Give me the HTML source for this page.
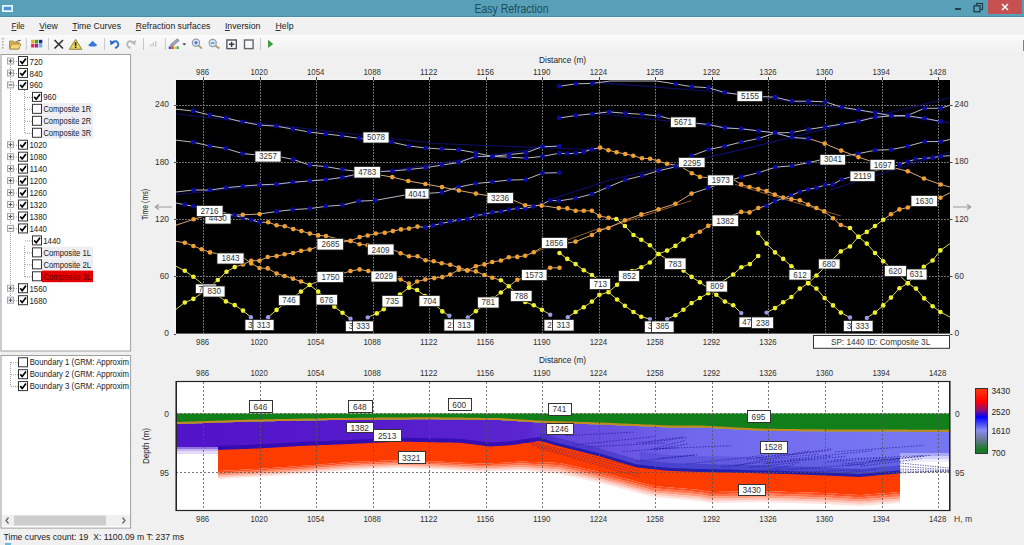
<!DOCTYPE html>
<html><head><meta charset="utf-8"><style>
html,body{margin:0;padding:0;width:1024px;height:545px;overflow:hidden;background:#f0f0f0}
svg{display:block;font-family:"Liberation Sans", sans-serif}
</style></head><body>
<svg width="1024" height="545" viewBox="0 0 1024 545">
<rect x="0" y="0" width="1024" height="545" fill="#f0f0f0" />
<rect x="0" y="0" width="1024" height="17" fill="#58a0b8" />
<line x1="0" y1="16.5" x2="1024" y2="16.5" stroke="#4a8ca2" stroke-width="1" />
<rect x="2.5" y="5.5" width="10" height="6" fill="#bfe3f5" stroke="#e8f6ff" stroke-width="1" />
<rect x="4" y="7" width="7" height="3" fill="#4a8fd8" />
<text x="511.5" y="13.0" font-size="12" fill="#1d4c5c" text-anchor="middle" textLength="74" lengthAdjust="spacingAndGlyphs" >Easy Refraction</text>
<rect x="955" y="8" width="6" height="2" fill="#1f3f4c" />
<rect x="976.5" y="3.5" width="6" height="6" fill="none" stroke="#1f3f4c" stroke-width="1.2" />
<rect x="974" y="5.8" width="6" height="6" fill="#58a0b8" stroke="#1f3f4c" stroke-width="1.3" />
<rect x="988" y="0" width="34" height="14" fill="#c75050" />
<line x1="1002" y1="4" x2="1008" y2="10" stroke="#fff" stroke-width="1.4" />
<line x1="1008" y1="4" x2="1002" y2="10" stroke="#fff" stroke-width="1.4" />
<rect x="0" y="17" width="1024" height="18" fill="#f1f1f1" />
<line x1="0" y1="17.5" x2="1024" y2="17.5" stroke="#eaf6fa" stroke-width="1" />
<text x="11.4" y="29.2" font-size="9.6" fill="#1a1a1a" text-anchor="start" textLength="13.2" lengthAdjust="spacingAndGlyphs" >File</text>
<line x1="11.4" y1="30.5" x2="16.4" y2="30.5" stroke="#1a1a1a" stroke-width="0.9" />
<text x="39.2" y="29.2" font-size="9.6" fill="#1a1a1a" text-anchor="start" textLength="18.6" lengthAdjust="spacingAndGlyphs" >View</text>
<line x1="39.2" y1="30.5" x2="44.2" y2="30.5" stroke="#1a1a1a" stroke-width="0.9" />
<text x="72.2" y="29.2" font-size="9.6" fill="#1a1a1a" text-anchor="start" textLength="48.8" lengthAdjust="spacingAndGlyphs" >Time Curves</text>
<line x1="72.2" y1="30.5" x2="77.2" y2="30.5" stroke="#1a1a1a" stroke-width="0.9" />
<text x="135.8" y="29.2" font-size="9.6" fill="#1a1a1a" text-anchor="start" textLength="74.5" lengthAdjust="spacingAndGlyphs" >Refraction surfaces</text>
<line x1="135.8" y1="30.5" x2="140.8" y2="30.5" stroke="#1a1a1a" stroke-width="0.9" />
<text x="224.9" y="29.2" font-size="9.6" fill="#1a1a1a" text-anchor="start" textLength="35.5" lengthAdjust="spacingAndGlyphs" >Inversion</text>
<line x1="224.9" y1="30.5" x2="229.9" y2="30.5" stroke="#1a1a1a" stroke-width="0.9" />
<text x="275.5" y="29.2" font-size="9.6" fill="#1a1a1a" text-anchor="start" textLength="18" lengthAdjust="spacingAndGlyphs" >Help</text>
<line x1="275.5" y1="30.5" x2="280.5" y2="30.5" stroke="#1a1a1a" stroke-width="0.9" />
<defs><linearGradient id="tbg" x1="0" y1="0" x2="0" y2="1"><stop offset="0" stop-color="#fbfbfb"/><stop offset="1" stop-color="#efefef"/></linearGradient></defs>
<rect x="0" y="35" width="1024" height="19" fill="url(#tbg)" />
<rect x="2" y="38" width="1.5" height="1.5" fill="#a0a0a0" />
<rect x="2" y="41" width="1.5" height="1.5" fill="#a0a0a0" />
<rect x="2" y="44" width="1.5" height="1.5" fill="#a0a0a0" />
<rect x="2" y="47" width="1.5" height="1.5" fill="#a0a0a0" />
<line x1="26.4" y1="38" x2="26.4" y2="50" stroke="#c8c8c8" stroke-width="1" />
<line x1="48.5" y1="38" x2="48.5" y2="50" stroke="#c8c8c8" stroke-width="1" />
<line x1="104.6" y1="38" x2="104.6" y2="50" stroke="#c8c8c8" stroke-width="1" />
<line x1="143.5" y1="38" x2="143.5" y2="50" stroke="#c8c8c8" stroke-width="1" />
<line x1="165.4" y1="38" x2="165.4" y2="50" stroke="#c8c8c8" stroke-width="1" />
<line x1="260.5" y1="38" x2="260.5" y2="50" stroke="#c8c8c8" stroke-width="1" />
<line x1="1023.5" y1="40" x2="1023.5" y2="51" stroke="#808080" stroke-width="1" />
<rect x="0" y="528" width="1024" height="17" fill="#f0f0f0" />
<text x="3.5" y="540.2" font-size="9.6" fill="#1a1a1a" text-anchor="start" textLength="180.5" lengthAdjust="spacingAndGlyphs" >Time curves count: 19  X: 1100.09 m T: 237 ms</text>
<rect x="1" y="54.5" width="129.6" height="296.5" fill="#ffffff" stroke="#a0a0a0" stroke-width="1" />
<rect x="1" y="355.5" width="129.6" height="172.6" fill="#ffffff" stroke="#a0a0a0" stroke-width="1" />
<rect x="5" y="543" width="6" height="2" fill="#6ab8e0" />
<path d="M9.5,41 h4 l1,1 h4.5 v7 h-9.5 z" fill="#d8b450" stroke="#9a7d3a" stroke-width="0.8"/>
<path d="M9.5,49 l2.2,-5 h9.3 l-2.2,5 z" fill="#f2d678" stroke="#a08440" stroke-width="0.8"/>
<path d="M16,41.5 q2,-2 4,-1.5 l-0.5,-0.8 l1.5,1.4 l-1.8,0.6 l0.4,-0.5 q-1.8,-0.2 -3.2,1.2 z" fill="#404850"/>
<rect x="31.1" y="39.8" width="3.3" height="3.6" fill="#e8b020" />
<rect x="34.9" y="39.8" width="3.3" height="3.6" fill="#40a030" />
<rect x="39.0" y="39.8" width="3.3" height="3.6" fill="#1a2a9a" />
<rect x="31.1" y="43.9" width="3.3" height="3.6" fill="#e03050" />
<rect x="34.9" y="43.9" width="3.3" height="3.6" fill="#9a20a0" />
<rect x="39.0" y="43.9" width="3.3" height="3.6" fill="#60c0e0" />
<path d="M54.5,40 L63,48.5 M63,40 L54.5,48.5" stroke="#303030" stroke-width="1.6" fill="none"/>
<path d="M75.6,39.3 L81.8,49.3 L69.4,49.3 Z" fill="#ead660" stroke="#8a7a30" stroke-width="0.9" stroke-linejoin="round"/>
<path d="M75.6,42.2 v3.6" stroke="#202020" stroke-width="1.6"/><rect x="74.8" y="46.6" width="1.6" height="1.5" fill="#202020"/>
<path d="M92.6,40.8 L97.2,45.2 L95.2,46.6 L90,46.6 L88.1,45.2 Z" fill="#3a78d8"/>
<path d="M112,42.5 q5,-3 6.2,1 q0.8,3 -3.2,4.6" stroke="#2f6fc8" stroke-width="1.9" fill="none"/>
<path d="M109.7,40 L110.5,45.3 L115,42.8 Z" fill="#2f6fc8"/>
<path d="M133.5,42.5 q-5,-3 -6.2,1 q-0.8,3 3.2,4.6" stroke="#b8b8b8" stroke-width="1.9" fill="none"/>
<path d="M136,40 L135.2,45.3 L130.7,42.8 Z" fill="#b8b8b8"/>
<rect x="150" y="44.2" width="1.4" height="2.4" fill="#c8c8c8" />
<rect x="152.6" y="42.5" width="1.4" height="4.1" fill="#c8c8c8" />
<rect x="155" y="41.1" width="1.4" height="5.5" fill="#c8c8c8" />
<path d="M170,45 L177.2,38.8 L179.2,40.6 L172,46.8 Z" fill="#98a4b8" stroke="#6a7688" stroke-width="0.6"/>
<path d="M170,45 L172,46.8 L169.5,47.2 Z" fill="#d8d0a0"/>
<rect x="168.8" y="46.4" width="2.1" height="2.6" fill="#3050a0" />
<rect x="171.4" y="46.4" width="2.1" height="2.6" fill="#d03040" />
<rect x="174.0" y="46.4" width="2.1" height="2.6" fill="#e0d040" />
<rect x="176.60000000000002" y="46.4" width="2.1" height="2.6" fill="#30a040" />
<path d="M182.4,43.4 h3.8 l-1.9,1.9 z" fill="#101010"/>
<path d="M198.6,45.4 L201.9,48.6" stroke="#b09a58" stroke-width="1.8"/>
<circle cx="196" cy="42.8" r="3.6" fill="#dfe8f6" stroke="#8e9cb4" stroke-width="1.2"/>
<path d="M194.2,42.8 h3.6 M196,41.0 v3.6" stroke="#3a5cb0" stroke-width="1.1"/>
<path d="M215.29999999999998,45.6 L219.3,48.5" stroke="#b09a58" stroke-width="1.8"/>
<circle cx="212.7" cy="43" r="3.6" fill="#dfe8f6" stroke="#8e9cb4" stroke-width="1.2"/>
<path d="M210.89999999999998,43 h3.6" stroke="#3a5cb0" stroke-width="1.1"/>
<rect x="226.9" y="40" width="9.4" height="8.6" fill="#fff" stroke="#4e5660" stroke-width="1.4"/>
<path d="M228.9,44.3 h5.4 M231.6,41.7 v5.2" stroke="#303840" stroke-width="1.5"/>
<rect x="244.5" y="40" width="8.6" height="8.6" fill="#f8f8f8" stroke="#5e6670" stroke-width="1.4"/>
<path d="M268,39.7 L273.2,43.9 L268,48.1 Z" fill="#3d9a3d"/>
<line x1="10.5" y1="65" x2="10.5" y2="296" stroke="#a0a0a0" stroke-width="1" stroke-dasharray="1,1"/>
<line x1="24.5" y1="90" x2="24.5" y2="133" stroke="#a0a0a0" stroke-width="1" stroke-dasharray="1,1"/>
<line x1="24.5" y1="246" x2="24.5" y2="277" stroke="#a0a0a0" stroke-width="1" stroke-dasharray="1,1"/>
<rect x="7.5" y="58.0" width="6" height="6" fill="#f4f4f4" stroke="#a8a8a8" stroke-width="1"/>
<path d="M8.6,61.0 h3.8" stroke="#4a5262" stroke-width="1"/>
<path d="M10.5,59.1 v3.8" stroke="#4a5262" stroke-width="1"/>
<line x1="14" y1="61.5" x2="18" y2="61.5" stroke="#a0a0a0" stroke-width="1" stroke-dasharray="1,1"/>
<rect x="18.5" y="56.5" width="9" height="9" fill="#fff" stroke="#333" stroke-width="1"/>
<path d="M20.2,61.0 L22.2,63.3 L26,58.4" stroke="#000" stroke-width="1.7" fill="none"/>
<text x="29.5" y="64.5" font-size="9.6" fill="#1a1a1a" text-anchor="start" textLength="13.25" lengthAdjust="spacingAndGlyphs" >720</text>
<rect x="7.5" y="70.0" width="6" height="6" fill="#f4f4f4" stroke="#a8a8a8" stroke-width="1"/>
<path d="M8.6,73.0 h3.8" stroke="#4a5262" stroke-width="1"/>
<path d="M10.5,71.1 v3.8" stroke="#4a5262" stroke-width="1"/>
<line x1="14" y1="73.5" x2="18" y2="73.5" stroke="#a0a0a0" stroke-width="1" stroke-dasharray="1,1"/>
<rect x="18.5" y="68.46000000000001" width="9" height="9" fill="#fff" stroke="#333" stroke-width="1"/>
<path d="M20.2,72.96000000000001 L22.2,75.26 L26,70.36000000000001" stroke="#000" stroke-width="1.7" fill="none"/>
<text x="29.5" y="76.5" font-size="9.6" fill="#1a1a1a" text-anchor="start" textLength="13.25" lengthAdjust="spacingAndGlyphs" >840</text>
<rect x="7.5" y="81.9" width="6" height="6" fill="#f4f4f4" stroke="#a8a8a8" stroke-width="1"/>
<path d="M8.6,84.9 h3.8" stroke="#4a5262" stroke-width="1"/>
<line x1="14" y1="85.4" x2="18" y2="85.4" stroke="#a0a0a0" stroke-width="1" stroke-dasharray="1,1"/>
<rect x="18.5" y="80.42" width="9" height="9" fill="#fff" stroke="#333" stroke-width="1"/>
<path d="M20.2,84.92 L22.2,87.22 L26,82.32000000000001" stroke="#000" stroke-width="1.7" fill="none"/>
<text x="29.5" y="88.4" font-size="9.6" fill="#1a1a1a" text-anchor="start" textLength="13.25" lengthAdjust="spacingAndGlyphs" >960</text>
<line x1="25" y1="97.4" x2="32" y2="97.4" stroke="#a0a0a0" stroke-width="1" stroke-dasharray="1,1"/>
<text x="43.2" y="100.4" font-size="9.6" fill="#1a1a1a" text-anchor="start" textLength="13.25" lengthAdjust="spacingAndGlyphs" >960</text>
<rect x="32.5" y="92.38" width="9" height="9" fill="#fff" stroke="#333" stroke-width="1"/>
<path d="M34.2,96.88 L36.2,99.17999999999999 L40,94.28" stroke="#000" stroke-width="1.7" fill="none"/>
<line x1="25" y1="109.3" x2="32" y2="109.3" stroke="#a0a0a0" stroke-width="1" stroke-dasharray="1,1"/>
<rect x="42" y="103.14" width="51" height="11.6" fill="#eeeef2" />
<text x="43.4" y="112.3" font-size="9.6" fill="#1a1a1a" text-anchor="start" textLength="47.7" lengthAdjust="spacingAndGlyphs" >Composite 1R</text>
<rect x="32.5" y="104.34" width="9" height="9" fill="#fff" stroke="#333" stroke-width="1"/>
<line x1="25" y1="121.3" x2="32" y2="121.3" stroke="#a0a0a0" stroke-width="1" stroke-dasharray="1,1"/>
<rect x="42" y="115.10000000000001" width="51" height="11.6" fill="#eeeef2" />
<text x="43.4" y="124.3" font-size="9.6" fill="#1a1a1a" text-anchor="start" textLength="47.7" lengthAdjust="spacingAndGlyphs" >Composite 2R</text>
<rect x="32.5" y="116.30000000000001" width="9" height="9" fill="#fff" stroke="#333" stroke-width="1"/>
<line x1="25" y1="133.3" x2="32" y2="133.3" stroke="#a0a0a0" stroke-width="1" stroke-dasharray="1,1"/>
<rect x="42" y="127.05999999999999" width="51" height="11.6" fill="#eeeef2" />
<text x="43.4" y="136.3" font-size="9.6" fill="#1a1a1a" text-anchor="start" textLength="47.7" lengthAdjust="spacingAndGlyphs" >Composite 3R</text>
<rect x="32.5" y="128.26" width="9" height="9" fill="#fff" stroke="#333" stroke-width="1"/>
<rect x="7.5" y="141.7" width="6" height="6" fill="#f4f4f4" stroke="#a8a8a8" stroke-width="1"/>
<path d="M8.6,144.7 h3.8" stroke="#4a5262" stroke-width="1"/>
<path d="M10.5,142.8 v3.8" stroke="#4a5262" stroke-width="1"/>
<line x1="14" y1="145.2" x2="18" y2="145.2" stroke="#a0a0a0" stroke-width="1" stroke-dasharray="1,1"/>
<rect x="18.5" y="140.22" width="9" height="9" fill="#fff" stroke="#333" stroke-width="1"/>
<path d="M20.2,144.72 L22.2,147.02 L26,142.12" stroke="#000" stroke-width="1.7" fill="none"/>
<text x="29.5" y="148.2" font-size="9.6" fill="#1a1a1a" text-anchor="start" textLength="17.5" lengthAdjust="spacingAndGlyphs" >1020</text>
<rect x="7.5" y="153.7" width="6" height="6" fill="#f4f4f4" stroke="#a8a8a8" stroke-width="1"/>
<path d="M8.6,156.7 h3.8" stroke="#4a5262" stroke-width="1"/>
<path d="M10.5,154.8 v3.8" stroke="#4a5262" stroke-width="1"/>
<line x1="14" y1="157.2" x2="18" y2="157.2" stroke="#a0a0a0" stroke-width="1" stroke-dasharray="1,1"/>
<rect x="18.5" y="152.18" width="9" height="9" fill="#fff" stroke="#333" stroke-width="1"/>
<path d="M20.2,156.68 L22.2,158.98000000000002 L26,154.08" stroke="#000" stroke-width="1.7" fill="none"/>
<text x="29.5" y="160.2" font-size="9.6" fill="#1a1a1a" text-anchor="start" textLength="17.5" lengthAdjust="spacingAndGlyphs" >1080</text>
<rect x="7.5" y="165.6" width="6" height="6" fill="#f4f4f4" stroke="#a8a8a8" stroke-width="1"/>
<path d="M8.6,168.6 h3.8" stroke="#4a5262" stroke-width="1"/>
<path d="M10.5,166.7 v3.8" stroke="#4a5262" stroke-width="1"/>
<line x1="14" y1="169.1" x2="18" y2="169.1" stroke="#a0a0a0" stroke-width="1" stroke-dasharray="1,1"/>
<rect x="18.5" y="164.14000000000001" width="9" height="9" fill="#fff" stroke="#333" stroke-width="1"/>
<path d="M20.2,168.64000000000001 L22.2,170.94000000000003 L26,166.04000000000002" stroke="#000" stroke-width="1.7" fill="none"/>
<text x="29.5" y="172.1" font-size="9.6" fill="#1a1a1a" text-anchor="start" textLength="17.5" lengthAdjust="spacingAndGlyphs" >1140</text>
<rect x="7.5" y="177.6" width="6" height="6" fill="#f4f4f4" stroke="#a8a8a8" stroke-width="1"/>
<path d="M8.6,180.6 h3.8" stroke="#4a5262" stroke-width="1"/>
<path d="M10.5,178.7 v3.8" stroke="#4a5262" stroke-width="1"/>
<line x1="14" y1="181.1" x2="18" y2="181.1" stroke="#a0a0a0" stroke-width="1" stroke-dasharray="1,1"/>
<rect x="18.5" y="176.10000000000002" width="9" height="9" fill="#fff" stroke="#333" stroke-width="1"/>
<path d="M20.2,180.60000000000002 L22.2,182.90000000000003 L26,178.00000000000003" stroke="#000" stroke-width="1.7" fill="none"/>
<text x="29.5" y="184.1" font-size="9.6" fill="#1a1a1a" text-anchor="start" textLength="17.5" lengthAdjust="spacingAndGlyphs" >1200</text>
<rect x="7.5" y="189.6" width="6" height="6" fill="#f4f4f4" stroke="#a8a8a8" stroke-width="1"/>
<path d="M8.6,192.6 h3.8" stroke="#4a5262" stroke-width="1"/>
<path d="M10.5,190.7 v3.8" stroke="#4a5262" stroke-width="1"/>
<line x1="14" y1="193.1" x2="18" y2="193.1" stroke="#a0a0a0" stroke-width="1" stroke-dasharray="1,1"/>
<rect x="18.5" y="188.06" width="9" height="9" fill="#fff" stroke="#333" stroke-width="1"/>
<path d="M20.2,192.56 L22.2,194.86 L26,189.96" stroke="#000" stroke-width="1.7" fill="none"/>
<text x="29.5" y="196.1" font-size="9.6" fill="#1a1a1a" text-anchor="start" textLength="17.5" lengthAdjust="spacingAndGlyphs" >1260</text>
<rect x="7.5" y="201.5" width="6" height="6" fill="#f4f4f4" stroke="#a8a8a8" stroke-width="1"/>
<path d="M8.6,204.5 h3.8" stroke="#4a5262" stroke-width="1"/>
<path d="M10.5,202.6 v3.8" stroke="#4a5262" stroke-width="1"/>
<line x1="14" y1="205.0" x2="18" y2="205.0" stroke="#a0a0a0" stroke-width="1" stroke-dasharray="1,1"/>
<rect x="18.5" y="200.02" width="9" height="9" fill="#fff" stroke="#333" stroke-width="1"/>
<path d="M20.2,204.52 L22.2,206.82000000000002 L26,201.92000000000002" stroke="#000" stroke-width="1.7" fill="none"/>
<text x="29.5" y="208.0" font-size="9.6" fill="#1a1a1a" text-anchor="start" textLength="17.5" lengthAdjust="spacingAndGlyphs" >1320</text>
<rect x="7.5" y="213.5" width="6" height="6" fill="#f4f4f4" stroke="#a8a8a8" stroke-width="1"/>
<path d="M8.6,216.5 h3.8" stroke="#4a5262" stroke-width="1"/>
<path d="M10.5,214.6 v3.8" stroke="#4a5262" stroke-width="1"/>
<line x1="14" y1="217.0" x2="18" y2="217.0" stroke="#a0a0a0" stroke-width="1" stroke-dasharray="1,1"/>
<rect x="18.5" y="211.98000000000002" width="9" height="9" fill="#fff" stroke="#333" stroke-width="1"/>
<path d="M20.2,216.48000000000002 L22.2,218.78000000000003 L26,213.88000000000002" stroke="#000" stroke-width="1.7" fill="none"/>
<text x="29.5" y="220.0" font-size="9.6" fill="#1a1a1a" text-anchor="start" textLength="17.5" lengthAdjust="spacingAndGlyphs" >1380</text>
<rect x="7.5" y="225.4" width="6" height="6" fill="#f4f4f4" stroke="#a8a8a8" stroke-width="1"/>
<path d="M8.6,228.4 h3.8" stroke="#4a5262" stroke-width="1"/>
<line x1="14" y1="228.9" x2="18" y2="228.9" stroke="#a0a0a0" stroke-width="1" stroke-dasharray="1,1"/>
<rect x="18.5" y="223.94" width="9" height="9" fill="#fff" stroke="#333" stroke-width="1"/>
<path d="M20.2,228.44 L22.2,230.74 L26,225.84" stroke="#000" stroke-width="1.7" fill="none"/>
<text x="29.5" y="231.9" font-size="9.6" fill="#1a1a1a" text-anchor="start" textLength="17.5" lengthAdjust="spacingAndGlyphs" >1440</text>
<line x1="25" y1="240.9" x2="32" y2="240.9" stroke="#a0a0a0" stroke-width="1" stroke-dasharray="1,1"/>
<text x="43.2" y="243.9" font-size="9.6" fill="#1a1a1a" text-anchor="start" textLength="17.5" lengthAdjust="spacingAndGlyphs" >1440</text>
<rect x="32.5" y="235.9" width="9" height="9" fill="#fff" stroke="#333" stroke-width="1"/>
<path d="M34.2,240.4 L36.2,242.70000000000002 L40,237.8" stroke="#000" stroke-width="1.7" fill="none"/>
<line x1="25" y1="252.9" x2="32" y2="252.9" stroke="#a0a0a0" stroke-width="1" stroke-dasharray="1,1"/>
<rect x="42" y="246.66000000000003" width="51" height="11.6" fill="#eeeef2" />
<text x="43.4" y="255.9" font-size="9.6" fill="#1a1a1a" text-anchor="start" textLength="47.7" lengthAdjust="spacingAndGlyphs" >Composite 1L</text>
<rect x="32.5" y="247.86" width="9" height="9" fill="#fff" stroke="#333" stroke-width="1"/>
<line x1="25" y1="264.8" x2="32" y2="264.8" stroke="#a0a0a0" stroke-width="1" stroke-dasharray="1,1"/>
<rect x="42" y="258.62000000000006" width="51" height="11.6" fill="#eeeef2" />
<text x="43.4" y="267.8" font-size="9.6" fill="#1a1a1a" text-anchor="start" textLength="47.7" lengthAdjust="spacingAndGlyphs" >Composite 2L</text>
<rect x="32.5" y="259.82000000000005" width="9" height="9" fill="#fff" stroke="#333" stroke-width="1"/>
<line x1="25" y1="276.8" x2="32" y2="276.8" stroke="#a0a0a0" stroke-width="1" stroke-dasharray="1,1"/>
<rect x="42" y="270.58000000000004" width="51" height="11.6" fill="#e60000" />
<text x="43.4" y="279.8" font-size="9.6" fill="#600000" text-anchor="start" textLength="47.7" lengthAdjust="spacingAndGlyphs" >Composite 3L</text>
<rect x="32.5" y="271.78000000000003" width="9" height="9" fill="#fff" stroke="#333" stroke-width="1"/>
<rect x="7.5" y="285.2" width="6" height="6" fill="#f4f4f4" stroke="#a8a8a8" stroke-width="1"/>
<path d="M8.6,288.2 h3.8" stroke="#4a5262" stroke-width="1"/>
<path d="M10.5,286.3 v3.8" stroke="#4a5262" stroke-width="1"/>
<line x1="14" y1="288.7" x2="18" y2="288.7" stroke="#a0a0a0" stroke-width="1" stroke-dasharray="1,1"/>
<rect x="18.5" y="283.74" width="9" height="9" fill="#fff" stroke="#333" stroke-width="1"/>
<path d="M20.2,288.24 L22.2,290.54 L26,285.64" stroke="#000" stroke-width="1.7" fill="none"/>
<text x="29.5" y="291.7" font-size="9.6" fill="#1a1a1a" text-anchor="start" textLength="17.5" lengthAdjust="spacingAndGlyphs" >1560</text>
<rect x="7.5" y="297.2" width="6" height="6" fill="#f4f4f4" stroke="#a8a8a8" stroke-width="1"/>
<path d="M8.6,300.2 h3.8" stroke="#4a5262" stroke-width="1"/>
<path d="M10.5,298.3 v3.8" stroke="#4a5262" stroke-width="1"/>
<line x1="14" y1="300.7" x2="18" y2="300.7" stroke="#a0a0a0" stroke-width="1" stroke-dasharray="1,1"/>
<rect x="18.5" y="295.70000000000005" width="9" height="9" fill="#fff" stroke="#333" stroke-width="1"/>
<path d="M20.2,300.20000000000005 L22.2,302.50000000000006 L26,297.6" stroke="#000" stroke-width="1.7" fill="none"/>
<text x="29.5" y="303.7" font-size="9.6" fill="#1a1a1a" text-anchor="start" textLength="17.5" lengthAdjust="spacingAndGlyphs" >1680</text>
<line x1="10.5" y1="362" x2="10.5" y2="386.5" stroke="#a0a0a0" stroke-width="1" stroke-dasharray="1,1"/>
<line x1="11" y1="362.8" x2="18" y2="362.8" stroke="#a0a0a0" stroke-width="1" stroke-dasharray="1,1"/>
<rect x="18.5" y="357.8" width="9" height="9" fill="#fff" stroke="#333" stroke-width="1"/>
<text x="29.7" y="365.0" font-size="9.8" fill="#1a1a1a" text-anchor="start" textLength="99.3" lengthAdjust="spacingAndGlyphs" >Boundary 1 (GRM: Approxim</text>
<line x1="11" y1="374.7" x2="18" y2="374.7" stroke="#a0a0a0" stroke-width="1" stroke-dasharray="1,1"/>
<rect x="18.5" y="369.7" width="9" height="9" fill="#fff" stroke="#333" stroke-width="1"/>
<path d="M20.2,374.2 L22.2,376.5 L26,371.59999999999997" stroke="#000" stroke-width="1.7" fill="none"/>
<text x="29.7" y="376.9" font-size="9.8" fill="#1a1a1a" text-anchor="start" textLength="99.3" lengthAdjust="spacingAndGlyphs" >Boundary 2 (GRM: Approxim</text>
<line x1="11" y1="386.6" x2="18" y2="386.6" stroke="#a0a0a0" stroke-width="1" stroke-dasharray="1,1"/>
<rect x="18.5" y="381.6" width="9" height="9" fill="#fff" stroke="#333" stroke-width="1"/>
<path d="M20.2,386.1 L22.2,388.40000000000003 L26,383.5" stroke="#000" stroke-width="1.7" fill="none"/>
<text x="29.7" y="388.8" font-size="9.8" fill="#1a1a1a" text-anchor="start" textLength="99.3" lengthAdjust="spacingAndGlyphs" >Boundary 3 (GRM: Approxim</text>
<rect x="2" y="515" width="128" height="11" fill="#f0f0f0" />
<rect x="14" y="515.5" width="92" height="10" fill="#cdcdcd" />
<path d="M8.5,517.5 L6,520.5 L8.5,523.5" stroke="#606060" stroke-width="1.2" fill="none"/>
<path d="M122.5,517.5 L125,520.5 L122.5,523.5" stroke="#606060" stroke-width="1.2" fill="none"/>
<rect x="175" y="79" width="776" height="255.6" fill="#f4f4f4" />
<rect x="176" y="80" width="774" height="253.6" fill="#000" />
<line x1="203.5" y1="80" x2="203.5" y2="333.6" stroke="#707070" stroke-width="1" stroke-dasharray="2,1"/>
<line x1="203.5" y1="77" x2="203.5" y2="80" stroke="#444" stroke-width="1" />
<line x1="260.5" y1="80" x2="260.5" y2="333.6" stroke="#707070" stroke-width="1" stroke-dasharray="2,1"/>
<line x1="260.5" y1="77" x2="260.5" y2="80" stroke="#444" stroke-width="1" />
<line x1="316.5" y1="80" x2="316.5" y2="333.6" stroke="#707070" stroke-width="1" stroke-dasharray="2,1"/>
<line x1="316.5" y1="77" x2="316.5" y2="80" stroke="#444" stroke-width="1" />
<line x1="373.5" y1="80" x2="373.5" y2="333.6" stroke="#707070" stroke-width="1" stroke-dasharray="2,1"/>
<line x1="373.5" y1="77" x2="373.5" y2="80" stroke="#444" stroke-width="1" />
<line x1="429.5" y1="80" x2="429.5" y2="333.6" stroke="#707070" stroke-width="1" stroke-dasharray="2,1"/>
<line x1="429.5" y1="77" x2="429.5" y2="80" stroke="#444" stroke-width="1" />
<line x1="486.5" y1="80" x2="486.5" y2="333.6" stroke="#707070" stroke-width="1" stroke-dasharray="2,1"/>
<line x1="486.5" y1="77" x2="486.5" y2="80" stroke="#444" stroke-width="1" />
<line x1="542.5" y1="80" x2="542.5" y2="333.6" stroke="#707070" stroke-width="1" stroke-dasharray="2,1"/>
<line x1="542.5" y1="77" x2="542.5" y2="80" stroke="#444" stroke-width="1" />
<line x1="599.5" y1="80" x2="599.5" y2="333.6" stroke="#707070" stroke-width="1" stroke-dasharray="2,1"/>
<line x1="599.5" y1="77" x2="599.5" y2="80" stroke="#444" stroke-width="1" />
<line x1="655.5" y1="80" x2="655.5" y2="333.6" stroke="#707070" stroke-width="1" stroke-dasharray="2,1"/>
<line x1="655.5" y1="77" x2="655.5" y2="80" stroke="#444" stroke-width="1" />
<line x1="712.5" y1="80" x2="712.5" y2="333.6" stroke="#707070" stroke-width="1" stroke-dasharray="2,1"/>
<line x1="712.5" y1="77" x2="712.5" y2="80" stroke="#444" stroke-width="1" />
<line x1="768.5" y1="80" x2="768.5" y2="333.6" stroke="#707070" stroke-width="1" stroke-dasharray="2,1"/>
<line x1="768.5" y1="77" x2="768.5" y2="80" stroke="#444" stroke-width="1" />
<line x1="825.5" y1="80" x2="825.5" y2="333.6" stroke="#707070" stroke-width="1" stroke-dasharray="2,1"/>
<line x1="825.5" y1="77" x2="825.5" y2="80" stroke="#444" stroke-width="1" />
<line x1="882.5" y1="80" x2="882.5" y2="333.6" stroke="#707070" stroke-width="1" stroke-dasharray="2,1"/>
<line x1="882.5" y1="77" x2="882.5" y2="80" stroke="#444" stroke-width="1" />
<line x1="938.5" y1="80" x2="938.5" y2="333.6" stroke="#707070" stroke-width="1" stroke-dasharray="2,1"/>
<line x1="938.5" y1="77" x2="938.5" y2="80" stroke="#444" stroke-width="1" />
<line x1="176" y1="276.5" x2="950" y2="276.5" stroke="#707070" stroke-width="1" stroke-dasharray="2,1"/>
<line x1="176" y1="219.5" x2="950" y2="219.5" stroke="#707070" stroke-width="1" stroke-dasharray="2,1"/>
<line x1="176" y1="162.5" x2="950" y2="162.5" stroke="#707070" stroke-width="1" stroke-dasharray="2,1"/>
<line x1="176" y1="105.5" x2="950" y2="105.5" stroke="#707070" stroke-width="1" stroke-dasharray="2,1"/>
<line x1="174" y1="334.5" x2="176" y2="334.5" stroke="#444" stroke-width="1" />
<line x1="950" y1="334.5" x2="952.5" y2="334.5" stroke="#444" stroke-width="1" />
<text x="169.0" y="336.4" font-size="9.6" fill="#333" text-anchor="end" textLength="4.67" lengthAdjust="spacingAndGlyphs" >0</text>
<text x="954.5" y="336.0" font-size="9.6" fill="#333" text-anchor="start" textLength="4.67" lengthAdjust="spacingAndGlyphs" >0</text>
<line x1="174" y1="276.5" x2="176" y2="276.5" stroke="#444" stroke-width="1" />
<line x1="950" y1="276.5" x2="952.5" y2="276.5" stroke="#444" stroke-width="1" />
<text x="169.0" y="279.2" font-size="9.6" fill="#333" text-anchor="end" textLength="9.34" lengthAdjust="spacingAndGlyphs" >60</text>
<text x="954.5" y="278.8" font-size="9.6" fill="#333" text-anchor="start" textLength="9.34" lengthAdjust="spacingAndGlyphs" >60</text>
<line x1="174" y1="219.5" x2="176" y2="219.5" stroke="#444" stroke-width="1" />
<line x1="950" y1="219.5" x2="952.5" y2="219.5" stroke="#444" stroke-width="1" />
<text x="169.0" y="221.9" font-size="9.6" fill="#333" text-anchor="end" textLength="14.01" lengthAdjust="spacingAndGlyphs" >120</text>
<text x="954.5" y="221.5" font-size="9.6" fill="#333" text-anchor="start" textLength="14.01" lengthAdjust="spacingAndGlyphs" >120</text>
<line x1="174" y1="162.5" x2="176" y2="162.5" stroke="#444" stroke-width="1" />
<line x1="950" y1="162.5" x2="952.5" y2="162.5" stroke="#444" stroke-width="1" />
<text x="169.0" y="164.7" font-size="9.6" fill="#333" text-anchor="end" textLength="14.01" lengthAdjust="spacingAndGlyphs" >180</text>
<text x="954.5" y="164.3" font-size="9.6" fill="#333" text-anchor="start" textLength="14.01" lengthAdjust="spacingAndGlyphs" >180</text>
<line x1="174" y1="105.5" x2="176" y2="105.5" stroke="#444" stroke-width="1" />
<line x1="950" y1="105.5" x2="952.5" y2="105.5" stroke="#444" stroke-width="1" />
<text x="169.0" y="107.4" font-size="9.6" fill="#333" text-anchor="end" textLength="14.01" lengthAdjust="spacingAndGlyphs" >240</text>
<text x="954.5" y="107.0" font-size="9.6" fill="#333" text-anchor="start" textLength="14.01" lengthAdjust="spacingAndGlyphs" >240</text>
<text x="562.6" y="63.0" font-size="9.6" fill="#222" text-anchor="middle" textLength="47" lengthAdjust="spacingAndGlyphs" >Distance (m)</text>
<text x="202.6" y="74.6" font-size="9.6" fill="#333" text-anchor="middle" textLength="13.15" lengthAdjust="spacingAndGlyphs" >986</text>
<text x="202.6" y="345.4" font-size="9.6" fill="#333" text-anchor="middle" textLength="13.15" lengthAdjust="spacingAndGlyphs" >986</text>
<text x="259.1" y="74.6" font-size="9.6" fill="#333" text-anchor="middle" textLength="17.4" lengthAdjust="spacingAndGlyphs" >1020</text>
<text x="259.1" y="345.4" font-size="9.6" fill="#333" text-anchor="middle" textLength="17.4" lengthAdjust="spacingAndGlyphs" >1020</text>
<text x="315.7" y="74.6" font-size="9.6" fill="#333" text-anchor="middle" textLength="17.4" lengthAdjust="spacingAndGlyphs" >1054</text>
<text x="315.7" y="345.4" font-size="9.6" fill="#333" text-anchor="middle" textLength="17.4" lengthAdjust="spacingAndGlyphs" >1054</text>
<text x="372.2" y="74.6" font-size="9.6" fill="#333" text-anchor="middle" textLength="17.4" lengthAdjust="spacingAndGlyphs" >1088</text>
<text x="372.2" y="345.4" font-size="9.6" fill="#333" text-anchor="middle" textLength="17.4" lengthAdjust="spacingAndGlyphs" >1088</text>
<text x="428.8" y="74.6" font-size="9.6" fill="#333" text-anchor="middle" textLength="17.4" lengthAdjust="spacingAndGlyphs" >1122</text>
<text x="428.8" y="345.4" font-size="9.6" fill="#333" text-anchor="middle" textLength="17.4" lengthAdjust="spacingAndGlyphs" >1122</text>
<text x="485.3" y="74.6" font-size="9.6" fill="#333" text-anchor="middle" textLength="17.4" lengthAdjust="spacingAndGlyphs" >1156</text>
<text x="485.3" y="345.4" font-size="9.6" fill="#333" text-anchor="middle" textLength="17.4" lengthAdjust="spacingAndGlyphs" >1156</text>
<text x="541.8" y="74.6" font-size="9.6" fill="#333" text-anchor="middle" textLength="17.4" lengthAdjust="spacingAndGlyphs" >1190</text>
<text x="541.8" y="345.4" font-size="9.6" fill="#333" text-anchor="middle" textLength="17.4" lengthAdjust="spacingAndGlyphs" >1190</text>
<text x="598.4" y="74.6" font-size="9.6" fill="#333" text-anchor="middle" textLength="17.4" lengthAdjust="spacingAndGlyphs" >1224</text>
<text x="598.4" y="345.4" font-size="9.6" fill="#333" text-anchor="middle" textLength="17.4" lengthAdjust="spacingAndGlyphs" >1224</text>
<text x="654.9" y="74.6" font-size="9.6" fill="#333" text-anchor="middle" textLength="17.4" lengthAdjust="spacingAndGlyphs" >1258</text>
<text x="654.9" y="345.4" font-size="9.6" fill="#333" text-anchor="middle" textLength="17.4" lengthAdjust="spacingAndGlyphs" >1258</text>
<text x="711.5" y="74.6" font-size="9.6" fill="#333" text-anchor="middle" textLength="17.4" lengthAdjust="spacingAndGlyphs" >1292</text>
<text x="711.5" y="345.4" font-size="9.6" fill="#333" text-anchor="middle" textLength="17.4" lengthAdjust="spacingAndGlyphs" >1292</text>
<text x="768.0" y="74.6" font-size="9.6" fill="#333" text-anchor="middle" textLength="17.4" lengthAdjust="spacingAndGlyphs" >1326</text>
<text x="768.0" y="345.4" font-size="9.6" fill="#333" text-anchor="middle" textLength="17.4" lengthAdjust="spacingAndGlyphs" >1326</text>
<text x="824.5" y="74.6" font-size="9.6" fill="#333" text-anchor="middle" textLength="17.4" lengthAdjust="spacingAndGlyphs" >1360</text>
<text x="824.5" y="345.4" font-size="9.6" fill="#333" text-anchor="middle" textLength="17.4" lengthAdjust="spacingAndGlyphs" >1360</text>
<text x="881.1" y="74.6" font-size="9.6" fill="#333" text-anchor="middle" textLength="17.4" lengthAdjust="spacingAndGlyphs" >1394</text>
<text x="881.1" y="345.4" font-size="9.6" fill="#333" text-anchor="middle" textLength="17.4" lengthAdjust="spacingAndGlyphs" >1394</text>
<text x="937.6" y="74.6" font-size="9.6" fill="#333" text-anchor="middle" textLength="17.4" lengthAdjust="spacingAndGlyphs" >1428</text>
<text x="937.6" y="345.4" font-size="9.6" fill="#333" text-anchor="middle" textLength="17.4" lengthAdjust="spacingAndGlyphs" >1428</text>
<text transform="translate(148.4,204.5) rotate(-90)" font-size="9.6" fill="#222" text-anchor="middle" textLength="31" lengthAdjust="spacingAndGlyphs">Time (ms)</text>
<path d="M155,207 h17 M155,207 l4,-2.5 M155,207 l4,2.5" stroke="#9a9a9a" stroke-width="1.1" fill="none"/>
<path d="M953,207 h18 M971,207 l-4,-2.5 M971,207 l-4,2.5" stroke="#9a9a9a" stroke-width="1.1" fill="none"/>
<clipPath id="topclip"><rect x="176" y="80" width="774" height="253.6"/></clipPath>
<g clip-path="url(#topclip)">
<polyline points="176,113.8 436,143.5 600,150" fill="none" stroke="#12127a" stroke-width="1.1" opacity="0.85"/>
<polyline points="176,194.5 342,178 560,145" fill="none" stroke="#12127a" stroke-width="1.1" opacity="0.85"/>
<polyline points="596,82.4 724,92.5 950,122.6" fill="none" stroke="#12127a" stroke-width="1.1" opacity="0.85"/>
<polyline points="596,113.3 756,130.4 808,140" fill="none" stroke="#12127a" stroke-width="1.1" opacity="0.85"/>
<polyline points="750,147.6 950,97.8" fill="none" stroke="#12127a" stroke-width="1.1" opacity="0.85"/>
<polyline points="549,200 610,180 750,147.6" fill="none" stroke="#12127a" stroke-width="1.1" opacity="0.85"/>
<polyline points="830,190 950,152" fill="none" stroke="#12127a" stroke-width="1.1" opacity="0.85"/>
<polyline points="596,231 691.3,200.6" fill="none" stroke="#a06030" stroke-width="1" opacity="0.9"/>
<polyline points="735,184.4 790,200.9 840.8,215.9" fill="none" stroke="#a06030" stroke-width="1" opacity="0.9"/>
<polyline points="530,254 600,228" fill="none" stroke="#a06030" stroke-width="1" opacity="0.9"/>
<polyline points="176,309.3 184.8,302.5 193.4,298.9 205,291 217.8,280 226.5,271.7 234.7,267.1" fill="none" stroke="#d8d850" stroke-width="1"/>
<polyline points="234.7,267.1 243,264.4 251.2,260.7 259.5,260.7 267.7,257 276.6,256.1 284.6,254.3 293,253 301.1,250.8 309.6,249.6 317,247 350.5,240.7 359.6,237.1 367.7,235.5 375.8,233.5 384.8,232.7 392.9,231.1 401,229.4 409,228.6 417.5,226.6" fill="none" stroke="#d8a878" stroke-width="1"/>
<polyline points="417.5,226.6 425.4,227.4 433,225.5 441,223.5 450.2,221.7 458.8,220.2 467.3,219 475.9,215.5 484.5,214.4 492.3,212.3 500.9,211.6 508.8,209.7 517.3,208.4 525.2,208.4 533.5,206.5 541.6,204.6 550.2,200.3 558.8,200.9 575.6,198.3 591.9,194.1 608.1,187 625.3,179.9 642,175.8 658.5,170.8 675.7,166.8 691.8,155.7 708.4,149.6 724.7,146.2 741.3,142.1 758.5,138.5 775.2,132.9 792,132.5 808.5,129.4 825.1,126.8 841.8,124 858.4,121.4 875.1,117.3 891.3,115.9 907.8,115.3 924.6,108.3 940.7,108.3 950,105.2" fill="none" stroke="#b8b8c0" stroke-width="1"/>
<polyline points="176,266.2 184.8,270.8 193.4,276.8 210,290 225.9,301.4 234.7,305.1 243,310.6 250.9,317.2" fill="none" stroke="#d8d850" stroke-width="1"/>
<polyline points="268.1,317.2 276.6,309.9 284,304 292.5,298 301,291.6 309.6,284.9" fill="none" stroke="#d8d850" stroke-width="1"/>
<polyline points="309.6,284.9 316.2,282.1 350.5,271 359.6,269.4 368.3,271 400.6,279.5 409,283.5" fill="none" stroke="#d8a878" stroke-width="1"/>
<polyline points="409,283.5 409,287.5" fill="none" stroke="#d8d850" stroke-width="1"/>
<polyline points="176,241.4 184.8,242.7 193.4,246 201.7,249.3 210,252.4 244,258 251.2,263.4 259.5,268 267.7,268.4 276.6,273.5 284.6,276 293,278.7 301,281.5" fill="none" stroke="#d8a878" stroke-width="1"/>
<polyline points="301,281.5 309.6,284.9 318.2,291.6 326,299 334.4,306.7 342.5,312.8 350.5,318.8" fill="none" stroke="#d8d850" stroke-width="1"/>
<polyline points="367.7,317.4 376.8,313.4 383.8,309.3 392,302 400,294.6 409,287.5" fill="none" stroke="#d8d850" stroke-width="1"/>
<polyline points="409,287.5 417.1,281.5 425.2,279.5 434.3,278.1 442.3,277.1 450.2,274.5 458.8,269.8 467.3,270.6 475.9,266.3 484.5,264.4 492.3,262 500.9,260.5 508.8,257.2 517.3,256.9 525.2,255.8 533.8,252.2 541,248 575.6,241.6 591.9,235 599.4,230.3 608.5,228 624.9,220.2 641.3,214.4 658.5,209.2 675.4,203.8 691.6,193.6" fill="none" stroke="#d8a878" stroke-width="1"/>
<polyline points="691.6,193.6 708.2,188.1 724.7,182 741.3,176.9 758.5,172.8 775.2,167.2 792,165.8 808.5,162.7 820,160 858.4,153.7 875.1,150.2 891.3,149.6 907.8,146.2 924.6,141.6 940.7,141.6 950,139.5" fill="none" stroke="#b8b8c0" stroke-width="1"/>
<polyline points="409,287.5 417.1,290 425,296 433.5,303 442.3,311.4 449.4,315.8" fill="none" stroke="#d8d850" stroke-width="1"/>
<polyline points="467.8,317.5 475.9,311.3 484,305 492.5,298.5 500.9,292.5 508.8,286.3" fill="none" stroke="#d8d850" stroke-width="1"/>
<polyline points="508.8,286.3 517.3,279.7 534,275 550.2,267.8 559.5,267.8" fill="none" stroke="#d8a878" stroke-width="1"/>
<polyline points="550.2,314.7 541.9,309.7 533.8,305.3 525.2,301.9 517,294 508.8,286.3 500.9,280.3" fill="none" stroke="#d8d850" stroke-width="1"/>
<polyline points="500.9,280.3 492.3,277.7 484.5,275 475.9,271.4 467.3,270.3 458.8,267.5 450.2,264.7 441.7,263.3 433.7,261.3 425.6,260.3 417.5,256.3 409,256.3 400.6,253.2 394,250 367.7,245.2 359.6,244.2 350.5,241.1 343,240 326,236 318.2,235.4 309.8,233.6 301.4,231 293.2,229.1 284.8,226.2 276.6,225.2 268.2,222.3" fill="none" stroke="#d8a878" stroke-width="1"/>
<polyline points="268.2,222.3 259.6,222.3 251.2,219.9 242.9,217.6 234.6,215.4 222,212 193.2,206.3 184.8,204.7 176,203" fill="none" stroke="#b8b8c0" stroke-width="1"/>
<polyline points="176,225.2 193.6,219.3 205,216 242.8,214.8 259.6,214" fill="none" stroke="#d8a878" stroke-width="1"/>
<polyline points="259.6,214 276.6,211.5 292.8,209.6 309.8,208.6 326,206.3 342.4,205.1 358.6,201.2 375.2,200.4 405,195 425.5,193.5 442,192.4 458.5,187.1 475.7,183.6 492.4,181.8 509.1,180.1 525.8,179.6 542.5,173.1 559.2,172.7" fill="none" stroke="#b8b8c0" stroke-width="1"/>
<polyline points="176,192 193.6,190 210.2,190 226.4,187.7 242.8,186.1 259.6,184.8 276.6,184.2 292.8,182.2 309.8,180.9 326,179.7 342.4,177.3 367,172 392.5,171 409,169.5 426,167.6 442,165.1 458.5,162.5 475.7,156.4 492.4,156.4 509.1,154.6 525.8,152.8 542.5,146.7 559.2,146.2" fill="none" stroke="#b8b8c0" stroke-width="1"/>
<polyline points="567.8,317.2 575.6,312 583.8,307.3 591.9,301.6 599.4,294.8 608.5,292.2 617.1,284.7 624,277 632,271 641.3,267.2 649.9,262.5 658.5,254 667.1,250.6 675.4,245.9 683.5,239.4" fill="none" stroke="#d8d850" stroke-width="1"/>
<polyline points="683.5,239.4 691.6,235.8 699.9,231.7 708.2,225.9 720,220 741.2,211.9 749.5,212.4 758.3,208" fill="none" stroke="#d8a878" stroke-width="1"/>
<polyline points="758.3,208 766.5,205.8 774.8,201.2 783,198.5 791,195.5 799.8,191.8 808.2,189.3 816.4,187.9 825.1,185 832.7,184.5 841.8,179.3 862,174 899.3,164.8 907.8,161.7 915.5,159.1 924.6,158.3 932.6,157.7 940.7,156.3 950,155.7" fill="none" stroke="#b8b8c0" stroke-width="1"/>
<polyline points="559.5,253 567.3,258.9 575.6,264.1 583.8,270.3 591.9,275 600,281 608.5,292.2 617.1,299.5 624.9,305.8 633.5,312 641.3,316.7 649.9,319.1" fill="none" stroke="#d8d850" stroke-width="1"/>
<polyline points="741.3,313.1 733.2,305.3 724.9,301.6 716.3,294.8 708,288 699.9,282.3 691.6,276.9 683.5,270.6 675,264 658.5,254 649.9,245.2 641.3,239.7 633.5,235 624.9,226 616.3,219" fill="none" stroke="#d8d850" stroke-width="1"/>
<polyline points="616.3,219 608.5,217.8 599.4,216 591.9,210.8 583.8,210.8 575.6,210.8 567.3,208.4 558.8,208.1 541.6,205.6 525.2,205.3 513,200 475.9,193.6 458.8,190.5 442,187.1 425.4,184 408.3,181 392.3,177.1 380,175" fill="none" stroke="#d8a878" stroke-width="1"/>
<polyline points="380,175 354,171 342.4,169.5 326,166.6 309.8,165.2 293.2,159.4 281,157 242.5,153.6 226,148.5 209.8,146 193.3,142.2 176,140.2" fill="none" stroke="#b8b8c0" stroke-width="1"/>
<polyline points="667.1,319.1 675.4,315.2 683.5,309.7 691.6,303.1 699.9,298 708.2,293.3 720,283 733.2,274.5 741.3,267.2 749.9,264.1 758.2,256" fill="none" stroke="#d8d850" stroke-width="1"/>
<polyline points="850,317.5 840.8,312.6 833,305.4 824.6,298 816.4,288.6 808.2,283.3 800,273 791.4,266.3 783.2,258.9 775,252.4 766.6,243.6 758.2,232.9" fill="none" stroke="#d8d850" stroke-width="1"/>
<polyline points="766.6,312.6 775,308.1 783.2,302.3 791.4,297 799.8,288.6 808.2,283.3 816.4,275.5 828,264 840.8,251.4 850,246.5 858.4,236.8 866.8,231.9 875,226 883.2,219.8" fill="none" stroke="#d8d850" stroke-width="1"/>
<polyline points="883.2,219.8 891,214.3 899.4,209.4 907.8,207.5 920,201 940.4,197.7 950,192.8" fill="none" stroke="#d8a878" stroke-width="1"/>
<polyline points="950,317.1 940.4,312 932.6,306.2 924.2,298.4 916,288.6 907.8,283.3 895,271 883.2,261.2 875,253 866.8,243.6 858.4,236.8 850,228" fill="none" stroke="#d8d850" stroke-width="1"/>
<polyline points="850,228 840.8,225 833,218.2 824.2,211.4 816.4,208 808.2,204.5 799.8,200.2 791.4,199.1 783.1,197.6 774.8,194.6 766.5,191 758.3,189 749.5,187 741.2,184.4 734,180 699.9,176.9 691.8,173.2 680,166 667,163.7 658.5,161.1 650.1,158.7 642,158.3 633.3,155.7 625.3,154 616.6,152.2 608.5,150.2 600.1,147.6" fill="none" stroke="#d8a878" stroke-width="1"/>
<polyline points="600.1,147.6 591.7,149.3 583.8,152 575.9,153.2 567.1,153.7 559.2,153.2 542.5,156.4 525.8,158.1 509.1,157.2 492.4,156.4 475.7,152.8 458.5,149.7 442,149 426,148 409,146 392,142.2 389,141 359,138.4 342,135.8 326,134 309,132 292.8,129 276.3,126.2 259.2,125 242.5,121.9 226.3,118 209.8,115 193.3,111 176,109.2" fill="none" stroke="#b8b8c0" stroke-width="1"/>
<polyline points="866.8,317.9 875,312.6 883.2,305.4 891,297.6 899.4,288.2 907.8,283.3 916,275 923.8,266.7 932.6,260.5 940.4,250.4 950,243.6" fill="none" stroke="#d8d850" stroke-width="1"/>
<polyline points="559.2,86.3 576,83.8 592.5,83.4 610,81 656.5,81 675.7,84 691.8,86.7 708.4,87.7 724.7,92.5 750,96 775.2,97.2 792,101.2 808.5,101.2 825.1,101.8 841.8,107.2 858.4,109.9 875.1,112.7 891.3,115.9 907.8,115.9 924.6,118.3 940.7,121.4" fill="none" stroke="#b8b8c0" stroke-width="1"/>
<polyline points="559.2,118 576,115.5 592.5,113.8 609.1,111.9 625.3,113.3 642,114.3 658.5,115.9 683,122 708.4,124.4 724.7,128 741.3,128.8 758.5,130.9 775.2,132.9 792,137.5 808.5,138.5" fill="none" stroke="#b8b8c0" stroke-width="1"/>
<polyline points="808.5,138.5 824.7,143.6 841.2,150.6 858.4,157.1 882,165 907.8,171.2 924,178.5 940.7,184.5 950,187" fill="none" stroke="#d8a878" stroke-width="1"/>
<circle cx="184.8" cy="302.5" r="2.3" fill="#f0f030"/>
<circle cx="193.4" cy="298.9" r="2.3" fill="#f0f030"/>
<circle cx="217.8" cy="280" r="2.3" fill="#f0f030"/>
<circle cx="226.5" cy="271.7" r="2.3" fill="#f0f030"/>
<circle cx="234.7" cy="267.1" r="2.3" fill="#f0f030"/>
<circle cx="243" cy="264.4" r="2.3" fill="#f0a030"/>
<circle cx="251.2" cy="260.7" r="2.3" fill="#f0a030"/>
<circle cx="259.5" cy="260.7" r="2.3" fill="#f0a030"/>
<circle cx="267.7" cy="257" r="2.3" fill="#f0a030"/>
<circle cx="276.6" cy="256.1" r="2.3" fill="#f0a030"/>
<circle cx="284.6" cy="254.3" r="2.3" fill="#f0a030"/>
<circle cx="293" cy="253" r="2.3" fill="#f0a030"/>
<circle cx="301.1" cy="250.8" r="2.3" fill="#f0a030"/>
<circle cx="309.6" cy="249.6" r="2.3" fill="#f0a030"/>
<circle cx="350.5" cy="240.7" r="2.3" fill="#f0a030"/>
<circle cx="359.6" cy="237.1" r="2.3" fill="#f0a030"/>
<circle cx="367.7" cy="235.5" r="2.3" fill="#f0a030"/>
<circle cx="375.8" cy="233.5" r="2.3" fill="#f0a030"/>
<circle cx="384.8" cy="232.7" r="2.3" fill="#f0a030"/>
<circle cx="392.9" cy="231.1" r="2.3" fill="#f0a030"/>
<circle cx="401" cy="229.4" r="2.3" fill="#f0a030"/>
<circle cx="409" cy="228.6" r="2.3" fill="#f0a030"/>
<circle cx="417.5" cy="226.6" r="2.3" fill="#f0a030"/>
<circle cx="425.4" cy="227.4" r="2.4" fill="#0a0aa0"/>
<circle cx="433" cy="225.5" r="2.4" fill="#0a0aa0"/>
<circle cx="441" cy="223.5" r="2.4" fill="#0a0aa0"/>
<circle cx="450.2" cy="221.7" r="2.4" fill="#0a0aa0"/>
<circle cx="458.8" cy="220.2" r="2.4" fill="#0a0aa0"/>
<circle cx="467.3" cy="219" r="2.4" fill="#0a0aa0"/>
<circle cx="475.9" cy="215.5" r="2.4" fill="#0a0aa0"/>
<circle cx="484.5" cy="214.4" r="2.4" fill="#0a0aa0"/>
<circle cx="492.3" cy="212.3" r="2.4" fill="#0a0aa0"/>
<circle cx="500.9" cy="211.6" r="2.4" fill="#0a0aa0"/>
<circle cx="508.8" cy="209.7" r="2.4" fill="#0a0aa0"/>
<circle cx="517.3" cy="208.4" r="2.4" fill="#0a0aa0"/>
<circle cx="525.2" cy="208.4" r="2.4" fill="#0a0aa0"/>
<circle cx="533.5" cy="206.5" r="2.4" fill="#0a0aa0"/>
<circle cx="541.6" cy="204.6" r="2.4" fill="#0a0aa0"/>
<circle cx="550.2" cy="200.3" r="2.4" fill="#0a0aa0"/>
<circle cx="558.8" cy="200.9" r="2.4" fill="#0a0aa0"/>
<circle cx="575.6" cy="198.3" r="2.4" fill="#0a0aa0"/>
<circle cx="591.9" cy="194.1" r="2.4" fill="#0a0aa0"/>
<circle cx="608.1" cy="187" r="2.4" fill="#0a0aa0"/>
<circle cx="625.3" cy="179.9" r="2.4" fill="#0a0aa0"/>
<circle cx="642" cy="175.8" r="2.4" fill="#0a0aa0"/>
<circle cx="658.5" cy="170.8" r="2.4" fill="#0a0aa0"/>
<circle cx="675.7" cy="166.8" r="2.4" fill="#0a0aa0"/>
<circle cx="691.8" cy="155.7" r="2.4" fill="#0a0aa0"/>
<circle cx="708.4" cy="149.6" r="2.4" fill="#0a0aa0"/>
<circle cx="724.7" cy="146.2" r="2.4" fill="#0a0aa0"/>
<circle cx="741.3" cy="142.1" r="2.4" fill="#0a0aa0"/>
<circle cx="758.5" cy="138.5" r="2.4" fill="#0a0aa0"/>
<circle cx="775.2" cy="132.9" r="2.4" fill="#0a0aa0"/>
<circle cx="792" cy="132.5" r="2.4" fill="#0a0aa0"/>
<circle cx="808.5" cy="129.4" r="2.4" fill="#0a0aa0"/>
<circle cx="825.1" cy="126.8" r="2.4" fill="#0a0aa0"/>
<circle cx="841.8" cy="124" r="2.4" fill="#0a0aa0"/>
<circle cx="858.4" cy="121.4" r="2.4" fill="#0a0aa0"/>
<circle cx="875.1" cy="117.3" r="2.4" fill="#0a0aa0"/>
<circle cx="891.3" cy="115.9" r="2.4" fill="#0a0aa0"/>
<circle cx="907.8" cy="115.3" r="2.4" fill="#0a0aa0"/>
<circle cx="924.6" cy="108.3" r="2.4" fill="#0a0aa0"/>
<circle cx="940.7" cy="108.3" r="2.4" fill="#0a0aa0"/>
<circle cx="184.8" cy="270.8" r="2.3" fill="#f0f030"/>
<circle cx="193.4" cy="276.8" r="2.3" fill="#f0f030"/>
<circle cx="225.9" cy="301.4" r="2.3" fill="#f0f030"/>
<circle cx="234.7" cy="305.1" r="2.3" fill="#f0f030"/>
<circle cx="243" cy="310.6" r="2.3" fill="#f0f030"/>
<circle cx="276.6" cy="309.9" r="2.3" fill="#f0f030"/>
<circle cx="284" cy="304" r="2.3" fill="#f0f030"/>
<circle cx="292.5" cy="298" r="2.3" fill="#f0f030"/>
<circle cx="301" cy="291.6" r="2.3" fill="#f0f030"/>
<circle cx="309.6" cy="284.9" r="2.3" fill="#f0f030"/>
<circle cx="350.5" cy="271" r="2.3" fill="#f0a030"/>
<circle cx="359.6" cy="269.4" r="2.3" fill="#f0a030"/>
<circle cx="368.3" cy="271" r="2.3" fill="#f0a030"/>
<circle cx="400.6" cy="279.5" r="2.3" fill="#f0a030"/>
<circle cx="409" cy="283.5" r="2.3" fill="#f0a030"/>
<circle cx="409" cy="287.5" r="2.3" fill="#f0f030"/>
<circle cx="184.8" cy="242.7" r="2.3" fill="#f0a030"/>
<circle cx="193.4" cy="246" r="2.3" fill="#f0a030"/>
<circle cx="201.7" cy="249.3" r="2.3" fill="#f0a030"/>
<circle cx="210" cy="252.4" r="2.3" fill="#f0a030"/>
<circle cx="251.2" cy="263.4" r="2.3" fill="#f0a030"/>
<circle cx="259.5" cy="268" r="2.3" fill="#f0a030"/>
<circle cx="267.7" cy="268.4" r="2.3" fill="#f0a030"/>
<circle cx="276.6" cy="273.5" r="2.3" fill="#f0a030"/>
<circle cx="284.6" cy="276" r="2.3" fill="#f0a030"/>
<circle cx="293" cy="278.7" r="2.3" fill="#f0a030"/>
<circle cx="301" cy="281.5" r="2.3" fill="#f0a030"/>
<circle cx="318.2" cy="291.6" r="2.3" fill="#f0f030"/>
<circle cx="326" cy="299" r="2.3" fill="#f0f030"/>
<circle cx="334.4" cy="306.7" r="2.3" fill="#f0f030"/>
<circle cx="342.5" cy="312.8" r="2.3" fill="#f0f030"/>
<circle cx="376.8" cy="313.4" r="2.3" fill="#f0f030"/>
<circle cx="383.8" cy="309.3" r="2.3" fill="#f0f030"/>
<circle cx="392" cy="302" r="2.3" fill="#f0f030"/>
<circle cx="400" cy="294.6" r="2.3" fill="#f0f030"/>
<circle cx="409" cy="287.5" r="2.3" fill="#f0f030"/>
<circle cx="417.1" cy="281.5" r="2.3" fill="#f0a030"/>
<circle cx="425.2" cy="279.5" r="2.3" fill="#f0a030"/>
<circle cx="434.3" cy="278.1" r="2.3" fill="#f0a030"/>
<circle cx="442.3" cy="277.1" r="2.3" fill="#f0a030"/>
<circle cx="450.2" cy="274.5" r="2.3" fill="#f0a030"/>
<circle cx="458.8" cy="269.8" r="2.3" fill="#f0a030"/>
<circle cx="467.3" cy="270.6" r="2.3" fill="#f0a030"/>
<circle cx="475.9" cy="266.3" r="2.3" fill="#f0a030"/>
<circle cx="484.5" cy="264.4" r="2.3" fill="#f0a030"/>
<circle cx="492.3" cy="262" r="2.3" fill="#f0a030"/>
<circle cx="500.9" cy="260.5" r="2.3" fill="#f0a030"/>
<circle cx="508.8" cy="257.2" r="2.3" fill="#f0a030"/>
<circle cx="517.3" cy="256.9" r="2.3" fill="#f0a030"/>
<circle cx="525.2" cy="255.8" r="2.3" fill="#f0a030"/>
<circle cx="533.8" cy="252.2" r="2.3" fill="#f0a030"/>
<circle cx="575.6" cy="241.6" r="2.3" fill="#f0a030"/>
<circle cx="591.9" cy="235" r="2.3" fill="#f0a030"/>
<circle cx="599.4" cy="230.3" r="2.3" fill="#f0a030"/>
<circle cx="608.5" cy="228" r="2.3" fill="#f0a030"/>
<circle cx="624.9" cy="220.2" r="2.3" fill="#f0a030"/>
<circle cx="641.3" cy="214.4" r="2.3" fill="#f0a030"/>
<circle cx="658.5" cy="209.2" r="2.3" fill="#f0a030"/>
<circle cx="675.4" cy="203.8" r="2.3" fill="#f0a030"/>
<circle cx="691.6" cy="193.6" r="2.3" fill="#f0a030"/>
<circle cx="708.2" cy="188.1" r="2.4" fill="#0a0aa0"/>
<circle cx="724.7" cy="182" r="2.4" fill="#0a0aa0"/>
<circle cx="741.3" cy="176.9" r="2.4" fill="#0a0aa0"/>
<circle cx="758.5" cy="172.8" r="2.4" fill="#0a0aa0"/>
<circle cx="775.2" cy="167.2" r="2.4" fill="#0a0aa0"/>
<circle cx="792" cy="165.8" r="2.4" fill="#0a0aa0"/>
<circle cx="808.5" cy="162.7" r="2.4" fill="#0a0aa0"/>
<circle cx="858.4" cy="153.7" r="2.4" fill="#0a0aa0"/>
<circle cx="875.1" cy="150.2" r="2.4" fill="#0a0aa0"/>
<circle cx="891.3" cy="149.6" r="2.4" fill="#0a0aa0"/>
<circle cx="907.8" cy="146.2" r="2.4" fill="#0a0aa0"/>
<circle cx="924.6" cy="141.6" r="2.4" fill="#0a0aa0"/>
<circle cx="940.7" cy="141.6" r="2.4" fill="#0a0aa0"/>
<circle cx="417.1" cy="290" r="2.3" fill="#f0f030"/>
<circle cx="425" cy="296" r="2.3" fill="#f0f030"/>
<circle cx="433.5" cy="303" r="2.3" fill="#f0f030"/>
<circle cx="442.3" cy="311.4" r="2.3" fill="#f0f030"/>
<circle cx="475.9" cy="311.3" r="2.3" fill="#f0f030"/>
<circle cx="484" cy="305" r="2.3" fill="#f0f030"/>
<circle cx="492.5" cy="298.5" r="2.3" fill="#f0f030"/>
<circle cx="500.9" cy="292.5" r="2.3" fill="#f0f030"/>
<circle cx="508.8" cy="286.3" r="2.3" fill="#f0f030"/>
<circle cx="517.3" cy="279.7" r="2.3" fill="#f0a030"/>
<circle cx="550.2" cy="267.8" r="2.3" fill="#f0a030"/>
<circle cx="559.5" cy="267.8" r="2.3" fill="#f0a030"/>
<circle cx="541.9" cy="309.7" r="2.3" fill="#f0f030"/>
<circle cx="533.8" cy="305.3" r="2.3" fill="#f0f030"/>
<circle cx="525.2" cy="301.9" r="2.3" fill="#f0f030"/>
<circle cx="517" cy="294" r="2.3" fill="#f0f030"/>
<circle cx="500.9" cy="280.3" r="2.3" fill="#f0f030"/>
<circle cx="492.3" cy="277.7" r="2.3" fill="#f0a030"/>
<circle cx="484.5" cy="275" r="2.3" fill="#f0a030"/>
<circle cx="475.9" cy="271.4" r="2.3" fill="#f0a030"/>
<circle cx="467.3" cy="270.3" r="2.3" fill="#f0a030"/>
<circle cx="458.8" cy="267.5" r="2.3" fill="#f0a030"/>
<circle cx="450.2" cy="264.7" r="2.3" fill="#f0a030"/>
<circle cx="441.7" cy="263.3" r="2.3" fill="#f0a030"/>
<circle cx="433.7" cy="261.3" r="2.3" fill="#f0a030"/>
<circle cx="425.6" cy="260.3" r="2.3" fill="#f0a030"/>
<circle cx="417.5" cy="256.3" r="2.3" fill="#f0a030"/>
<circle cx="409" cy="256.3" r="2.3" fill="#f0a030"/>
<circle cx="400.6" cy="253.2" r="2.3" fill="#f0a030"/>
<circle cx="367.7" cy="245.2" r="2.3" fill="#f0a030"/>
<circle cx="359.6" cy="244.2" r="2.3" fill="#f0a030"/>
<circle cx="350.5" cy="241.1" r="2.3" fill="#f0a030"/>
<circle cx="326" cy="236" r="2.3" fill="#f0a030"/>
<circle cx="318.2" cy="235.4" r="2.3" fill="#f0a030"/>
<circle cx="309.8" cy="233.6" r="2.3" fill="#f0a030"/>
<circle cx="301.4" cy="231" r="2.3" fill="#f0a030"/>
<circle cx="293.2" cy="229.1" r="2.3" fill="#f0a030"/>
<circle cx="284.8" cy="226.2" r="2.3" fill="#f0a030"/>
<circle cx="276.6" cy="225.2" r="2.3" fill="#f0a030"/>
<circle cx="268.2" cy="222.3" r="2.3" fill="#f0a030"/>
<circle cx="259.6" cy="222.3" r="2.4" fill="#0a0aa0"/>
<circle cx="251.2" cy="219.9" r="2.4" fill="#0a0aa0"/>
<circle cx="242.9" cy="217.6" r="2.4" fill="#0a0aa0"/>
<circle cx="234.6" cy="215.4" r="2.4" fill="#0a0aa0"/>
<circle cx="193.2" cy="206.3" r="2.4" fill="#0a0aa0"/>
<circle cx="184.8" cy="204.7" r="2.4" fill="#0a0aa0"/>
<circle cx="193.6" cy="219.3" r="2.3" fill="#f0a030"/>
<circle cx="242.8" cy="214.8" r="2.3" fill="#f0a030"/>
<circle cx="259.6" cy="214" r="2.3" fill="#f0a030"/>
<circle cx="276.6" cy="211.5" r="2.4" fill="#0a0aa0"/>
<circle cx="292.8" cy="209.6" r="2.4" fill="#0a0aa0"/>
<circle cx="309.8" cy="208.6" r="2.4" fill="#0a0aa0"/>
<circle cx="326" cy="206.3" r="2.4" fill="#0a0aa0"/>
<circle cx="342.4" cy="205.1" r="2.4" fill="#0a0aa0"/>
<circle cx="358.6" cy="201.2" r="2.4" fill="#0a0aa0"/>
<circle cx="375.2" cy="200.4" r="2.4" fill="#0a0aa0"/>
<circle cx="425.5" cy="193.5" r="2.4" fill="#0a0aa0"/>
<circle cx="442" cy="192.4" r="2.4" fill="#0a0aa0"/>
<circle cx="458.5" cy="187.1" r="2.4" fill="#0a0aa0"/>
<circle cx="475.7" cy="183.6" r="2.4" fill="#0a0aa0"/>
<circle cx="492.4" cy="181.8" r="2.4" fill="#0a0aa0"/>
<circle cx="509.1" cy="180.1" r="2.4" fill="#0a0aa0"/>
<circle cx="525.8" cy="179.6" r="2.4" fill="#0a0aa0"/>
<circle cx="542.5" cy="173.1" r="2.4" fill="#0a0aa0"/>
<circle cx="559.2" cy="172.7" r="2.4" fill="#0a0aa0"/>
<circle cx="193.6" cy="190" r="2.4" fill="#0a0aa0"/>
<circle cx="210.2" cy="190" r="2.4" fill="#0a0aa0"/>
<circle cx="226.4" cy="187.7" r="2.4" fill="#0a0aa0"/>
<circle cx="242.8" cy="186.1" r="2.4" fill="#0a0aa0"/>
<circle cx="259.6" cy="184.8" r="2.4" fill="#0a0aa0"/>
<circle cx="276.6" cy="184.2" r="2.4" fill="#0a0aa0"/>
<circle cx="292.8" cy="182.2" r="2.4" fill="#0a0aa0"/>
<circle cx="309.8" cy="180.9" r="2.4" fill="#0a0aa0"/>
<circle cx="326" cy="179.7" r="2.4" fill="#0a0aa0"/>
<circle cx="342.4" cy="177.3" r="2.4" fill="#0a0aa0"/>
<circle cx="392.5" cy="171" r="2.4" fill="#0a0aa0"/>
<circle cx="409" cy="169.5" r="2.4" fill="#0a0aa0"/>
<circle cx="426" cy="167.6" r="2.4" fill="#0a0aa0"/>
<circle cx="442" cy="165.1" r="2.4" fill="#0a0aa0"/>
<circle cx="458.5" cy="162.5" r="2.4" fill="#0a0aa0"/>
<circle cx="475.7" cy="156.4" r="2.4" fill="#0a0aa0"/>
<circle cx="492.4" cy="156.4" r="2.4" fill="#0a0aa0"/>
<circle cx="509.1" cy="154.6" r="2.4" fill="#0a0aa0"/>
<circle cx="525.8" cy="152.8" r="2.4" fill="#0a0aa0"/>
<circle cx="542.5" cy="146.7" r="2.4" fill="#0a0aa0"/>
<circle cx="559.2" cy="146.2" r="2.4" fill="#0a0aa0"/>
<circle cx="575.6" cy="312" r="2.3" fill="#f0f030"/>
<circle cx="583.8" cy="307.3" r="2.3" fill="#f0f030"/>
<circle cx="591.9" cy="301.6" r="2.3" fill="#f0f030"/>
<circle cx="599.4" cy="294.8" r="2.3" fill="#f0f030"/>
<circle cx="608.5" cy="292.2" r="2.3" fill="#f0f030"/>
<circle cx="617.1" cy="284.7" r="2.3" fill="#f0f030"/>
<circle cx="624" cy="277" r="2.3" fill="#f0f030"/>
<circle cx="632" cy="271" r="2.3" fill="#f0f030"/>
<circle cx="641.3" cy="267.2" r="2.3" fill="#f0f030"/>
<circle cx="649.9" cy="262.5" r="2.3" fill="#f0f030"/>
<circle cx="658.5" cy="254" r="2.3" fill="#f0f030"/>
<circle cx="667.1" cy="250.6" r="2.3" fill="#f0f030"/>
<circle cx="675.4" cy="245.9" r="2.3" fill="#f0f030"/>
<circle cx="683.5" cy="239.4" r="2.3" fill="#f0f030"/>
<circle cx="691.6" cy="235.8" r="2.3" fill="#f0a030"/>
<circle cx="699.9" cy="231.7" r="2.3" fill="#f0a030"/>
<circle cx="708.2" cy="225.9" r="2.3" fill="#f0a030"/>
<circle cx="741.2" cy="211.9" r="2.3" fill="#f0a030"/>
<circle cx="749.5" cy="212.4" r="2.3" fill="#f0a030"/>
<circle cx="758.3" cy="208" r="2.3" fill="#f0a030"/>
<circle cx="766.5" cy="205.8" r="2.4" fill="#0a0aa0"/>
<circle cx="774.8" cy="201.2" r="2.4" fill="#0a0aa0"/>
<circle cx="783" cy="198.5" r="2.4" fill="#0a0aa0"/>
<circle cx="791" cy="195.5" r="2.4" fill="#0a0aa0"/>
<circle cx="799.8" cy="191.8" r="2.4" fill="#0a0aa0"/>
<circle cx="808.2" cy="189.3" r="2.4" fill="#0a0aa0"/>
<circle cx="816.4" cy="187.9" r="2.4" fill="#0a0aa0"/>
<circle cx="825.1" cy="185" r="2.4" fill="#0a0aa0"/>
<circle cx="832.7" cy="184.5" r="2.4" fill="#0a0aa0"/>
<circle cx="841.8" cy="179.3" r="2.4" fill="#0a0aa0"/>
<circle cx="899.3" cy="164.8" r="2.4" fill="#0a0aa0"/>
<circle cx="907.8" cy="161.7" r="2.4" fill="#0a0aa0"/>
<circle cx="915.5" cy="159.1" r="2.4" fill="#0a0aa0"/>
<circle cx="924.6" cy="158.3" r="2.4" fill="#0a0aa0"/>
<circle cx="932.6" cy="157.7" r="2.4" fill="#0a0aa0"/>
<circle cx="940.7" cy="156.3" r="2.4" fill="#0a0aa0"/>
<circle cx="559.5" cy="253" r="2.3" fill="#f0f030"/>
<circle cx="567.3" cy="258.9" r="2.3" fill="#f0f030"/>
<circle cx="575.6" cy="264.1" r="2.3" fill="#f0f030"/>
<circle cx="583.8" cy="270.3" r="2.3" fill="#f0f030"/>
<circle cx="591.9" cy="275" r="2.3" fill="#f0f030"/>
<circle cx="617.1" cy="299.5" r="2.3" fill="#f0f030"/>
<circle cx="624.9" cy="305.8" r="2.3" fill="#f0f030"/>
<circle cx="633.5" cy="312" r="2.3" fill="#f0f030"/>
<circle cx="641.3" cy="316.7" r="2.3" fill="#f0f030"/>
<circle cx="733.2" cy="305.3" r="2.3" fill="#f0f030"/>
<circle cx="724.9" cy="301.6" r="2.3" fill="#f0f030"/>
<circle cx="716.3" cy="294.8" r="2.3" fill="#f0f030"/>
<circle cx="699.9" cy="282.3" r="2.3" fill="#f0f030"/>
<circle cx="691.6" cy="276.9" r="2.3" fill="#f0f030"/>
<circle cx="683.5" cy="270.6" r="2.3" fill="#f0f030"/>
<circle cx="658.5" cy="254" r="2.3" fill="#f0f030"/>
<circle cx="649.9" cy="245.2" r="2.3" fill="#f0f030"/>
<circle cx="641.3" cy="239.7" r="2.3" fill="#f0f030"/>
<circle cx="633.5" cy="235" r="2.3" fill="#f0f030"/>
<circle cx="624.9" cy="226" r="2.3" fill="#f0f030"/>
<circle cx="616.3" cy="219" r="2.3" fill="#f0f030"/>
<circle cx="608.5" cy="217.8" r="2.3" fill="#f0a030"/>
<circle cx="599.4" cy="216" r="2.3" fill="#f0a030"/>
<circle cx="591.9" cy="210.8" r="2.3" fill="#f0a030"/>
<circle cx="583.8" cy="210.8" r="2.3" fill="#f0a030"/>
<circle cx="575.6" cy="210.8" r="2.3" fill="#f0a030"/>
<circle cx="567.3" cy="208.4" r="2.3" fill="#f0a030"/>
<circle cx="558.8" cy="208.1" r="2.3" fill="#f0a030"/>
<circle cx="541.6" cy="205.6" r="2.3" fill="#f0a030"/>
<circle cx="525.2" cy="205.3" r="2.3" fill="#f0a030"/>
<circle cx="475.9" cy="193.6" r="2.3" fill="#f0a030"/>
<circle cx="458.8" cy="190.5" r="2.3" fill="#f0a030"/>
<circle cx="442" cy="187.1" r="2.3" fill="#f0a030"/>
<circle cx="425.4" cy="184" r="2.3" fill="#f0a030"/>
<circle cx="408.3" cy="181" r="2.3" fill="#f0a030"/>
<circle cx="392.3" cy="177.1" r="2.3" fill="#f0a030"/>
<circle cx="342.4" cy="169.5" r="2.4" fill="#0a0aa0"/>
<circle cx="326" cy="166.6" r="2.4" fill="#0a0aa0"/>
<circle cx="309.8" cy="165.2" r="2.4" fill="#0a0aa0"/>
<circle cx="293.2" cy="159.4" r="2.4" fill="#0a0aa0"/>
<circle cx="242.5" cy="153.6" r="2.4" fill="#0a0aa0"/>
<circle cx="226" cy="148.5" r="2.4" fill="#0a0aa0"/>
<circle cx="209.8" cy="146" r="2.4" fill="#0a0aa0"/>
<circle cx="193.3" cy="142.2" r="2.4" fill="#0a0aa0"/>
<circle cx="675.4" cy="315.2" r="2.3" fill="#f0f030"/>
<circle cx="683.5" cy="309.7" r="2.3" fill="#f0f030"/>
<circle cx="691.6" cy="303.1" r="2.3" fill="#f0f030"/>
<circle cx="699.9" cy="298" r="2.3" fill="#f0f030"/>
<circle cx="708.2" cy="293.3" r="2.3" fill="#f0f030"/>
<circle cx="733.2" cy="274.5" r="2.3" fill="#f0f030"/>
<circle cx="741.3" cy="267.2" r="2.3" fill="#f0f030"/>
<circle cx="749.9" cy="264.1" r="2.3" fill="#f0f030"/>
<circle cx="758.2" cy="256" r="2.3" fill="#f0f030"/>
<circle cx="840.8" cy="312.6" r="2.3" fill="#f0f030"/>
<circle cx="833" cy="305.4" r="2.3" fill="#f0f030"/>
<circle cx="824.6" cy="298" r="2.3" fill="#f0f030"/>
<circle cx="816.4" cy="288.6" r="2.3" fill="#f0f030"/>
<circle cx="808.2" cy="283.3" r="2.3" fill="#f0f030"/>
<circle cx="791.4" cy="266.3" r="2.3" fill="#f0f030"/>
<circle cx="783.2" cy="258.9" r="2.3" fill="#f0f030"/>
<circle cx="775" cy="252.4" r="2.3" fill="#f0f030"/>
<circle cx="766.6" cy="243.6" r="2.3" fill="#f0f030"/>
<circle cx="758.2" cy="232.9" r="2.3" fill="#f0f030"/>
<circle cx="775" cy="308.1" r="2.3" fill="#f0f030"/>
<circle cx="783.2" cy="302.3" r="2.3" fill="#f0f030"/>
<circle cx="791.4" cy="297" r="2.3" fill="#f0f030"/>
<circle cx="799.8" cy="288.6" r="2.3" fill="#f0f030"/>
<circle cx="808.2" cy="283.3" r="2.3" fill="#f0f030"/>
<circle cx="816.4" cy="275.5" r="2.3" fill="#f0f030"/>
<circle cx="840.8" cy="251.4" r="2.3" fill="#f0f030"/>
<circle cx="850" cy="246.5" r="2.3" fill="#f0f030"/>
<circle cx="858.4" cy="236.8" r="2.3" fill="#f0f030"/>
<circle cx="866.8" cy="231.9" r="2.3" fill="#f0f030"/>
<circle cx="875" cy="226" r="2.3" fill="#f0f030"/>
<circle cx="883.2" cy="219.8" r="2.3" fill="#f0f030"/>
<circle cx="891" cy="214.3" r="2.3" fill="#f0a030"/>
<circle cx="899.4" cy="209.4" r="2.3" fill="#f0a030"/>
<circle cx="907.8" cy="207.5" r="2.3" fill="#f0a030"/>
<circle cx="940.4" cy="197.7" r="2.3" fill="#f0a030"/>
<circle cx="940.4" cy="312" r="2.3" fill="#f0f030"/>
<circle cx="932.6" cy="306.2" r="2.3" fill="#f0f030"/>
<circle cx="924.2" cy="298.4" r="2.3" fill="#f0f030"/>
<circle cx="916" cy="288.6" r="2.3" fill="#f0f030"/>
<circle cx="907.8" cy="283.3" r="2.3" fill="#f0f030"/>
<circle cx="883.2" cy="261.2" r="2.3" fill="#f0f030"/>
<circle cx="875" cy="253" r="2.3" fill="#f0f030"/>
<circle cx="866.8" cy="243.6" r="2.3" fill="#f0f030"/>
<circle cx="858.4" cy="236.8" r="2.3" fill="#f0f030"/>
<circle cx="850" cy="228" r="2.3" fill="#f0f030"/>
<circle cx="840.8" cy="225" r="2.3" fill="#f0a030"/>
<circle cx="833" cy="218.2" r="2.3" fill="#f0a030"/>
<circle cx="824.2" cy="211.4" r="2.3" fill="#f0a030"/>
<circle cx="816.4" cy="208" r="2.3" fill="#f0a030"/>
<circle cx="808.2" cy="204.5" r="2.3" fill="#f0a030"/>
<circle cx="799.8" cy="200.2" r="2.3" fill="#f0a030"/>
<circle cx="791.4" cy="199.1" r="2.3" fill="#f0a030"/>
<circle cx="783.1" cy="197.6" r="2.3" fill="#f0a030"/>
<circle cx="774.8" cy="194.6" r="2.3" fill="#f0a030"/>
<circle cx="766.5" cy="191" r="2.3" fill="#f0a030"/>
<circle cx="758.3" cy="189" r="2.3" fill="#f0a030"/>
<circle cx="749.5" cy="187" r="2.3" fill="#f0a030"/>
<circle cx="741.2" cy="184.4" r="2.3" fill="#f0a030"/>
<circle cx="699.9" cy="176.9" r="2.3" fill="#f0a030"/>
<circle cx="691.8" cy="173.2" r="2.3" fill="#f0a030"/>
<circle cx="667" cy="163.7" r="2.3" fill="#f0a030"/>
<circle cx="658.5" cy="161.1" r="2.3" fill="#f0a030"/>
<circle cx="650.1" cy="158.7" r="2.3" fill="#f0a030"/>
<circle cx="642" cy="158.3" r="2.3" fill="#f0a030"/>
<circle cx="633.3" cy="155.7" r="2.3" fill="#f0a030"/>
<circle cx="625.3" cy="154" r="2.3" fill="#f0a030"/>
<circle cx="616.6" cy="152.2" r="2.3" fill="#f0a030"/>
<circle cx="608.5" cy="150.2" r="2.3" fill="#f0a030"/>
<circle cx="600.1" cy="147.6" r="2.3" fill="#f0a030"/>
<circle cx="591.7" cy="149.3" r="2.4" fill="#0a0aa0"/>
<circle cx="583.8" cy="152" r="2.4" fill="#0a0aa0"/>
<circle cx="575.9" cy="153.2" r="2.4" fill="#0a0aa0"/>
<circle cx="567.1" cy="153.7" r="2.4" fill="#0a0aa0"/>
<circle cx="559.2" cy="153.2" r="2.4" fill="#0a0aa0"/>
<circle cx="542.5" cy="156.4" r="2.4" fill="#0a0aa0"/>
<circle cx="525.8" cy="158.1" r="2.4" fill="#0a0aa0"/>
<circle cx="509.1" cy="157.2" r="2.4" fill="#0a0aa0"/>
<circle cx="492.4" cy="156.4" r="2.4" fill="#0a0aa0"/>
<circle cx="475.7" cy="152.8" r="2.4" fill="#0a0aa0"/>
<circle cx="458.5" cy="149.7" r="2.4" fill="#0a0aa0"/>
<circle cx="442" cy="149" r="2.4" fill="#0a0aa0"/>
<circle cx="426" cy="148" r="2.4" fill="#0a0aa0"/>
<circle cx="409" cy="146" r="2.4" fill="#0a0aa0"/>
<circle cx="392" cy="142.2" r="2.4" fill="#0a0aa0"/>
<circle cx="359" cy="138.4" r="2.4" fill="#0a0aa0"/>
<circle cx="342" cy="135.8" r="2.4" fill="#0a0aa0"/>
<circle cx="326" cy="134" r="2.4" fill="#0a0aa0"/>
<circle cx="309" cy="132" r="2.4" fill="#0a0aa0"/>
<circle cx="292.8" cy="129" r="2.4" fill="#0a0aa0"/>
<circle cx="276.3" cy="126.2" r="2.4" fill="#0a0aa0"/>
<circle cx="259.2" cy="125" r="2.4" fill="#0a0aa0"/>
<circle cx="242.5" cy="121.9" r="2.4" fill="#0a0aa0"/>
<circle cx="226.3" cy="118" r="2.4" fill="#0a0aa0"/>
<circle cx="209.8" cy="115" r="2.4" fill="#0a0aa0"/>
<circle cx="193.3" cy="111" r="2.4" fill="#0a0aa0"/>
<circle cx="875" cy="312.6" r="2.3" fill="#f0f030"/>
<circle cx="883.2" cy="305.4" r="2.3" fill="#f0f030"/>
<circle cx="891" cy="297.6" r="2.3" fill="#f0f030"/>
<circle cx="899.4" cy="288.2" r="2.3" fill="#f0f030"/>
<circle cx="907.8" cy="283.3" r="2.3" fill="#f0f030"/>
<circle cx="923.8" cy="266.7" r="2.3" fill="#f0f030"/>
<circle cx="932.6" cy="260.5" r="2.3" fill="#f0f030"/>
<circle cx="940.4" cy="250.4" r="2.3" fill="#f0f030"/>
<circle cx="559.2" cy="86.3" r="2.4" fill="#0a0aa0"/>
<circle cx="576" cy="83.8" r="2.4" fill="#0a0aa0"/>
<circle cx="592.5" cy="83.4" r="2.4" fill="#0a0aa0"/>
<circle cx="675.7" cy="84" r="2.4" fill="#0a0aa0"/>
<circle cx="691.8" cy="86.7" r="2.4" fill="#0a0aa0"/>
<circle cx="708.4" cy="87.7" r="2.4" fill="#0a0aa0"/>
<circle cx="724.7" cy="92.5" r="2.4" fill="#0a0aa0"/>
<circle cx="775.2" cy="97.2" r="2.4" fill="#0a0aa0"/>
<circle cx="792" cy="101.2" r="2.4" fill="#0a0aa0"/>
<circle cx="808.5" cy="101.2" r="2.4" fill="#0a0aa0"/>
<circle cx="825.1" cy="101.8" r="2.4" fill="#0a0aa0"/>
<circle cx="841.8" cy="107.2" r="2.4" fill="#0a0aa0"/>
<circle cx="858.4" cy="109.9" r="2.4" fill="#0a0aa0"/>
<circle cx="875.1" cy="112.7" r="2.4" fill="#0a0aa0"/>
<circle cx="891.3" cy="115.9" r="2.4" fill="#0a0aa0"/>
<circle cx="907.8" cy="115.9" r="2.4" fill="#0a0aa0"/>
<circle cx="924.6" cy="118.3" r="2.4" fill="#0a0aa0"/>
<circle cx="940.7" cy="121.4" r="2.4" fill="#0a0aa0"/>
<circle cx="559.2" cy="118" r="2.4" fill="#0a0aa0"/>
<circle cx="576" cy="115.5" r="2.4" fill="#0a0aa0"/>
<circle cx="592.5" cy="113.8" r="2.4" fill="#0a0aa0"/>
<circle cx="609.1" cy="111.9" r="2.4" fill="#0a0aa0"/>
<circle cx="625.3" cy="113.3" r="2.4" fill="#0a0aa0"/>
<circle cx="642" cy="114.3" r="2.4" fill="#0a0aa0"/>
<circle cx="658.5" cy="115.9" r="2.4" fill="#0a0aa0"/>
<circle cx="708.4" cy="124.4" r="2.4" fill="#0a0aa0"/>
<circle cx="724.7" cy="128" r="2.4" fill="#0a0aa0"/>
<circle cx="741.3" cy="128.8" r="2.4" fill="#0a0aa0"/>
<circle cx="758.5" cy="130.9" r="2.4" fill="#0a0aa0"/>
<circle cx="775.2" cy="132.9" r="2.4" fill="#0a0aa0"/>
<circle cx="792" cy="137.5" r="2.4" fill="#0a0aa0"/>
<circle cx="808.5" cy="138.5" r="2.4" fill="#0a0aa0"/>
<circle cx="824.7" cy="143.6" r="2.3" fill="#f0a030"/>
<circle cx="841.2" cy="150.6" r="2.3" fill="#f0a030"/>
<circle cx="858.4" cy="157.1" r="2.3" fill="#f0a030"/>
<circle cx="907.8" cy="171.2" r="2.3" fill="#f0a030"/>
<circle cx="924" cy="178.5" r="2.3" fill="#f0a030"/>
<circle cx="940.7" cy="184.5" r="2.3" fill="#f0a030"/>
<circle cx="250.9" cy="317.2" r="2.2" fill="#9a9ae8"/>
<circle cx="268.1" cy="317.2" r="2.2" fill="#9a9ae8"/>
<circle cx="350.5" cy="318.8" r="2.2" fill="#9a9ae8"/>
<circle cx="367.7" cy="317.4" r="2.2" fill="#9a9ae8"/>
<circle cx="449.4" cy="315.8" r="2.2" fill="#9a9ae8"/>
<circle cx="467.8" cy="317.5" r="2.2" fill="#9a9ae8"/>
<circle cx="550.2" cy="314.7" r="2.2" fill="#9a9ae8"/>
<circle cx="567.8" cy="317.2" r="2.2" fill="#9a9ae8"/>
<circle cx="649.9" cy="319.1" r="2.2" fill="#9a9ae8"/>
<circle cx="667.1" cy="319.1" r="2.2" fill="#9a9ae8"/>
<circle cx="741.3" cy="313.1" r="2.2" fill="#9a9ae8"/>
<circle cx="766.6" cy="312.6" r="2.2" fill="#9a9ae8"/>
<circle cx="850" cy="317.5" r="2.2" fill="#9a9ae8"/>
<circle cx="866.8" cy="317.9" r="2.2" fill="#9a9ae8"/>
</g>
<rect x="363.0" y="132.0" width="26.0" height="11.0" fill="#fff" stroke="#202020" stroke-width="0.8" />
<text x="376.0" y="140.1" font-size="9.6" fill="#333" text-anchor="middle" textLength="18.0" lengthAdjust="spacingAndGlyphs" >5078</text>
<rect x="255.0" y="151.0" width="26.0" height="11.0" fill="#fff" stroke="#202020" stroke-width="0.8" />
<text x="268.0" y="159.4" font-size="9.6" fill="#333" text-anchor="middle" textLength="18.0" lengthAdjust="spacingAndGlyphs" >3257</text>
<rect x="354.0" y="166.5" width="26.5" height="11.5" fill="#fff" stroke="#202020" stroke-width="0.8" />
<text x="367.3" y="175.1" font-size="9.6" fill="#333" text-anchor="middle" textLength="18.0" lengthAdjust="spacingAndGlyphs" >4783</text>
<rect x="405.0" y="188.5" width="24.0" height="10.5" fill="#fff" stroke="#202020" stroke-width="0.8" />
<text x="417.2" y="196.7" font-size="9.6" fill="#333" text-anchor="middle" textLength="18.0" lengthAdjust="spacingAndGlyphs" >4041</text>
<rect x="487.0" y="192.5" width="26.5" height="11.0" fill="#fff" stroke="#202020" stroke-width="0.8" />
<text x="500.1" y="200.8" font-size="9.6" fill="#333" text-anchor="middle" textLength="18.0" lengthAdjust="spacingAndGlyphs" >3236</text>
<rect x="737.0" y="91.0" width="25.5" height="10.5" fill="#fff" stroke="#202020" stroke-width="0.8" />
<text x="749.9" y="99.1" font-size="9.6" fill="#333" text-anchor="middle" textLength="18.0" lengthAdjust="spacingAndGlyphs" >5155</text>
<rect x="670.5" y="117.0" width="25.5" height="10.5" fill="#fff" stroke="#202020" stroke-width="0.8" />
<text x="683.1" y="125.0" font-size="9.6" fill="#333" text-anchor="middle" textLength="18.0" lengthAdjust="spacingAndGlyphs" >5671</text>
<rect x="678.5" y="157.5" width="26.5" height="10.0" fill="#fff" stroke="#202020" stroke-width="0.8" />
<text x="691.9" y="165.6" font-size="9.6" fill="#333" text-anchor="middle" textLength="18.0" lengthAdjust="spacingAndGlyphs" >2295</text>
<rect x="707.5" y="175.0" width="26.0" height="10.5" fill="#fff" stroke="#202020" stroke-width="0.8" />
<text x="720.7" y="183.3" font-size="9.6" fill="#333" text-anchor="middle" textLength="18.0" lengthAdjust="spacingAndGlyphs" >1973</text>
<rect x="820.0" y="154.5" width="25.5" height="10.5" fill="#fff" stroke="#202020" stroke-width="0.8" />
<text x="833.0" y="162.4" font-size="9.6" fill="#333" text-anchor="middle" textLength="18.0" lengthAdjust="spacingAndGlyphs" >3041</text>
<rect x="870.0" y="159.5" width="25.0" height="10.5" fill="#fff" stroke="#202020" stroke-width="0.8" />
<text x="882.7" y="167.9" font-size="9.6" fill="#333" text-anchor="middle" textLength="18.0" lengthAdjust="spacingAndGlyphs" >1697</text>
<rect x="850.0" y="171.0" width="25.0" height="10.5" fill="#fff" stroke="#202020" stroke-width="0.8" />
<text x="862.5" y="178.9" font-size="9.6" fill="#333" text-anchor="middle" textLength="18.0" lengthAdjust="spacingAndGlyphs" >2119</text>
<rect x="911.0" y="195.5" width="26.5" height="11.0" fill="#fff" stroke="#202020" stroke-width="0.8" />
<text x="924.3" y="204.1" font-size="9.6" fill="#333" text-anchor="middle" textLength="18.0" lengthAdjust="spacingAndGlyphs" >1630</text>
<rect x="712.0" y="215.0" width="26.5" height="11.5" fill="#fff" stroke="#202020" stroke-width="0.8" />
<text x="725.2" y="223.7" font-size="9.6" fill="#333" text-anchor="middle" textLength="18.0" lengthAdjust="spacingAndGlyphs" >1382</text>
<rect x="205.0" y="213.5" width="26.0" height="10.5" fill="#fff" stroke="#202020" stroke-width="0.8" />
<text x="217.8" y="221.2" font-size="9.6" fill="#333" text-anchor="middle" textLength="18.0" lengthAdjust="spacingAndGlyphs" >4430</text>
<rect x="196.5" y="205.5" width="26.5" height="11.0" fill="#fff" stroke="#202020" stroke-width="0.8" />
<text x="209.5" y="213.6" font-size="9.6" fill="#333" text-anchor="middle" textLength="18.0" lengthAdjust="spacingAndGlyphs" >2716</text>
<rect x="317.0" y="238.5" width="26.5" height="11.5" fill="#fff" stroke="#202020" stroke-width="0.8" />
<text x="330.4" y="247.2" font-size="9.6" fill="#333" text-anchor="middle" textLength="18.0" lengthAdjust="spacingAndGlyphs" >2685</text>
<rect x="367.5" y="244.0" width="26.5" height="11.0" fill="#fff" stroke="#202020" stroke-width="0.8" />
<text x="380.6" y="252.6" font-size="9.6" fill="#333" text-anchor="middle" textLength="18.0" lengthAdjust="spacingAndGlyphs" >2409</text>
<rect x="217.0" y="253.0" width="27.0" height="11.0" fill="#fff" stroke="#202020" stroke-width="0.8" />
<text x="230.4" y="261.3" font-size="9.6" fill="#333" text-anchor="middle" textLength="18.0" lengthAdjust="spacingAndGlyphs" >1843</text>
<rect x="541.5" y="237.5" width="26.0" height="11.0" fill="#fff" stroke="#202020" stroke-width="0.8" />
<text x="554.3" y="245.6" font-size="9.6" fill="#333" text-anchor="middle" textLength="18.0" lengthAdjust="spacingAndGlyphs" >1856</text>
<rect x="317.0" y="271.5" width="26.5" height="11.0" fill="#fff" stroke="#202020" stroke-width="0.8" />
<text x="330.4" y="279.8" font-size="9.6" fill="#333" text-anchor="middle" textLength="18.0" lengthAdjust="spacingAndGlyphs" >1750</text>
<rect x="371.0" y="271.0" width="26.0" height="11.0" fill="#fff" stroke="#202020" stroke-width="0.8" />
<text x="384.1" y="279.4" font-size="9.6" fill="#333" text-anchor="middle" textLength="18.0" lengthAdjust="spacingAndGlyphs" >2029</text>
<rect x="521.5" y="269.5" width="25.5" height="11.0" fill="#fff" stroke="#202020" stroke-width="0.8" />
<text x="534.1" y="277.8" font-size="9.6" fill="#333" text-anchor="middle" textLength="18.0" lengthAdjust="spacingAndGlyphs" >1573</text>
<rect x="195.5" y="284.0" width="21.0" height="9.5" fill="#fff" stroke="#202020" stroke-width="0.8" />
<text x="198.6" y="291.8" font-size="9.6" fill="#333" text-anchor="start" textLength="13.5" lengthAdjust="spacingAndGlyphs" >789</text>
<rect x="203.0" y="286.0" width="22.0" height="11.0" fill="#fff" stroke="#202020" stroke-width="0.8" />
<text x="214.2" y="294.3" font-size="9.6" fill="#333" text-anchor="middle" textLength="13.5" lengthAdjust="spacingAndGlyphs" >830</text>
<rect x="278.5" y="295.0" width="21.5" height="10.5" fill="#fff" stroke="#202020" stroke-width="0.8" />
<text x="289.1" y="303.2" font-size="9.6" fill="#333" text-anchor="middle" textLength="13.5" lengthAdjust="spacingAndGlyphs" >746</text>
<rect x="316.0" y="294.5" width="21.5" height="10.5" fill="#fff" stroke="#202020" stroke-width="0.8" />
<text x="326.6" y="302.8" font-size="9.6" fill="#333" text-anchor="middle" textLength="13.5" lengthAdjust="spacingAndGlyphs" >676</text>
<rect x="382.0" y="295.5" width="21.0" height="11.5" fill="#fff" stroke="#202020" stroke-width="0.8" />
<text x="392.2" y="304.3" font-size="9.6" fill="#333" text-anchor="middle" textLength="13.5" lengthAdjust="spacingAndGlyphs" >735</text>
<rect x="419.0" y="295.5" width="21.0" height="11.0" fill="#fff" stroke="#202020" stroke-width="0.8" />
<text x="429.7" y="303.9" font-size="9.6" fill="#333" text-anchor="middle" textLength="13.5" lengthAdjust="spacingAndGlyphs" >704</text>
<rect x="477.5" y="297.0" width="21.5" height="11.0" fill="#fff" stroke="#202020" stroke-width="0.8" />
<text x="488.3" y="305.4" font-size="9.6" fill="#333" text-anchor="middle" textLength="13.5" lengthAdjust="spacingAndGlyphs" >781</text>
<rect x="510.5" y="290.5" width="21.5" height="11.0" fill="#fff" stroke="#202020" stroke-width="0.8" />
<text x="521.2" y="298.9" font-size="9.6" fill="#333" text-anchor="middle" textLength="13.5" lengthAdjust="spacingAndGlyphs" >788</text>
<rect x="589.5" y="278.5" width="21.0" height="11.0" fill="#fff" stroke="#202020" stroke-width="0.8" />
<text x="600.2" y="286.7" font-size="9.6" fill="#333" text-anchor="middle" textLength="13.5" lengthAdjust="spacingAndGlyphs" >713</text>
<rect x="618.5" y="270.5" width="21.0" height="11.0" fill="#fff" stroke="#202020" stroke-width="0.8" />
<text x="629.2" y="278.6" font-size="9.6" fill="#333" text-anchor="middle" textLength="13.5" lengthAdjust="spacingAndGlyphs" >852</text>
<rect x="664.5" y="258.0" width="21.5" height="11.5" fill="#fff" stroke="#202020" stroke-width="0.8" />
<text x="675.1" y="266.6" font-size="9.6" fill="#333" text-anchor="middle" textLength="13.5" lengthAdjust="spacingAndGlyphs" >783</text>
<rect x="706.0" y="281.0" width="21.5" height="11.0" fill="#fff" stroke="#202020" stroke-width="0.8" />
<text x="717.0" y="289.1" font-size="9.6" fill="#333" text-anchor="middle" textLength="13.5" lengthAdjust="spacingAndGlyphs" >809</text>
<rect x="789.0" y="269.5" width="22.0" height="10.5" fill="#fff" stroke="#202020" stroke-width="0.8" />
<text x="800.0" y="277.6" font-size="9.6" fill="#333" text-anchor="middle" textLength="13.5" lengthAdjust="spacingAndGlyphs" >612</text>
<rect x="818.5" y="259.0" width="21.5" height="10.0" fill="#fff" stroke="#202020" stroke-width="0.8" />
<text x="829.1" y="266.8" font-size="9.6" fill="#333" text-anchor="middle" textLength="13.5" lengthAdjust="spacingAndGlyphs" >680</text>
<rect x="884.5" y="265.5" width="22.0" height="11.0" fill="#fff" stroke="#202020" stroke-width="0.8" />
<text x="895.3" y="274.1" font-size="9.6" fill="#333" text-anchor="middle" textLength="13.5" lengthAdjust="spacingAndGlyphs" >620</text>
<rect x="906.5" y="269.0" width="20.5" height="11.0" fill="#fff" stroke="#202020" stroke-width="0.8" />
<text x="916.5" y="277.4" font-size="9.6" fill="#333" text-anchor="middle" textLength="13.5" lengthAdjust="spacingAndGlyphs" >631</text>
<rect x="245.0" y="319.5" width="8.0" height="11.0" fill="#fff" stroke="#202020" stroke-width="0.8" />
<text x="248.1" y="327.7" font-size="9.6" fill="#333" text-anchor="start" textLength="13.5" lengthAdjust="spacingAndGlyphs" >313</text>
<rect x="253.0" y="319.5" width="21.0" height="11.0" fill="#fff" stroke="#202020" stroke-width="0.8" />
<text x="263.6" y="327.7" font-size="9.6" fill="#333" text-anchor="middle" textLength="13.5" lengthAdjust="spacingAndGlyphs" >313</text>
<rect x="345.5" y="321.0" width="7.0" height="10.5" fill="#fff" stroke="#202020" stroke-width="0.8" />
<text x="348.8" y="328.9" font-size="9.6" fill="#333" text-anchor="start" textLength="13.5" lengthAdjust="spacingAndGlyphs" >313</text>
<rect x="352.5" y="321.0" width="21.0" height="10.5" fill="#fff" stroke="#202020" stroke-width="0.8" />
<text x="363.1" y="328.9" font-size="9.6" fill="#333" text-anchor="middle" textLength="13.5" lengthAdjust="spacingAndGlyphs" >333</text>
<rect x="444.0" y="319.0" width="9.5" height="12.0" fill="#fff" stroke="#202020" stroke-width="0.8" />
<text x="447.2" y="327.7" font-size="9.6" fill="#333" text-anchor="start" textLength="13.5" lengthAdjust="spacingAndGlyphs" >213</text>
<rect x="453.5" y="319.0" width="21.0" height="12.0" fill="#fff" stroke="#202020" stroke-width="0.8" />
<text x="463.9" y="327.7" font-size="9.6" fill="#333" text-anchor="middle" textLength="13.5" lengthAdjust="spacingAndGlyphs" >313</text>
<rect x="544.0" y="319.5" width="8.5" height="11.5" fill="#fff" stroke="#202020" stroke-width="0.8" />
<text x="547.2" y="327.9" font-size="9.6" fill="#333" text-anchor="start" textLength="13.5" lengthAdjust="spacingAndGlyphs" >213</text>
<rect x="552.5" y="319.5" width="21.5" height="11.5" fill="#fff" stroke="#202020" stroke-width="0.8" />
<text x="563.2" y="327.9" font-size="9.6" fill="#333" text-anchor="middle" textLength="13.5" lengthAdjust="spacingAndGlyphs" >313</text>
<rect x="644.5" y="321.0" width="7.0" height="11.5" fill="#fff" stroke="#202020" stroke-width="0.8" />
<text x="647.7" y="329.4" font-size="9.6" fill="#333" text-anchor="start" textLength="13.5" lengthAdjust="spacingAndGlyphs" >313</text>
<rect x="651.5" y="321.0" width="22.5" height="11.5" fill="#fff" stroke="#202020" stroke-width="0.8" />
<text x="662.6" y="329.4" font-size="9.6" fill="#333" text-anchor="middle" textLength="13.5" lengthAdjust="spacingAndGlyphs" >385</text>
<rect x="739.0" y="317.0" width="12.5" height="10.5" fill="#fff" stroke="#202020" stroke-width="0.8" />
<text x="742.3" y="325.2" font-size="9.6" fill="#333" text-anchor="start" textLength="13.5" lengthAdjust="spacingAndGlyphs" >478</text>
<rect x="751.5" y="317.0" width="22.0" height="11.5" fill="#fff" stroke="#202020" stroke-width="0.8" />
<text x="762.7" y="325.8" font-size="9.6" fill="#333" text-anchor="middle" textLength="13.5" lengthAdjust="spacingAndGlyphs" >238</text>
<rect x="843.5" y="320.5" width="8.0" height="11.0" fill="#fff" stroke="#202020" stroke-width="0.8" />
<text x="846.7" y="328.8" font-size="9.6" fill="#333" text-anchor="start" textLength="13.5" lengthAdjust="spacingAndGlyphs" >313</text>
<rect x="851.5" y="320.5" width="21.5" height="11.0" fill="#fff" stroke="#202020" stroke-width="0.8" />
<text x="862.3" y="328.8" font-size="9.6" fill="#333" text-anchor="middle" textLength="13.5" lengthAdjust="spacingAndGlyphs" >333</text>
<rect x="813.5" y="335.5" width="136" height="12.8" fill="#fff" stroke="#333" stroke-width="1" />
<text x="880.6" y="345.0" font-size="9.6" fill="#333" text-anchor="middle" textLength="99.3" lengthAdjust="spacingAndGlyphs" >SP: 1440 ID: Composite 3L</text>
<rect x="176" y="381.5" width="774" height="129" fill="#fff" stroke="#333" stroke-width="1.2" />
<text x="562.6" y="363.4" font-size="9.6" fill="#222" text-anchor="middle" textLength="47" lengthAdjust="spacingAndGlyphs" >Distance (m)</text>
<text x="202.6" y="375.7" font-size="9.6" fill="#333" text-anchor="middle" textLength="13.15" lengthAdjust="spacingAndGlyphs" >986</text>
<text x="202.6" y="522.3" font-size="9.6" fill="#333" text-anchor="middle" textLength="13.15" lengthAdjust="spacingAndGlyphs" >986</text>
<text x="259.1" y="375.7" font-size="9.6" fill="#333" text-anchor="middle" textLength="17.4" lengthAdjust="spacingAndGlyphs" >1020</text>
<text x="259.1" y="522.3" font-size="9.6" fill="#333" text-anchor="middle" textLength="17.4" lengthAdjust="spacingAndGlyphs" >1020</text>
<text x="315.7" y="375.7" font-size="9.6" fill="#333" text-anchor="middle" textLength="17.4" lengthAdjust="spacingAndGlyphs" >1054</text>
<text x="315.7" y="522.3" font-size="9.6" fill="#333" text-anchor="middle" textLength="17.4" lengthAdjust="spacingAndGlyphs" >1054</text>
<text x="372.2" y="375.7" font-size="9.6" fill="#333" text-anchor="middle" textLength="17.4" lengthAdjust="spacingAndGlyphs" >1088</text>
<text x="372.2" y="522.3" font-size="9.6" fill="#333" text-anchor="middle" textLength="17.4" lengthAdjust="spacingAndGlyphs" >1088</text>
<text x="428.8" y="375.7" font-size="9.6" fill="#333" text-anchor="middle" textLength="17.4" lengthAdjust="spacingAndGlyphs" >1122</text>
<text x="428.8" y="522.3" font-size="9.6" fill="#333" text-anchor="middle" textLength="17.4" lengthAdjust="spacingAndGlyphs" >1122</text>
<text x="485.3" y="375.7" font-size="9.6" fill="#333" text-anchor="middle" textLength="17.4" lengthAdjust="spacingAndGlyphs" >1156</text>
<text x="485.3" y="522.3" font-size="9.6" fill="#333" text-anchor="middle" textLength="17.4" lengthAdjust="spacingAndGlyphs" >1156</text>
<text x="541.8" y="375.7" font-size="9.6" fill="#333" text-anchor="middle" textLength="17.4" lengthAdjust="spacingAndGlyphs" >1190</text>
<text x="541.8" y="522.3" font-size="9.6" fill="#333" text-anchor="middle" textLength="17.4" lengthAdjust="spacingAndGlyphs" >1190</text>
<text x="598.4" y="375.7" font-size="9.6" fill="#333" text-anchor="middle" textLength="17.4" lengthAdjust="spacingAndGlyphs" >1224</text>
<text x="598.4" y="522.3" font-size="9.6" fill="#333" text-anchor="middle" textLength="17.4" lengthAdjust="spacingAndGlyphs" >1224</text>
<text x="654.9" y="375.7" font-size="9.6" fill="#333" text-anchor="middle" textLength="17.4" lengthAdjust="spacingAndGlyphs" >1258</text>
<text x="654.9" y="522.3" font-size="9.6" fill="#333" text-anchor="middle" textLength="17.4" lengthAdjust="spacingAndGlyphs" >1258</text>
<text x="711.5" y="375.7" font-size="9.6" fill="#333" text-anchor="middle" textLength="17.4" lengthAdjust="spacingAndGlyphs" >1292</text>
<text x="711.5" y="522.3" font-size="9.6" fill="#333" text-anchor="middle" textLength="17.4" lengthAdjust="spacingAndGlyphs" >1292</text>
<text x="768.0" y="375.7" font-size="9.6" fill="#333" text-anchor="middle" textLength="17.4" lengthAdjust="spacingAndGlyphs" >1326</text>
<text x="768.0" y="522.3" font-size="9.6" fill="#333" text-anchor="middle" textLength="17.4" lengthAdjust="spacingAndGlyphs" >1326</text>
<text x="824.5" y="375.7" font-size="9.6" fill="#333" text-anchor="middle" textLength="17.4" lengthAdjust="spacingAndGlyphs" >1360</text>
<text x="824.5" y="522.3" font-size="9.6" fill="#333" text-anchor="middle" textLength="17.4" lengthAdjust="spacingAndGlyphs" >1360</text>
<text x="881.1" y="375.7" font-size="9.6" fill="#333" text-anchor="middle" textLength="17.4" lengthAdjust="spacingAndGlyphs" >1394</text>
<text x="881.1" y="522.3" font-size="9.6" fill="#333" text-anchor="middle" textLength="17.4" lengthAdjust="spacingAndGlyphs" >1394</text>
<text x="937.6" y="375.7" font-size="9.6" fill="#333" text-anchor="middle" textLength="17.4" lengthAdjust="spacingAndGlyphs" >1428</text>
<text x="937.6" y="522.3" font-size="9.6" fill="#333" text-anchor="middle" textLength="17.4" lengthAdjust="spacingAndGlyphs" >1428</text>
<text x="954.0" y="522.3" font-size="9.6" fill="#333" text-anchor="start" textLength="18" lengthAdjust="spacingAndGlyphs" >H, m</text>
<text x="169.0" y="416.8" font-size="9.6" fill="#333" text-anchor="end" textLength="4.67" lengthAdjust="spacingAndGlyphs" >0</text>
<text x="955.0" y="416.8" font-size="9.6" fill="#333" text-anchor="start" textLength="4.67" lengthAdjust="spacingAndGlyphs" >0</text>
<text x="169.0" y="475.9" font-size="9.6" fill="#333" text-anchor="end" textLength="9.34" lengthAdjust="spacingAndGlyphs" >95</text>
<text x="955.0" y="475.9" font-size="9.6" fill="#333" text-anchor="start" textLength="9.34" lengthAdjust="spacingAndGlyphs" >95</text>
<text transform="translate(148.5,446) rotate(-90)" font-size="9.6" fill="#222" text-anchor="middle" textLength="36" lengthAdjust="spacingAndGlyphs">Depth (m)</text>
<clipPath id="lowclip"><rect x="176.6" y="382" width="772.8" height="128"/></clipPath>
<g clip-path="url(#lowclip)">
<path d="M176.0,424.0 L178.0,423.9 L180.0,423.9 L182.0,423.8 L184.0,423.7 L186.0,423.7 L188.0,423.6 L190.0,423.5 L192.0,423.5 L194.0,423.4 L196.0,423.4 L198.0,423.3 L200.0,423.2 L202.0,423.2 L204.0,423.1 L206.0,423.0 L208.0,423.0 L210.0,422.9 L212.0,422.8 L214.0,422.8 L216.0,422.7 L218.0,422.6 L218.5,422.6 L218.5,447.0 L218.0,447.0 L216.0,447.0 L214.0,447.0 L212.0,447.0 L210.0,447.0 L208.0,447.0 L206.0,447.0 L204.0,447.0 L202.0,447.0 L200.0,447.0 L198.0,447.0 L196.0,447.0 L194.0,447.0 L192.0,447.0 L190.0,447.0 L188.0,447.0 L186.0,447.0 L184.0,447.0 L182.0,447.0 L180.0,447.0 L178.0,447.0 L176.0,447.0 Z" fill="#5214c8" />
<path d="M176.0,447.0 L178.0,447.0 L180.0,447.0 L182.0,447.0 L184.0,447.0 L186.0,447.0 L188.0,447.0 L190.0,447.0 L192.0,447.0 L194.0,447.0 L196.0,447.0 L198.0,447.0 L200.0,447.0 L202.0,447.0 L204.0,447.0 L206.0,447.0 L208.0,447.0 L210.0,447.0 L212.0,447.0 L214.0,447.0 L216.0,447.0 L218.0,447.0 L218.5,447.0 L218.5,449.0 L218.0,449.0 L216.0,449.0 L214.0,449.0 L212.0,449.0 L210.0,449.0 L208.0,449.0 L206.0,449.0 L204.0,449.0 L202.0,449.0 L200.0,449.0 L198.0,449.0 L196.0,449.0 L194.0,449.0 L192.0,449.0 L190.0,449.0 L188.0,449.0 L186.0,449.0 L184.0,449.0 L182.0,449.0 L180.0,449.0 L178.0,449.0 L176.0,449.0 Z" fill="#7a50d8" opacity="0.8"/>
<path d="M176.0,449.0 L178.0,449.0 L180.0,449.0 L182.0,449.0 L184.0,449.0 L186.0,449.0 L188.0,449.0 L190.0,449.0 L192.0,449.0 L194.0,449.0 L196.0,449.0 L198.0,449.0 L200.0,449.0 L202.0,449.0 L204.0,449.0 L206.0,449.0 L208.0,449.0 L210.0,449.0 L212.0,449.0 L214.0,449.0 L216.0,449.0 L218.0,449.0 L218.5,449.0 L218.5,451.0 L218.0,451.0 L216.0,451.0 L214.0,451.0 L212.0,451.0 L210.0,451.0 L208.0,451.0 L206.0,451.0 L204.0,451.0 L202.0,451.0 L200.0,451.0 L198.0,451.0 L196.0,451.0 L194.0,451.0 L192.0,451.0 L190.0,451.0 L188.0,451.0 L186.0,451.0 L184.0,451.0 L182.0,451.0 L180.0,451.0 L178.0,451.0 L176.0,451.0 Z" fill="#a080e8" opacity="0.6"/>
<path d="M176.0,451.0 L178.0,451.0 L180.0,451.0 L182.0,451.0 L184.0,451.0 L186.0,451.0 L188.0,451.0 L190.0,451.0 L192.0,451.0 L194.0,451.0 L196.0,451.0 L198.0,451.0 L200.0,451.0 L202.0,451.0 L204.0,451.0 L206.0,451.0 L208.0,451.0 L210.0,451.0 L212.0,451.0 L214.0,451.0 L216.0,451.0 L218.0,451.0 L218.5,451.0 L218.5,454.0 L218.0,454.0 L216.0,454.0 L214.0,454.0 L212.0,454.0 L210.0,454.0 L208.0,454.0 L206.0,454.0 L204.0,454.0 L202.0,454.0 L200.0,454.0 L198.0,454.0 L196.0,454.0 L194.0,454.0 L192.0,454.0 L190.0,454.0 L188.0,454.0 L186.0,454.0 L184.0,454.0 L182.0,454.0 L180.0,454.0 L178.0,454.0 L176.0,454.0 Z" fill="#d0c0f4" opacity="0.6"/>
<defs><linearGradient id="purp" x1="0" y1="0" x2="1" y2="0"><stop offset="0" stop-color="#5214c8"/><stop offset="0.45" stop-color="#5a24d0"/><stop offset="0.5" stop-color="#6444dc"/><stop offset="0.7" stop-color="#7068ec"/><stop offset="1" stop-color="#7676f2"/></linearGradient></defs>
<path d="M218.0,422.6 L220.0,422.6 L222.0,422.5 L224.0,422.4 L226.0,422.4 L228.0,422.3 L230.0,422.2 L232.0,422.2 L234.0,422.1 L236.0,422.1 L238.0,422.0 L240.0,421.9 L242.0,421.9 L244.0,421.8 L246.0,421.7 L248.0,421.7 L250.0,421.6 L252.0,421.6 L254.0,421.5 L256.0,421.5 L258.0,421.5 L260.0,421.4 L262.0,421.4 L264.0,421.3 L266.0,421.3 L268.0,421.3 L270.0,421.2 L272.0,421.2 L274.0,421.2 L276.0,421.1 L278.0,421.1 L280.0,421.0 L282.0,421.0 L284.0,421.0 L286.0,420.9 L288.0,420.9 L290.0,420.9 L292.0,420.8 L294.0,420.8 L296.0,420.7 L298.0,420.7 L300.0,420.7 L302.0,420.6 L304.0,420.6 L306.0,420.6 L308.0,420.5 L310.0,420.5 L312.0,420.4 L314.0,420.4 L316.0,420.4 L318.0,420.3 L320.0,420.3 L322.0,420.2 L324.0,420.2 L326.0,420.2 L328.0,420.1 L330.0,420.1 L332.0,420.1 L334.0,420.1 L336.0,420.0 L338.0,420.0 L340.0,420.0 L342.0,420.0 L344.0,420.0 L346.0,420.0 L348.0,419.9 L350.0,419.9 L352.0,419.9 L354.0,419.9 L356.0,419.9 L358.0,419.8 L360.0,419.8 L362.0,419.8 L364.0,419.8 L366.0,419.8 L368.0,419.7 L370.0,419.7 L372.0,419.7 L374.0,419.7 L376.0,419.7 L378.0,419.6 L380.0,419.6 L382.0,419.6 L384.0,419.6 L386.0,419.6 L388.0,419.6 L390.0,419.5 L392.0,419.5 L394.0,419.5 L396.0,419.5 L398.0,419.5 L400.0,419.4 L402.0,419.4 L404.0,419.4 L406.0,419.4 L408.0,419.4 L410.0,419.4 L412.0,419.3 L414.0,419.3 L416.0,419.3 L418.0,419.3 L420.0,419.3 L422.0,419.2 L424.0,419.2 L426.0,419.2 L428.0,419.2 L430.0,419.2 L432.0,419.3 L434.0,419.3 L436.0,419.3 L438.0,419.3 L440.0,419.4 L442.0,419.4 L444.0,419.4 L446.0,419.4 L448.0,419.5 L450.0,419.5 L452.0,419.5 L454.0,419.5 L456.0,419.6 L458.0,419.6 L460.0,419.6 L462.0,419.6 L464.0,419.7 L466.0,419.7 L468.0,419.7 L470.0,419.7 L472.0,419.8 L474.0,419.8 L476.0,419.8 L478.0,419.8 L480.0,419.9 L482.0,419.9 L484.0,419.9 L486.0,419.9 L488.0,420.0 L490.0,420.0 L492.0,420.0 L494.0,420.0 L496.0,420.1 L498.0,420.1 L500.0,420.1 L502.0,420.2 L504.0,420.4 L506.0,420.5 L508.0,420.6 L510.0,420.7 L512.0,420.9 L514.0,421.0 L516.0,421.1 L518.0,421.2 L520.0,421.4 L522.0,421.5 L524.0,421.6 L526.0,421.7 L528.0,421.9 L530.0,422.0 L532.0,422.1 L534.0,422.2 L536.0,422.4 L538.0,422.5 L540.0,422.6 L542.0,422.7 L544.0,422.7 L546.0,422.8 L548.0,422.9 L550.0,422.9 L552.0,423.0 L554.0,423.0 L556.0,423.1 L558.0,423.2 L560.0,423.2 L562.0,423.3 L564.0,423.4 L566.0,423.4 L568.0,423.5 L570.0,423.6 L572.0,423.6 L574.0,423.7 L576.0,423.7 L578.0,423.8 L580.0,423.9 L582.0,423.9 L584.0,424.0 L586.0,424.1 L588.0,424.1 L590.0,424.2 L592.0,424.2 L594.0,424.3 L596.0,424.4 L598.0,424.4 L600.0,424.5 L602.0,424.6 L604.0,424.7 L606.0,424.8 L608.0,424.8 L610.0,424.9 L612.0,425.0 L614.0,425.1 L616.0,425.2 L618.0,425.3 L620.0,425.4 L622.0,425.4 L624.0,425.5 L626.0,425.6 L628.0,425.7 L630.0,425.8 L632.0,425.9 L634.0,426.0 L636.0,426.0 L638.0,426.1 L640.0,426.2 L642.0,426.3 L644.0,426.4 L646.0,426.5 L648.0,426.6 L650.0,426.6 L652.0,426.7 L654.0,426.8 L656.0,426.9 L658.0,427.0 L660.0,427.1 L662.0,427.2 L664.0,427.2 L666.0,427.3 L668.0,427.4 L670.0,427.5 L672.0,427.5 L674.0,427.5 L676.0,427.5 L678.0,427.5 L680.0,427.5 L682.0,427.5 L684.0,427.5 L686.0,427.5 L688.0,427.5 L690.0,427.5 L692.0,427.5 L694.0,427.5 L696.0,427.5 L698.0,427.5 L700.0,427.5 L702.0,427.6 L704.0,427.7 L706.0,427.8 L708.0,427.9 L710.0,428.0 L712.0,428.1 L714.0,428.2 L716.0,428.3 L718.0,428.4 L720.0,428.5 L722.0,428.6 L724.0,428.7 L726.0,428.8 L728.0,428.9 L730.0,429.1 L732.0,429.2 L734.0,429.3 L736.0,429.4 L738.0,429.5 L740.0,429.6 L742.0,429.7 L744.0,429.8 L746.0,429.9 L748.0,430.0 L750.0,430.1 L752.0,430.2 L754.0,430.3 L756.0,430.4 L758.0,430.5 L760.0,430.6 L762.0,430.6 L764.0,430.7 L766.0,430.7 L768.0,430.7 L770.0,430.7 L772.0,430.8 L774.0,430.8 L776.0,430.8 L778.0,430.9 L780.0,430.9 L782.0,430.9 L784.0,430.9 L786.0,431.0 L788.0,431.0 L790.0,431.0 L792.0,431.0 L794.0,431.1 L796.0,431.1 L798.0,431.1 L800.0,431.2 L802.0,431.2 L804.0,431.2 L806.0,431.2 L808.0,431.3 L810.0,431.3 L812.0,431.3 L814.0,431.3 L816.0,431.3 L818.0,431.3 L820.0,431.3 L822.0,431.3 L824.0,431.4 L826.0,431.4 L828.0,431.4 L830.0,431.4 L832.0,431.4 L834.0,431.4 L836.0,431.4 L838.0,431.4 L840.0,431.4 L842.0,431.4 L844.0,431.4 L846.0,431.4 L848.0,431.4 L850.0,431.4 L852.0,431.4 L854.0,431.5 L856.0,431.5 L858.0,431.5 L860.0,431.5 L862.0,431.5 L864.0,431.5 L866.0,431.5 L868.0,431.5 L870.0,431.5 L872.0,431.5 L874.0,431.5 L876.0,431.5 L878.0,431.5 L880.0,431.6 L882.0,431.6 L884.0,431.6 L886.0,431.6 L888.0,431.6 L890.0,431.6 L892.0,431.6 L894.0,431.6 L896.0,431.6 L898.0,431.6 L900.0,431.6 L900.0,474.3 L898.0,474.5 L896.0,474.7 L894.0,474.9 L892.0,475.0 L890.0,475.2 L888.0,475.4 L886.0,475.6 L884.0,475.8 L882.0,476.0 L880.0,476.1 L878.0,476.3 L876.0,476.5 L874.0,476.7 L872.0,476.9 L870.0,477.1 L868.0,477.3 L866.0,477.4 L864.0,477.6 L862.0,477.8 L860.0,478.0 L858.0,477.9 L856.0,477.8 L854.0,477.8 L852.0,477.7 L850.0,477.6 L848.0,477.5 L846.0,477.4 L844.0,477.3 L842.0,477.2 L840.0,477.2 L838.0,477.1 L836.0,477.0 L834.0,476.9 L832.0,476.8 L830.0,476.8 L828.0,476.7 L826.0,476.6 L824.0,476.5 L822.0,476.4 L820.0,476.3 L818.0,476.2 L816.0,476.2 L814.0,476.1 L812.0,476.0 L810.0,475.9 L808.0,475.8 L806.0,475.8 L804.0,475.7 L802.0,475.6 L800.0,475.5 L798.0,475.4 L796.0,475.4 L794.0,475.3 L792.0,475.3 L790.0,475.2 L788.0,475.1 L786.0,475.1 L784.0,475.0 L782.0,475.0 L780.0,474.9 L778.0,474.8 L776.0,474.8 L774.0,474.7 L772.0,474.7 L770.0,474.6 L768.0,474.5 L766.0,474.5 L764.0,474.4 L762.0,474.4 L760.0,474.3 L758.0,474.3 L756.0,474.2 L754.0,474.2 L752.0,474.1 L750.0,474.1 L748.0,474.0 L746.0,474.0 L744.0,474.0 L742.0,473.9 L740.0,473.9 L738.0,473.8 L736.0,473.8 L734.0,473.7 L732.0,473.7 L730.0,473.6 L728.0,473.6 L726.0,473.6 L724.0,473.5 L722.0,473.5 L720.0,473.4 L718.0,473.4 L716.0,473.3 L714.0,473.3 L712.0,473.3 L710.0,473.2 L708.0,473.2 L706.0,473.1 L704.0,473.1 L702.0,473.0 L700.0,473.0 L698.0,472.9 L696.0,472.9 L694.0,472.8 L692.0,472.7 L690.0,472.7 L688.0,472.6 L686.0,472.5 L684.0,472.5 L682.0,472.4 L680.0,472.3 L678.0,472.3 L676.0,472.2 L674.0,472.1 L672.0,472.1 L670.0,472.0 L668.0,471.8 L666.0,471.6 L664.0,471.4 L662.0,471.2 L660.0,470.9 L658.0,470.7 L656.0,470.5 L654.0,470.3 L652.0,470.1 L650.0,469.9 L648.0,469.7 L646.0,469.5 L644.0,469.2 L642.0,469.0 L640.0,468.8 L638.0,468.6 L636.0,468.2 L634.0,467.6 L632.0,467.0 L630.0,466.4 L628.0,465.8 L626.0,465.2 L624.0,464.6 L622.0,464.0 L620.0,463.4 L618.0,462.9 L616.0,462.3 L614.0,461.7 L612.0,461.1 L610.0,460.5 L608.0,459.9 L606.0,459.3 L604.0,458.7 L602.0,458.1 L600.0,457.5 L598.0,457.0 L596.0,456.5 L594.0,456.0 L592.0,455.5 L590.0,455.0 L588.0,454.5 L586.0,454.0 L584.0,453.5 L582.0,453.0 L580.0,452.5 L578.0,452.0 L576.0,451.5 L574.0,451.0 L572.0,450.5 L570.0,450.0 L568.0,449.5 L566.0,449.0 L564.0,448.5 L562.0,448.0 L560.0,447.5 L558.0,446.9 L556.0,446.4 L554.0,445.9 L552.0,445.3 L550.0,444.8 L548.0,444.2 L546.0,443.6 L544.0,443.1 L542.0,442.6 L540.0,442.0 L538.0,442.3 L536.0,442.6 L534.0,442.9 L532.0,443.1 L530.0,443.4 L528.0,443.7 L526.0,444.0 L524.0,444.3 L522.0,444.6 L520.0,444.9 L518.0,445.2 L516.0,445.4 L514.0,445.7 L512.0,446.0 L510.0,446.3 L508.0,446.4 L506.0,446.5 L504.0,446.7 L502.0,446.8 L500.0,446.9 L498.0,447.0 L496.0,447.1 L494.0,447.3 L492.0,447.4 L490.0,447.5 L488.0,447.3 L486.0,447.0 L484.0,446.8 L482.0,446.5 L480.0,446.3 L478.0,446.0 L476.0,445.8 L474.0,445.5 L472.0,445.3 L470.0,445.0 L468.0,444.8 L466.0,444.5 L464.0,444.3 L462.0,444.0 L460.0,443.8 L458.0,443.8 L456.0,443.7 L454.0,443.7 L452.0,443.6 L450.0,443.6 L448.0,443.6 L446.0,443.5 L444.0,443.5 L442.0,443.4 L440.0,443.4 L438.0,443.4 L436.0,443.3 L434.0,443.3 L432.0,443.2 L430.0,443.2 L428.0,443.2 L426.0,443.1 L424.0,443.1 L422.0,443.0 L420.0,443.0 L418.0,443.0 L416.0,442.9 L414.0,442.9 L412.0,442.8 L410.0,442.8 L408.0,442.8 L406.0,442.7 L404.0,442.7 L402.0,442.6 L400.0,442.6 L398.0,442.7 L396.0,442.8 L394.0,442.9 L392.0,443.0 L390.0,443.1 L388.0,443.2 L386.0,443.3 L384.0,443.4 L382.0,443.5 L380.0,443.6 L378.0,443.7 L376.0,443.8 L374.0,443.8 L372.0,443.9 L370.0,444.0 L368.0,444.1 L366.0,444.2 L364.0,444.3 L362.0,444.4 L360.0,444.5 L358.0,444.6 L356.0,444.7 L354.0,444.8 L352.0,444.9 L350.0,445.0 L348.0,445.1 L346.0,445.2 L344.0,445.2 L342.0,445.3 L340.0,445.4 L338.0,445.5 L336.0,445.6 L334.0,445.6 L332.0,445.7 L330.0,445.8 L328.0,445.9 L326.0,446.0 L324.0,446.0 L322.0,446.1 L320.0,446.2 L318.0,446.3 L316.0,446.4 L314.0,446.4 L312.0,446.5 L310.0,446.6 L308.0,446.7 L306.0,446.8 L304.0,446.8 L302.0,446.9 L300.0,447.0 L298.0,447.1 L296.0,447.2 L294.0,447.4 L292.0,447.5 L290.0,447.6 L288.0,447.7 L286.0,447.8 L284.0,448.0 L282.0,448.1 L280.0,448.2 L278.0,448.3 L276.0,448.4 L274.0,448.6 L272.0,448.7 L270.0,448.8 L268.0,448.9 L266.0,449.0 L264.0,449.2 L262.0,449.3 L260.0,449.4 L258.0,449.5 L256.0,449.6 L254.0,449.6 L252.0,449.7 L250.0,449.8 L248.0,449.9 L246.0,449.9 L244.0,450.0 L242.0,450.1 L240.0,450.2 L238.0,450.2 L236.0,450.3 L234.0,450.4 L232.0,450.5 L230.0,450.5 L228.0,450.6 L226.0,450.7 L224.0,450.8 L222.0,450.8 L220.0,450.9 L218.0,451.0 Z" fill="url(#purp)" />
<path d="M900.0,431.6 L902.0,431.6 L904.0,431.6 L906.0,431.6 L908.0,431.7 L910.0,431.7 L912.0,431.7 L914.0,431.7 L916.0,431.7 L918.0,431.7 L920.0,431.7 L922.0,431.7 L924.0,431.7 L926.0,431.7 L928.0,431.7 L930.0,431.7 L932.0,431.7 L934.0,431.7 L936.0,431.8 L938.0,431.8 L940.0,431.8 L942.0,431.8 L944.0,431.8 L946.0,431.8 L948.0,431.8 L950.0,431.8 L950.0,453.0 L948.0,453.0 L946.0,453.0 L944.0,453.0 L942.0,453.0 L940.0,453.0 L938.0,453.0 L936.0,453.0 L934.0,453.0 L932.0,453.0 L930.0,453.0 L928.0,453.0 L926.0,453.0 L924.0,453.0 L922.0,453.0 L920.0,453.0 L918.0,453.0 L916.0,453.0 L914.0,453.0 L912.0,453.0 L910.0,453.0 L908.0,453.0 L906.0,453.0 L904.0,453.0 L902.0,453.0 L900.0,453.0 Z" fill="#7676f2" />
<path d="M900.0,453.0 L902.0,453.0 L904.0,453.0 L906.0,453.0 L908.0,453.0 L910.0,453.0 L912.0,453.0 L914.0,453.0 L916.0,453.0 L918.0,453.0 L920.0,453.0 L922.0,453.0 L924.0,453.0 L926.0,453.0 L928.0,453.0 L930.0,453.0 L932.0,453.0 L934.0,453.0 L936.0,453.0 L938.0,453.0 L940.0,453.0 L942.0,453.0 L944.0,453.0 L946.0,453.0 L948.0,453.0 L950.0,453.0 L950.0,456.0 L948.0,456.0 L946.0,456.0 L944.0,456.0 L942.0,456.0 L940.0,456.0 L938.0,456.0 L936.0,456.0 L934.0,456.0 L932.0,456.0 L930.0,456.0 L928.0,456.0 L926.0,456.0 L924.0,456.0 L922.0,456.0 L920.0,456.0 L918.0,456.0 L916.0,456.0 L914.0,456.0 L912.0,456.0 L910.0,456.0 L908.0,456.0 L906.0,456.0 L904.0,456.0 L902.0,456.0 L900.0,456.0 Z" fill="#9a9af4" opacity="0.85"/>
<path d="M900.0,456.0 L902.0,456.0 L904.0,456.0 L906.0,456.0 L908.0,456.0 L910.0,456.0 L912.0,456.0 L914.0,456.0 L916.0,456.0 L918.0,456.0 L920.0,456.0 L922.0,456.0 L924.0,456.0 L926.0,456.0 L928.0,456.0 L930.0,456.0 L932.0,456.0 L934.0,456.0 L936.0,456.0 L938.0,456.0 L940.0,456.0 L942.0,456.0 L944.0,456.0 L946.0,456.0 L948.0,456.0 L950.0,456.0 L950.0,459.0 L948.0,459.0 L946.0,459.0 L944.0,459.0 L942.0,459.0 L940.0,459.0 L938.0,459.0 L936.0,459.0 L934.0,459.0 L932.0,459.0 L930.0,459.0 L928.0,459.0 L926.0,459.0 L924.0,459.0 L922.0,459.0 L920.0,459.0 L918.0,459.0 L916.0,459.0 L914.0,459.0 L912.0,459.0 L910.0,459.0 L908.0,459.0 L906.0,459.0 L904.0,459.0 L902.0,459.0 L900.0,459.0 Z" fill="#c4c4f8" opacity="0.8"/>
<path d="M900.0,459.0 L902.0,459.0 L904.0,459.0 L906.0,459.0 L908.0,459.0 L910.0,459.0 L912.0,459.0 L914.0,459.0 L916.0,459.0 L918.0,459.0 L920.0,459.0 L922.0,459.0 L924.0,459.0 L926.0,459.0 L928.0,459.0 L930.0,459.0 L932.0,459.0 L934.0,459.0 L936.0,459.0 L938.0,459.0 L940.0,459.0 L942.0,459.0 L944.0,459.0 L946.0,459.0 L948.0,459.0 L950.0,459.0 L950.0,462.0 L948.0,462.0 L946.0,462.0 L944.0,462.0 L942.0,462.0 L940.0,462.0 L938.0,462.0 L936.0,462.0 L934.0,462.0 L932.0,462.0 L930.0,462.0 L928.0,462.0 L926.0,462.0 L924.0,462.0 L922.0,462.0 L920.0,462.0 L918.0,462.0 L916.0,462.0 L914.0,462.0 L912.0,462.0 L910.0,462.0 L908.0,462.0 L906.0,462.0 L904.0,462.0 L902.0,462.0 L900.0,462.0 Z" fill="#e8e8fc" opacity="0.8"/>
<path d="M218.0,446.0 L220.0,445.9 L222.0,445.8 L224.0,445.8 L226.0,445.7 L228.0,445.6 L230.0,445.5 L232.0,445.5 L234.0,445.4 L236.0,445.3 L238.0,445.2 L240.0,445.2 L242.0,445.1 L244.0,445.0 L246.0,444.9 L248.0,444.9 L250.0,444.8 L252.0,444.7 L254.0,444.6 L256.0,444.6 L258.0,444.5 L260.0,444.4 L262.0,444.3 L264.0,444.2 L266.0,444.0 L268.0,443.9 L270.0,443.8 L272.0,443.7 L274.0,443.6 L276.0,443.4 L278.0,443.3 L280.0,443.2 L282.0,443.1 L284.0,443.0 L286.0,442.8 L288.0,442.7 L290.0,442.6 L292.0,442.5 L294.0,442.4 L296.0,442.2 L298.0,442.1 L300.0,442.0 L302.0,441.9 L304.0,441.8 L306.0,441.8 L308.0,441.7 L310.0,441.6 L312.0,441.5 L314.0,441.4 L316.0,441.4 L318.0,441.3 L320.0,441.2 L322.0,441.1 L324.0,441.0 L326.0,441.0 L328.0,440.9 L330.0,440.8 L332.0,440.7 L334.0,440.6 L336.0,440.6 L338.0,440.5 L340.0,440.4 L342.0,440.3 L344.0,440.2 L346.0,440.2 L348.0,440.1 L350.0,440.0 L352.0,439.9 L354.0,439.8 L356.0,439.7 L358.0,439.6 L360.0,439.5 L362.0,439.4 L364.0,439.3 L366.0,439.2 L368.0,439.1 L370.0,439.0 L372.0,438.9 L374.0,438.8 L376.0,438.8 L378.0,438.7 L380.0,438.6 L382.0,438.5 L384.0,438.4 L386.0,438.3 L388.0,438.2 L390.0,438.1 L392.0,438.0 L394.0,437.9 L396.0,437.8 L398.0,437.7 L400.0,437.6 L402.0,437.6 L404.0,437.7 L406.0,437.7 L408.0,437.8 L410.0,437.8 L412.0,437.8 L414.0,437.9 L416.0,437.9 L418.0,438.0 L420.0,438.0 L422.0,438.0 L424.0,438.1 L426.0,438.1 L428.0,438.2 L430.0,438.2 L432.0,438.2 L434.0,438.3 L436.0,438.3 L438.0,438.4 L440.0,438.4 L442.0,438.4 L444.0,438.5 L446.0,438.5 L448.0,438.6 L450.0,438.6 L452.0,438.6 L454.0,438.7 L456.0,438.7 L458.0,438.8 L460.0,438.8 L462.0,439.0 L464.0,439.3 L466.0,439.5 L468.0,439.8 L470.0,440.0 L472.0,440.3 L474.0,440.5 L476.0,440.8 L478.0,441.0 L480.0,441.3 L482.0,441.5 L484.0,441.8 L486.0,442.0 L488.0,442.3 L490.0,442.5 L492.0,442.4 L494.0,442.3 L496.0,442.1 L498.0,442.0 L500.0,441.9 L502.0,441.8 L504.0,441.7 L506.0,441.5 L508.0,441.4 L510.0,441.3 L512.0,441.0 L514.0,440.7 L516.0,440.4 L518.0,440.2 L520.0,439.9 L522.0,439.6 L524.0,439.3 L526.0,439.0 L528.0,438.7 L530.0,438.4 L532.0,438.1 L534.0,437.9 L536.0,437.6 L538.0,437.3 L540.0,437.0 L540.0,441.5 L538.0,441.8 L536.0,442.1 L534.0,442.4 L532.0,442.6 L530.0,442.9 L528.0,443.2 L526.0,443.5 L524.0,443.8 L522.0,444.1 L520.0,444.4 L518.0,444.7 L516.0,444.9 L514.0,445.2 L512.0,445.5 L510.0,445.8 L508.0,445.9 L506.0,446.0 L504.0,446.2 L502.0,446.3 L500.0,446.4 L498.0,446.5 L496.0,446.6 L494.0,446.8 L492.0,446.9 L490.0,447.0 L488.0,446.8 L486.0,446.5 L484.0,446.3 L482.0,446.0 L480.0,445.8 L478.0,445.5 L476.0,445.3 L474.0,445.0 L472.0,444.8 L470.0,444.5 L468.0,444.3 L466.0,444.0 L464.0,443.8 L462.0,443.5 L460.0,443.3 L458.0,443.3 L456.0,443.2 L454.0,443.2 L452.0,443.1 L450.0,443.1 L448.0,443.1 L446.0,443.0 L444.0,443.0 L442.0,442.9 L440.0,442.9 L438.0,442.9 L436.0,442.8 L434.0,442.8 L432.0,442.7 L430.0,442.7 L428.0,442.7 L426.0,442.6 L424.0,442.6 L422.0,442.5 L420.0,442.5 L418.0,442.5 L416.0,442.4 L414.0,442.4 L412.0,442.3 L410.0,442.3 L408.0,442.3 L406.0,442.2 L404.0,442.2 L402.0,442.1 L400.0,442.1 L398.0,442.2 L396.0,442.3 L394.0,442.4 L392.0,442.5 L390.0,442.6 L388.0,442.7 L386.0,442.8 L384.0,442.9 L382.0,443.0 L380.0,443.1 L378.0,443.2 L376.0,443.3 L374.0,443.3 L372.0,443.4 L370.0,443.5 L368.0,443.6 L366.0,443.7 L364.0,443.8 L362.0,443.9 L360.0,444.0 L358.0,444.1 L356.0,444.2 L354.0,444.3 L352.0,444.4 L350.0,444.5 L348.0,444.6 L346.0,444.7 L344.0,444.7 L342.0,444.8 L340.0,444.9 L338.0,445.0 L336.0,445.1 L334.0,445.1 L332.0,445.2 L330.0,445.3 L328.0,445.4 L326.0,445.5 L324.0,445.5 L322.0,445.6 L320.0,445.7 L318.0,445.8 L316.0,445.9 L314.0,445.9 L312.0,446.0 L310.0,446.1 L308.0,446.2 L306.0,446.3 L304.0,446.3 L302.0,446.4 L300.0,446.5 L298.0,446.6 L296.0,446.7 L294.0,446.9 L292.0,447.0 L290.0,447.1 L288.0,447.2 L286.0,447.3 L284.0,447.5 L282.0,447.6 L280.0,447.7 L278.0,447.8 L276.0,447.9 L274.0,448.1 L272.0,448.2 L270.0,448.3 L268.0,448.4 L266.0,448.5 L264.0,448.7 L262.0,448.8 L260.0,448.9 L258.0,449.0 L256.0,449.1 L254.0,449.1 L252.0,449.2 L250.0,449.3 L248.0,449.4 L246.0,449.4 L244.0,449.5 L242.0,449.6 L240.0,449.7 L238.0,449.7 L236.0,449.8 L234.0,449.9 L232.0,450.0 L230.0,450.0 L228.0,450.1 L226.0,450.2 L224.0,450.3 L222.0,450.3 L220.0,450.4 L218.0,450.5 Z" fill="#2a0aa8" opacity="0.75"/>
<path d="M640.0,451.8 L642.0,452.0 L644.0,452.2 L646.0,452.5 L648.0,452.7 L650.0,452.9 L652.0,453.1 L654.0,453.3 L656.0,453.5 L658.0,453.7 L660.0,453.9 L662.0,454.2 L664.0,454.4 L666.0,454.6 L668.0,454.8 L670.0,455.0 L672.0,455.1 L674.0,455.1 L676.0,455.2 L678.0,455.3 L680.0,455.3 L682.0,455.4 L684.0,455.5 L686.0,455.5 L688.0,455.6 L690.0,455.7 L692.0,455.7 L694.0,455.8 L696.0,455.9 L698.0,455.9 L700.0,456.0 L702.0,456.0 L704.0,456.1 L706.0,456.1 L708.0,456.2 L710.0,456.2 L712.0,456.3 L714.0,456.3 L716.0,456.3 L718.0,456.4 L720.0,456.4 L722.0,456.5 L724.0,456.5 L726.0,456.6 L728.0,456.6 L730.0,456.6 L732.0,456.7 L734.0,456.7 L736.0,456.8 L738.0,456.8 L740.0,456.9 L742.0,456.9 L744.0,457.0 L746.0,457.0 L748.0,457.0 L750.0,457.1 L752.0,457.1 L754.0,457.2 L756.0,457.2 L758.0,457.3 L760.0,457.3 L762.0,457.4 L764.0,457.4 L766.0,457.5 L768.0,457.5 L770.0,457.6 L772.0,457.7 L774.0,457.7 L776.0,457.8 L778.0,457.8 L780.0,457.9 L782.0,458.0 L784.0,458.0 L786.0,458.1 L788.0,458.1 L790.0,458.2 L792.0,458.3 L794.0,458.3 L796.0,458.4 L798.0,458.4 L800.0,458.5 L802.0,458.6 L804.0,458.7 L806.0,458.8 L808.0,458.8 L810.0,458.9 L812.0,459.0 L814.0,459.1 L816.0,459.2 L818.0,459.2 L820.0,459.3 L822.0,459.4 L824.0,459.5 L826.0,459.6 L828.0,459.7 L830.0,459.8 L832.0,459.8 L834.0,459.9 L836.0,460.0 L838.0,460.1 L840.0,460.2 L842.0,460.2 L844.0,460.3 L846.0,460.4 L848.0,460.5 L850.0,460.6 L852.0,460.7 L854.0,460.8 L856.0,460.8 L858.0,460.9 L860.0,461.0 L862.0,460.8 L864.0,460.6 L866.0,460.4 L868.0,460.3 L870.0,460.1 L872.0,459.9 L874.0,459.7 L876.0,459.5 L878.0,459.3 L880.0,459.1 L882.0,459.0 L884.0,458.8 L886.0,458.6 L888.0,458.4 L890.0,458.2 L892.0,458.0 L894.0,457.9 L896.0,457.7 L898.0,457.5 L900.0,457.3 L900.0,473.8 L898.0,474.0 L896.0,474.2 L894.0,474.4 L892.0,474.5 L890.0,474.7 L888.0,474.9 L886.0,475.1 L884.0,475.3 L882.0,475.5 L880.0,475.6 L878.0,475.8 L876.0,476.0 L874.0,476.2 L872.0,476.4 L870.0,476.6 L868.0,476.8 L866.0,476.9 L864.0,477.1 L862.0,477.3 L860.0,477.5 L858.0,477.4 L856.0,477.3 L854.0,477.2 L852.0,477.2 L850.0,477.1 L848.0,477.0 L846.0,476.9 L844.0,476.8 L842.0,476.8 L840.0,476.7 L838.0,476.6 L836.0,476.5 L834.0,476.4 L832.0,476.3 L830.0,476.2 L828.0,476.2 L826.0,476.1 L824.0,476.0 L822.0,475.9 L820.0,475.8 L818.0,475.8 L816.0,475.7 L814.0,475.6 L812.0,475.5 L810.0,475.4 L808.0,475.3 L806.0,475.2 L804.0,475.2 L802.0,475.1 L800.0,475.0 L798.0,474.9 L796.0,474.9 L794.0,474.8 L792.0,474.8 L790.0,474.7 L788.0,474.6 L786.0,474.6 L784.0,474.5 L782.0,474.5 L780.0,474.4 L778.0,474.3 L776.0,474.3 L774.0,474.2 L772.0,474.2 L770.0,474.1 L768.0,474.0 L766.0,474.0 L764.0,473.9 L762.0,473.9 L760.0,473.8 L758.0,473.8 L756.0,473.7 L754.0,473.7 L752.0,473.6 L750.0,473.6 L748.0,473.5 L746.0,473.5 L744.0,473.5 L742.0,473.4 L740.0,473.4 L738.0,473.3 L736.0,473.3 L734.0,473.2 L732.0,473.2 L730.0,473.1 L728.0,473.1 L726.0,473.1 L724.0,473.0 L722.0,473.0 L720.0,472.9 L718.0,472.9 L716.0,472.8 L714.0,472.8 L712.0,472.8 L710.0,472.7 L708.0,472.7 L706.0,472.6 L704.0,472.6 L702.0,472.5 L700.0,472.5 L698.0,472.4 L696.0,472.4 L694.0,472.3 L692.0,472.2 L690.0,472.2 L688.0,472.1 L686.0,472.0 L684.0,472.0 L682.0,471.9 L680.0,471.8 L678.0,471.8 L676.0,471.7 L674.0,471.6 L672.0,471.6 L670.0,471.5 L668.0,471.3 L666.0,471.1 L664.0,470.9 L662.0,470.7 L660.0,470.4 L658.0,470.2 L656.0,470.0 L654.0,469.8 L652.0,469.6 L650.0,469.4 L648.0,469.2 L646.0,469.0 L644.0,468.7 L642.0,468.5 L640.0,468.3 Z" fill="#3030c0" opacity="0.25"/>
<path d="M540.0,433.0 L542.0,433.6 L544.0,434.1 L546.0,434.6 L548.0,435.2 L550.0,435.8 L552.0,436.3 L554.0,436.9 L556.0,437.4 L558.0,437.9 L560.0,438.5 L562.0,439.0 L564.0,439.5 L566.0,440.0 L568.0,440.5 L570.0,441.0 L572.0,441.5 L574.0,442.0 L576.0,442.5 L578.0,443.0 L580.0,443.5 L582.0,444.0 L584.0,444.5 L586.0,445.0 L588.0,445.5 L590.0,446.0 L592.0,446.5 L594.0,447.0 L596.0,447.5 L598.0,448.0 L600.0,448.5 L602.0,449.1 L604.0,449.7 L606.0,450.3 L608.0,450.9 L610.0,451.5 L612.0,452.1 L614.0,452.7 L616.0,453.3 L618.0,453.9 L620.0,454.4 L622.0,455.0 L624.0,455.6 L626.0,456.2 L628.0,456.8 L630.0,457.4 L632.0,458.0 L634.0,458.6 L636.0,459.2 L638.0,459.6 L640.0,459.8 L642.0,460.0 L644.0,460.2 L646.0,460.5 L648.0,460.7 L650.0,460.9 L652.0,461.1 L654.0,461.3 L656.0,461.5 L658.0,461.7 L660.0,461.9 L662.0,462.2 L664.0,462.4 L666.0,462.6 L668.0,462.8 L670.0,463.0 L672.0,463.1 L674.0,463.1 L676.0,463.2 L678.0,463.3 L680.0,463.3 L682.0,463.4 L684.0,463.5 L686.0,463.5 L688.0,463.6 L690.0,463.7 L692.0,463.7 L694.0,463.8 L696.0,463.9 L698.0,463.9 L700.0,464.0 L702.0,464.0 L704.0,464.1 L706.0,464.1 L708.0,464.2 L710.0,464.2 L712.0,464.3 L714.0,464.3 L716.0,464.3 L718.0,464.4 L720.0,464.4 L722.0,464.5 L724.0,464.5 L726.0,464.6 L728.0,464.6 L730.0,464.6 L732.0,464.7 L734.0,464.7 L736.0,464.8 L738.0,464.8 L740.0,464.9 L742.0,464.9 L744.0,465.0 L746.0,465.0 L748.0,465.0 L750.0,465.1 L752.0,465.1 L754.0,465.2 L756.0,465.2 L758.0,465.3 L760.0,465.3 L762.0,465.4 L764.0,465.4 L766.0,465.5 L768.0,465.5 L770.0,465.6 L772.0,465.7 L774.0,465.7 L776.0,465.8 L778.0,465.8 L780.0,465.9 L782.0,466.0 L784.0,466.0 L786.0,466.1 L788.0,466.1 L790.0,466.2 L792.0,466.3 L794.0,466.3 L796.0,466.4 L798.0,466.4 L800.0,466.5 L802.0,466.6 L804.0,466.7 L806.0,466.8 L808.0,466.8 L810.0,466.9 L812.0,467.0 L814.0,467.1 L816.0,467.2 L818.0,467.2 L820.0,467.3 L822.0,467.4 L824.0,467.5 L826.0,467.6 L828.0,467.7 L830.0,467.8 L832.0,467.8 L834.0,467.9 L836.0,468.0 L838.0,468.1 L840.0,468.2 L842.0,468.2 L844.0,468.3 L846.0,468.4 L848.0,468.5 L850.0,468.6 L852.0,468.7 L854.0,468.8 L856.0,468.8 L858.0,468.9 L860.0,469.0 L862.0,468.8 L864.0,468.6 L866.0,468.4 L868.0,468.3 L870.0,468.1 L872.0,467.9 L874.0,467.7 L876.0,467.5 L878.0,467.3 L880.0,467.1 L882.0,467.0 L884.0,466.8 L886.0,466.6 L888.0,466.4 L890.0,466.2 L892.0,466.0 L894.0,465.9 L896.0,465.7 L898.0,465.5 L900.0,465.3 L900.0,473.8 L898.0,474.0 L896.0,474.2 L894.0,474.4 L892.0,474.5 L890.0,474.7 L888.0,474.9 L886.0,475.1 L884.0,475.3 L882.0,475.5 L880.0,475.6 L878.0,475.8 L876.0,476.0 L874.0,476.2 L872.0,476.4 L870.0,476.6 L868.0,476.8 L866.0,476.9 L864.0,477.1 L862.0,477.3 L860.0,477.5 L858.0,477.4 L856.0,477.3 L854.0,477.2 L852.0,477.2 L850.0,477.1 L848.0,477.0 L846.0,476.9 L844.0,476.8 L842.0,476.8 L840.0,476.7 L838.0,476.6 L836.0,476.5 L834.0,476.4 L832.0,476.3 L830.0,476.2 L828.0,476.2 L826.0,476.1 L824.0,476.0 L822.0,475.9 L820.0,475.8 L818.0,475.8 L816.0,475.7 L814.0,475.6 L812.0,475.5 L810.0,475.4 L808.0,475.3 L806.0,475.2 L804.0,475.2 L802.0,475.1 L800.0,475.0 L798.0,474.9 L796.0,474.9 L794.0,474.8 L792.0,474.8 L790.0,474.7 L788.0,474.6 L786.0,474.6 L784.0,474.5 L782.0,474.5 L780.0,474.4 L778.0,474.3 L776.0,474.3 L774.0,474.2 L772.0,474.2 L770.0,474.1 L768.0,474.0 L766.0,474.0 L764.0,473.9 L762.0,473.9 L760.0,473.8 L758.0,473.8 L756.0,473.7 L754.0,473.7 L752.0,473.6 L750.0,473.6 L748.0,473.5 L746.0,473.5 L744.0,473.5 L742.0,473.4 L740.0,473.4 L738.0,473.3 L736.0,473.3 L734.0,473.2 L732.0,473.2 L730.0,473.1 L728.0,473.1 L726.0,473.1 L724.0,473.0 L722.0,473.0 L720.0,472.9 L718.0,472.9 L716.0,472.8 L714.0,472.8 L712.0,472.8 L710.0,472.7 L708.0,472.7 L706.0,472.6 L704.0,472.6 L702.0,472.5 L700.0,472.5 L698.0,472.4 L696.0,472.4 L694.0,472.3 L692.0,472.2 L690.0,472.2 L688.0,472.1 L686.0,472.0 L684.0,472.0 L682.0,471.9 L680.0,471.8 L678.0,471.8 L676.0,471.7 L674.0,471.6 L672.0,471.6 L670.0,471.5 L668.0,471.3 L666.0,471.1 L664.0,470.9 L662.0,470.7 L660.0,470.4 L658.0,470.2 L656.0,470.0 L654.0,469.8 L652.0,469.6 L650.0,469.4 L648.0,469.2 L646.0,469.0 L644.0,468.7 L642.0,468.5 L640.0,468.3 L638.0,468.1 L636.0,467.7 L634.0,467.1 L632.0,466.5 L630.0,465.9 L628.0,465.3 L626.0,464.7 L624.0,464.1 L622.0,463.5 L620.0,462.9 L618.0,462.4 L616.0,461.8 L614.0,461.2 L612.0,460.6 L610.0,460.0 L608.0,459.4 L606.0,458.8 L604.0,458.2 L602.0,457.6 L600.0,457.0 L598.0,456.5 L596.0,456.0 L594.0,455.5 L592.0,455.0 L590.0,454.5 L588.0,454.0 L586.0,453.5 L584.0,453.0 L582.0,452.5 L580.0,452.0 L578.0,451.5 L576.0,451.0 L574.0,450.5 L572.0,450.0 L570.0,449.5 L568.0,449.0 L566.0,448.5 L564.0,448.0 L562.0,447.5 L560.0,447.0 L558.0,446.4 L556.0,445.9 L554.0,445.4 L552.0,444.8 L550.0,444.2 L548.0,443.7 L546.0,443.1 L544.0,442.6 L542.0,442.1 L540.0,441.5 Z" fill="#2020b0" opacity="0.35"/>
<path d="M540.0,438.0 L542.0,438.6 L544.0,439.1 L546.0,439.6 L548.0,440.2 L550.0,440.8 L552.0,441.3 L554.0,441.9 L556.0,442.4 L558.0,442.9 L560.0,443.5 L562.0,444.0 L564.0,444.5 L566.0,445.0 L568.0,445.5 L570.0,446.0 L572.0,446.5 L574.0,447.0 L576.0,447.5 L578.0,448.0 L580.0,448.5 L582.0,449.0 L584.0,449.5 L586.0,450.0 L588.0,450.5 L590.0,451.0 L592.0,451.5 L594.0,452.0 L596.0,452.5 L598.0,453.0 L600.0,453.5 L602.0,454.1 L604.0,454.7 L606.0,455.3 L608.0,455.9 L610.0,456.5 L612.0,457.1 L614.0,457.7 L616.0,458.3 L618.0,458.9 L620.0,459.4 L622.0,460.0 L624.0,460.6 L626.0,461.2 L628.0,461.8 L630.0,462.4 L632.0,463.0 L634.0,463.6 L636.0,464.2 L638.0,464.6 L640.0,464.8 L642.0,465.0 L644.0,465.2 L646.0,465.5 L648.0,465.7 L650.0,465.9 L652.0,466.1 L654.0,466.3 L656.0,466.5 L658.0,466.7 L660.0,466.9 L662.0,467.2 L664.0,467.4 L666.0,467.6 L668.0,467.8 L670.0,468.0 L672.0,468.1 L674.0,468.1 L676.0,468.2 L678.0,468.3 L680.0,468.3 L682.0,468.4 L684.0,468.5 L686.0,468.5 L688.0,468.6 L690.0,468.7 L692.0,468.7 L694.0,468.8 L696.0,468.9 L698.0,468.9 L700.0,469.0 L702.0,469.0 L704.0,469.1 L706.0,469.1 L708.0,469.2 L710.0,469.2 L712.0,469.3 L714.0,469.3 L716.0,469.3 L718.0,469.4 L720.0,469.4 L722.0,469.5 L724.0,469.5 L726.0,469.6 L728.0,469.6 L730.0,469.6 L732.0,469.7 L734.0,469.7 L736.0,469.8 L738.0,469.8 L740.0,469.9 L742.0,469.9 L744.0,470.0 L746.0,470.0 L748.0,470.0 L750.0,470.1 L752.0,470.1 L754.0,470.2 L756.0,470.2 L758.0,470.3 L760.0,470.3 L762.0,470.4 L764.0,470.4 L766.0,470.5 L768.0,470.5 L770.0,470.6 L772.0,470.7 L774.0,470.7 L776.0,470.8 L778.0,470.8 L780.0,470.9 L782.0,471.0 L784.0,471.0 L786.0,471.1 L788.0,471.1 L790.0,471.2 L792.0,471.3 L794.0,471.3 L796.0,471.4 L798.0,471.4 L800.0,471.5 L802.0,471.6 L804.0,471.7 L806.0,471.8 L808.0,471.8 L810.0,471.9 L812.0,472.0 L814.0,472.1 L816.0,472.2 L818.0,472.2 L820.0,472.3 L822.0,472.4 L824.0,472.5 L826.0,472.6 L828.0,472.7 L830.0,472.8 L832.0,472.8 L834.0,472.9 L836.0,473.0 L838.0,473.1 L840.0,473.2 L842.0,473.2 L844.0,473.3 L846.0,473.4 L848.0,473.5 L850.0,473.6 L852.0,473.7 L854.0,473.8 L856.0,473.8 L858.0,473.9 L860.0,474.0 L862.0,473.8 L864.0,473.6 L866.0,473.4 L868.0,473.3 L870.0,473.1 L872.0,472.9 L874.0,472.7 L876.0,472.5 L878.0,472.3 L880.0,472.1 L882.0,472.0 L884.0,471.8 L886.0,471.6 L888.0,471.4 L890.0,471.2 L892.0,471.0 L894.0,470.9 L896.0,470.7 L898.0,470.5 L900.0,470.3 L900.0,473.8 L898.0,474.0 L896.0,474.2 L894.0,474.4 L892.0,474.5 L890.0,474.7 L888.0,474.9 L886.0,475.1 L884.0,475.3 L882.0,475.5 L880.0,475.6 L878.0,475.8 L876.0,476.0 L874.0,476.2 L872.0,476.4 L870.0,476.6 L868.0,476.8 L866.0,476.9 L864.0,477.1 L862.0,477.3 L860.0,477.5 L858.0,477.4 L856.0,477.3 L854.0,477.2 L852.0,477.2 L850.0,477.1 L848.0,477.0 L846.0,476.9 L844.0,476.8 L842.0,476.8 L840.0,476.7 L838.0,476.6 L836.0,476.5 L834.0,476.4 L832.0,476.3 L830.0,476.2 L828.0,476.2 L826.0,476.1 L824.0,476.0 L822.0,475.9 L820.0,475.8 L818.0,475.8 L816.0,475.7 L814.0,475.6 L812.0,475.5 L810.0,475.4 L808.0,475.3 L806.0,475.2 L804.0,475.2 L802.0,475.1 L800.0,475.0 L798.0,474.9 L796.0,474.9 L794.0,474.8 L792.0,474.8 L790.0,474.7 L788.0,474.6 L786.0,474.6 L784.0,474.5 L782.0,474.5 L780.0,474.4 L778.0,474.3 L776.0,474.3 L774.0,474.2 L772.0,474.2 L770.0,474.1 L768.0,474.0 L766.0,474.0 L764.0,473.9 L762.0,473.9 L760.0,473.8 L758.0,473.8 L756.0,473.7 L754.0,473.7 L752.0,473.6 L750.0,473.6 L748.0,473.5 L746.0,473.5 L744.0,473.5 L742.0,473.4 L740.0,473.4 L738.0,473.3 L736.0,473.3 L734.0,473.2 L732.0,473.2 L730.0,473.1 L728.0,473.1 L726.0,473.1 L724.0,473.0 L722.0,473.0 L720.0,472.9 L718.0,472.9 L716.0,472.8 L714.0,472.8 L712.0,472.8 L710.0,472.7 L708.0,472.7 L706.0,472.6 L704.0,472.6 L702.0,472.5 L700.0,472.5 L698.0,472.4 L696.0,472.4 L694.0,472.3 L692.0,472.2 L690.0,472.2 L688.0,472.1 L686.0,472.0 L684.0,472.0 L682.0,471.9 L680.0,471.8 L678.0,471.8 L676.0,471.7 L674.0,471.6 L672.0,471.6 L670.0,471.5 L668.0,471.3 L666.0,471.1 L664.0,470.9 L662.0,470.7 L660.0,470.4 L658.0,470.2 L656.0,470.0 L654.0,469.8 L652.0,469.6 L650.0,469.4 L648.0,469.2 L646.0,469.0 L644.0,468.7 L642.0,468.5 L640.0,468.3 L638.0,468.1 L636.0,467.7 L634.0,467.1 L632.0,466.5 L630.0,465.9 L628.0,465.3 L626.0,464.7 L624.0,464.1 L622.0,463.5 L620.0,462.9 L618.0,462.4 L616.0,461.8 L614.0,461.2 L612.0,460.6 L610.0,460.0 L608.0,459.4 L606.0,458.8 L604.0,458.2 L602.0,457.6 L600.0,457.0 L598.0,456.5 L596.0,456.0 L594.0,455.5 L592.0,455.0 L590.0,454.5 L588.0,454.0 L586.0,453.5 L584.0,453.0 L582.0,452.5 L580.0,452.0 L578.0,451.5 L576.0,451.0 L574.0,450.5 L572.0,450.0 L570.0,449.5 L568.0,449.0 L566.0,448.5 L564.0,448.0 L562.0,447.5 L560.0,447.0 L558.0,446.4 L556.0,445.9 L554.0,445.4 L552.0,444.8 L550.0,444.2 L548.0,443.7 L546.0,443.1 L544.0,442.6 L542.0,442.1 L540.0,441.5 Z" fill="#1a10a0" opacity="0.75"/>
<path d="M218.0,450.0 L220.0,449.9 L222.0,449.8 L224.0,449.8 L226.0,449.7 L228.0,449.6 L230.0,449.5 L232.0,449.5 L234.0,449.4 L236.0,449.3 L238.0,449.2 L240.0,449.2 L242.0,449.1 L244.0,449.0 L246.0,448.9 L248.0,448.9 L250.0,448.8 L252.0,448.7 L254.0,448.6 L256.0,448.6 L258.0,448.5 L260.0,448.4 L262.0,448.3 L264.0,448.2 L266.0,448.0 L268.0,447.9 L270.0,447.8 L272.0,447.7 L274.0,447.6 L276.0,447.4 L278.0,447.3 L280.0,447.2 L282.0,447.1 L284.0,447.0 L286.0,446.8 L288.0,446.7 L290.0,446.6 L292.0,446.5 L294.0,446.4 L296.0,446.2 L298.0,446.1 L300.0,446.0 L302.0,445.9 L304.0,445.8 L306.0,445.8 L308.0,445.7 L310.0,445.6 L312.0,445.5 L314.0,445.4 L316.0,445.4 L318.0,445.3 L320.0,445.2 L322.0,445.1 L324.0,445.0 L326.0,445.0 L328.0,444.9 L330.0,444.8 L332.0,444.7 L334.0,444.6 L336.0,444.6 L338.0,444.5 L340.0,444.4 L342.0,444.3 L344.0,444.2 L346.0,444.2 L348.0,444.1 L350.0,444.0 L352.0,443.9 L354.0,443.8 L356.0,443.7 L358.0,443.6 L360.0,443.5 L362.0,443.4 L364.0,443.3 L366.0,443.2 L368.0,443.1 L370.0,443.0 L372.0,442.9 L374.0,442.8 L376.0,442.8 L378.0,442.7 L380.0,442.6 L382.0,442.5 L384.0,442.4 L386.0,442.3 L388.0,442.2 L390.0,442.1 L392.0,442.0 L394.0,441.9 L396.0,441.8 L398.0,441.7 L400.0,441.6 L402.0,441.6 L404.0,441.7 L406.0,441.7 L408.0,441.8 L410.0,441.8 L412.0,441.8 L414.0,441.9 L416.0,441.9 L418.0,442.0 L420.0,442.0 L422.0,442.0 L424.0,442.1 L426.0,442.1 L428.0,442.2 L430.0,442.2 L432.0,442.2 L434.0,442.3 L436.0,442.3 L438.0,442.4 L440.0,442.4 L442.0,442.4 L444.0,442.5 L446.0,442.5 L448.0,442.6 L450.0,442.6 L452.0,442.6 L454.0,442.7 L456.0,442.7 L458.0,442.8 L460.0,442.8 L462.0,443.0 L464.0,443.3 L466.0,443.5 L468.0,443.8 L470.0,444.0 L472.0,444.3 L474.0,444.5 L476.0,444.8 L478.0,445.0 L480.0,445.3 L482.0,445.5 L484.0,445.8 L486.0,446.0 L488.0,446.3 L490.0,446.5 L492.0,446.4 L494.0,446.3 L496.0,446.1 L498.0,446.0 L500.0,445.9 L502.0,445.8 L504.0,445.7 L506.0,445.5 L508.0,445.4 L510.0,445.3 L512.0,445.0 L514.0,444.7 L516.0,444.4 L518.0,444.2 L520.0,443.9 L522.0,443.6 L524.0,443.3 L526.0,443.0 L528.0,442.7 L530.0,442.4 L532.0,442.1 L534.0,441.9 L536.0,441.6 L538.0,441.3 L540.0,441.0 L542.0,441.6 L544.0,442.1 L546.0,442.6 L548.0,443.2 L550.0,443.8 L552.0,444.3 L554.0,444.9 L556.0,445.4 L558.0,445.9 L560.0,446.5 L562.0,447.0 L564.0,447.5 L566.0,448.0 L568.0,448.5 L570.0,449.0 L572.0,449.5 L574.0,450.0 L576.0,450.5 L578.0,451.0 L580.0,451.5 L582.0,452.0 L584.0,452.5 L586.0,453.0 L588.0,453.5 L590.0,454.0 L592.0,454.5 L594.0,455.0 L596.0,455.5 L598.0,456.0 L600.0,456.5 L602.0,457.1 L604.0,457.7 L606.0,458.3 L608.0,458.9 L610.0,459.5 L612.0,460.1 L614.0,460.7 L616.0,461.3 L618.0,461.9 L620.0,462.4 L622.0,463.0 L624.0,463.6 L626.0,464.2 L628.0,464.8 L630.0,465.4 L632.0,466.0 L634.0,466.6 L636.0,467.2 L638.0,467.6 L640.0,467.8 L642.0,468.0 L644.0,468.2 L646.0,468.5 L648.0,468.7 L650.0,468.9 L652.0,469.1 L654.0,469.3 L656.0,469.5 L658.0,469.7 L660.0,469.9 L662.0,470.2 L664.0,470.4 L666.0,470.6 L668.0,470.8 L670.0,471.0 L672.0,471.1 L674.0,471.1 L676.0,471.2 L678.0,471.3 L680.0,471.3 L682.0,471.4 L684.0,471.5 L686.0,471.5 L688.0,471.6 L690.0,471.7 L692.0,471.7 L694.0,471.8 L696.0,471.9 L698.0,471.9 L700.0,472.0 L702.0,472.0 L704.0,472.1 L706.0,472.1 L708.0,472.2 L710.0,472.2 L712.0,472.3 L714.0,472.3 L716.0,472.3 L718.0,472.4 L720.0,472.4 L722.0,472.5 L724.0,472.5 L726.0,472.6 L728.0,472.6 L730.0,472.6 L732.0,472.7 L734.0,472.7 L736.0,472.8 L738.0,472.8 L740.0,472.9 L742.0,472.9 L744.0,473.0 L746.0,473.0 L748.0,473.0 L750.0,473.1 L752.0,473.1 L754.0,473.2 L756.0,473.2 L758.0,473.3 L760.0,473.3 L762.0,473.4 L764.0,473.4 L766.0,473.5 L768.0,473.5 L770.0,473.6 L772.0,473.7 L774.0,473.7 L776.0,473.8 L778.0,473.8 L780.0,473.9 L782.0,474.0 L784.0,474.0 L786.0,474.1 L788.0,474.1 L790.0,474.2 L792.0,474.3 L794.0,474.3 L796.0,474.4 L798.0,474.4 L800.0,474.5 L802.0,474.6 L804.0,474.7 L806.0,474.8 L808.0,474.8 L810.0,474.9 L812.0,475.0 L814.0,475.1 L816.0,475.2 L818.0,475.2 L820.0,475.3 L822.0,475.4 L824.0,475.5 L826.0,475.6 L828.0,475.7 L830.0,475.8 L832.0,475.8 L834.0,475.9 L836.0,476.0 L838.0,476.1 L840.0,476.2 L842.0,476.2 L844.0,476.3 L846.0,476.4 L848.0,476.5 L850.0,476.6 L852.0,476.7 L854.0,476.8 L856.0,476.8 L858.0,476.9 L860.0,477.0 L862.0,476.8 L864.0,476.6 L866.0,476.4 L868.0,476.3 L870.0,476.1 L872.0,475.9 L874.0,475.7 L876.0,475.5 L878.0,475.3 L880.0,475.1 L882.0,475.0 L884.0,474.8 L886.0,474.6 L888.0,474.4 L890.0,474.2 L892.0,474.0 L894.0,473.9 L896.0,473.7 L898.0,473.5 L900.0,473.3 L900.0,492.0 L898.0,492.1 L896.0,492.3 L894.0,492.4 L892.0,492.6 L890.0,492.8 L888.0,492.9 L886.0,493.1 L884.0,493.2 L882.0,493.4 L880.0,493.5 L878.0,493.6 L876.0,493.8 L874.0,493.9 L872.0,494.1 L870.0,494.2 L868.0,494.4 L866.0,494.6 L864.0,494.7 L862.0,494.9 L860.0,495.0 L858.0,494.9 L856.0,494.8 L854.0,494.7 L852.0,494.6 L850.0,494.4 L848.0,494.3 L846.0,494.2 L844.0,494.1 L842.0,494.0 L840.0,493.9 L838.0,493.8 L836.0,493.7 L834.0,493.6 L832.0,493.4 L830.0,493.3 L828.0,493.2 L826.0,493.1 L824.0,493.0 L822.0,492.9 L820.0,492.9 L818.0,492.8 L816.0,492.8 L814.0,492.7 L812.0,492.6 L810.0,492.6 L808.0,492.5 L806.0,492.4 L804.0,492.4 L802.0,492.3 L800.0,492.2 L798.0,492.2 L796.0,492.1 L794.0,492.1 L792.0,492.0 L790.0,491.9 L788.0,491.9 L786.0,491.8 L784.0,491.8 L782.0,491.7 L780.0,491.6 L778.0,491.6 L776.0,491.5 L774.0,491.4 L772.0,491.4 L770.0,491.3 L768.0,491.2 L766.0,491.2 L764.0,491.1 L762.0,491.1 L760.0,491.0 L758.0,491.0 L756.0,491.1 L754.0,491.1 L752.0,491.2 L750.0,491.2 L748.0,491.2 L746.0,491.3 L744.0,491.3 L742.0,491.4 L740.0,491.4 L738.0,491.4 L736.0,491.5 L734.0,491.5 L732.0,491.6 L730.0,491.6 L728.0,491.7 L726.0,491.7 L724.0,491.7 L722.0,491.8 L720.0,491.8 L718.0,491.9 L716.0,491.9 L714.0,491.9 L712.0,492.0 L710.0,491.8 L708.0,491.5 L706.0,491.1 L704.0,490.7 L702.0,490.4 L700.0,490.0 L698.0,489.8 L696.0,489.7 L694.0,489.5 L692.0,489.3 L690.0,489.1 L688.0,489.0 L686.0,488.8 L684.0,488.6 L682.0,488.4 L680.0,488.3 L678.0,488.1 L676.0,487.9 L674.0,487.7 L672.0,487.6 L670.0,487.4 L668.0,487.2 L666.0,487.0 L664.0,486.9 L662.0,486.7 L660.0,486.5 L658.0,486.3 L656.0,486.2 L654.0,486.0 L652.0,485.5 L650.0,485.0 L648.0,484.4 L646.0,483.9 L644.0,483.4 L642.0,482.9 L640.0,482.4 L638.0,481.9 L636.0,481.3 L634.0,480.8 L632.0,480.3 L630.0,479.8 L628.0,479.3 L626.0,478.7 L624.0,478.2 L622.0,477.7 L620.0,477.2 L618.0,476.7 L616.0,476.1 L614.0,475.6 L612.0,475.1 L610.0,474.6 L608.0,474.1 L606.0,473.6 L604.0,473.0 L602.0,472.5 L600.0,472.0 L598.0,471.6 L596.0,471.1 L594.0,470.6 L592.0,470.2 L590.0,469.8 L588.0,469.3 L586.0,468.9 L584.0,468.4 L582.0,467.9 L580.0,467.5 L578.0,467.1 L576.0,466.6 L574.0,466.1 L572.0,465.7 L570.0,465.2 L568.0,464.8 L566.0,464.4 L564.0,463.9 L562.0,463.4 L560.0,463.0 L558.0,462.9 L556.0,462.8 L554.0,462.8 L552.0,462.7 L550.0,462.6 L548.0,462.6 L546.0,462.5 L544.0,462.4 L542.0,462.3 L540.0,462.2 L538.0,462.2 L536.0,462.1 L534.0,462.0 L532.0,461.9 L530.0,461.9 L528.0,461.8 L526.0,461.7 L524.0,461.7 L522.0,461.6 L520.0,461.5 L518.0,461.7 L516.0,461.8 L514.0,461.9 L512.0,462.1 L510.0,462.2 L508.0,462.4 L506.0,462.6 L504.0,462.7 L502.0,462.8 L500.0,463.0 L498.0,463.1 L496.0,463.1 L494.0,463.1 L492.0,463.2 L490.0,463.2 L488.0,463.3 L486.0,463.4 L484.0,463.4 L482.0,463.4 L480.0,463.5 L478.0,463.4 L476.0,463.3 L474.0,463.2 L472.0,463.1 L470.0,463.0 L468.0,462.9 L466.0,462.9 L464.0,462.8 L462.0,462.7 L460.0,462.6 L458.0,462.5 L456.0,462.4 L454.0,462.3 L452.0,462.2 L450.0,462.1 L448.0,462.0 L446.0,461.9 L444.0,461.8 L442.0,461.7 L440.0,461.6 L438.0,461.6 L436.0,461.5 L434.0,461.4 L432.0,461.3 L430.0,461.2 L428.0,461.1 L426.0,461.0 L424.0,460.9 L422.0,460.8 L420.0,460.8 L418.0,460.7 L416.0,460.6 L414.0,460.5 L412.0,460.5 L410.0,460.4 L408.0,460.3 L406.0,460.2 L404.0,460.2 L402.0,460.1 L400.0,460.0 L398.0,460.1 L396.0,460.2 L394.0,460.2 L392.0,460.3 L390.0,460.4 L388.0,460.5 L386.0,460.6 L384.0,460.6 L382.0,460.7 L380.0,460.8 L378.0,460.9 L376.0,461.0 L374.0,461.0 L372.0,461.1 L370.0,461.2 L368.0,461.3 L366.0,461.4 L364.0,461.4 L362.0,461.5 L360.0,461.6 L358.0,461.7 L356.0,461.8 L354.0,461.8 L352.0,461.9 L350.0,462.0 L348.0,462.2 L346.0,462.3 L344.0,462.5 L342.0,462.6 L340.0,462.8 L338.0,463.0 L336.0,463.1 L334.0,463.3 L332.0,463.4 L330.0,463.6 L328.0,463.8 L326.0,463.9 L324.0,464.1 L322.0,464.2 L320.0,464.4 L318.0,464.6 L316.0,464.7 L314.0,464.9 L312.0,465.0 L310.0,465.2 L308.0,465.4 L306.0,465.5 L304.0,465.7 L302.0,465.8 L300.0,466.0 L298.0,466.1 L296.0,466.3 L294.0,466.4 L292.0,466.5 L290.0,466.7 L288.0,466.8 L286.0,467.0 L284.0,467.1 L282.0,467.2 L280.0,467.4 L278.0,467.5 L276.0,467.6 L274.0,467.8 L272.0,467.9 L270.0,468.0 L268.0,468.2 L266.0,468.3 L264.0,468.5 L262.0,468.6 L260.0,468.7 L258.0,468.9 L256.0,469.0 L254.0,469.1 L252.0,469.2 L250.0,469.3 L248.0,469.4 L246.0,469.5 L244.0,469.6 L242.0,469.7 L240.0,469.8 L238.0,469.9 L236.0,470.1 L234.0,470.2 L232.0,470.3 L230.0,470.4 L228.0,470.5 L226.0,470.6 L224.0,470.7 L222.0,470.8 L220.0,470.9 L218.0,471.0 Z" fill="#ff3c00" />
<path d="M218.0,471.0 L220.0,470.9 L222.0,470.8 L224.0,470.7 L226.0,470.6 L228.0,470.5 L230.0,470.4 L232.0,470.3 L234.0,470.2 L236.0,470.1 L238.0,469.9 L240.0,469.8 L242.0,469.7 L244.0,469.6 L246.0,469.5 L248.0,469.4 L250.0,469.3 L252.0,469.2 L254.0,469.1 L256.0,469.0 L258.0,468.9 L260.0,468.7 L262.0,468.6 L264.0,468.5 L266.0,468.3 L268.0,468.2 L270.0,468.0 L272.0,467.9 L274.0,467.8 L276.0,467.6 L278.0,467.5 L280.0,467.4 L282.0,467.2 L284.0,467.1 L286.0,467.0 L288.0,466.8 L290.0,466.7 L292.0,466.5 L294.0,466.4 L296.0,466.3 L298.0,466.1 L300.0,466.0 L302.0,465.8 L304.0,465.7 L306.0,465.5 L308.0,465.4 L310.0,465.2 L312.0,465.0 L314.0,464.9 L316.0,464.7 L318.0,464.6 L320.0,464.4 L322.0,464.2 L324.0,464.1 L326.0,463.9 L328.0,463.8 L330.0,463.6 L332.0,463.4 L334.0,463.3 L336.0,463.1 L338.0,463.0 L340.0,462.8 L342.0,462.6 L344.0,462.5 L346.0,462.3 L348.0,462.2 L350.0,462.0 L352.0,461.9 L354.0,461.8 L356.0,461.8 L358.0,461.7 L360.0,461.6 L362.0,461.5 L364.0,461.4 L366.0,461.4 L368.0,461.3 L370.0,461.2 L372.0,461.1 L374.0,461.0 L376.0,461.0 L378.0,460.9 L380.0,460.8 L382.0,460.7 L384.0,460.6 L386.0,460.6 L388.0,460.5 L390.0,460.4 L392.0,460.3 L394.0,460.2 L396.0,460.2 L398.0,460.1 L400.0,460.0 L402.0,460.1 L404.0,460.2 L406.0,460.2 L408.0,460.3 L410.0,460.4 L412.0,460.5 L414.0,460.5 L416.0,460.6 L418.0,460.7 L420.0,460.8 L422.0,460.8 L424.0,460.9 L426.0,461.0 L428.0,461.1 L430.0,461.2 L432.0,461.3 L434.0,461.4 L436.0,461.5 L438.0,461.6 L440.0,461.6 L442.0,461.7 L444.0,461.8 L446.0,461.9 L448.0,462.0 L450.0,462.1 L452.0,462.2 L454.0,462.3 L456.0,462.4 L458.0,462.5 L460.0,462.6 L462.0,462.7 L464.0,462.8 L466.0,462.9 L468.0,462.9 L470.0,463.0 L472.0,463.1 L474.0,463.2 L476.0,463.3 L478.0,463.4 L480.0,463.5 L482.0,463.4 L484.0,463.4 L486.0,463.4 L488.0,463.3 L490.0,463.2 L492.0,463.2 L494.0,463.1 L496.0,463.1 L498.0,463.1 L500.0,463.0 L502.0,462.8 L504.0,462.7 L506.0,462.6 L508.0,462.4 L510.0,462.2 L512.0,462.1 L514.0,461.9 L516.0,461.8 L518.0,461.7 L520.0,461.5 L522.0,461.6 L524.0,461.7 L526.0,461.7 L528.0,461.8 L530.0,461.9 L532.0,461.9 L534.0,462.0 L536.0,462.1 L538.0,462.2 L540.0,462.2 L542.0,462.3 L544.0,462.4 L546.0,462.5 L548.0,462.6 L550.0,462.6 L552.0,462.7 L554.0,462.8 L556.0,462.8 L558.0,462.9 L560.0,463.0 L562.0,463.4 L564.0,463.9 L566.0,464.4 L568.0,464.8 L570.0,465.2 L572.0,465.7 L574.0,466.1 L576.0,466.6 L578.0,467.1 L580.0,467.5 L582.0,467.9 L584.0,468.4 L586.0,468.9 L588.0,469.3 L590.0,469.8 L592.0,470.2 L594.0,470.6 L596.0,471.1 L598.0,471.6 L600.0,472.0 L602.0,472.5 L604.0,473.0 L606.0,473.6 L608.0,474.1 L610.0,474.6 L612.0,475.1 L614.0,475.6 L616.0,476.1 L618.0,476.7 L620.0,477.2 L622.0,477.7 L624.0,478.2 L626.0,478.7 L628.0,479.3 L630.0,479.8 L632.0,480.3 L634.0,480.8 L636.0,481.3 L638.0,481.9 L640.0,482.4 L642.0,482.9 L644.0,483.4 L646.0,483.9 L648.0,484.4 L650.0,485.0 L652.0,485.5 L654.0,486.0 L656.0,486.2 L658.0,486.3 L660.0,486.5 L662.0,486.7 L664.0,486.9 L666.0,487.0 L668.0,487.2 L670.0,487.4 L672.0,487.6 L674.0,487.7 L676.0,487.9 L678.0,488.1 L680.0,488.3 L682.0,488.4 L684.0,488.6 L686.0,488.8 L688.0,489.0 L690.0,489.1 L692.0,489.3 L694.0,489.5 L696.0,489.7 L698.0,489.8 L700.0,490.0 L702.0,490.4 L704.0,490.7 L706.0,491.1 L708.0,491.5 L710.0,491.8 L712.0,492.0 L714.0,491.9 L716.0,491.9 L718.0,491.9 L720.0,491.8 L722.0,491.8 L724.0,491.7 L726.0,491.7 L728.0,491.7 L730.0,491.6 L732.0,491.6 L734.0,491.5 L736.0,491.5 L738.0,491.4 L740.0,491.4 L742.0,491.4 L744.0,491.3 L746.0,491.3 L748.0,491.2 L750.0,491.2 L752.0,491.2 L754.0,491.1 L756.0,491.1 L758.0,491.0 L760.0,491.0 L762.0,491.1 L764.0,491.1 L766.0,491.2 L768.0,491.2 L770.0,491.3 L772.0,491.4 L774.0,491.4 L776.0,491.5 L778.0,491.6 L780.0,491.6 L782.0,491.7 L784.0,491.8 L786.0,491.8 L788.0,491.9 L790.0,491.9 L792.0,492.0 L794.0,492.1 L796.0,492.1 L798.0,492.2 L800.0,492.2 L802.0,492.3 L804.0,492.4 L806.0,492.4 L808.0,492.5 L810.0,492.6 L812.0,492.6 L814.0,492.7 L816.0,492.8 L818.0,492.8 L820.0,492.9 L822.0,492.9 L824.0,493.0 L826.0,493.1 L828.0,493.2 L830.0,493.3 L832.0,493.4 L834.0,493.6 L836.0,493.7 L838.0,493.8 L840.0,493.9 L842.0,494.0 L844.0,494.1 L846.0,494.2 L848.0,494.3 L850.0,494.4 L852.0,494.6 L854.0,494.7 L856.0,494.8 L858.0,494.9 L860.0,495.0 L862.0,494.9 L864.0,494.7 L866.0,494.6 L868.0,494.4 L870.0,494.2 L872.0,494.1 L874.0,493.9 L876.0,493.8 L878.0,493.6 L880.0,493.5 L882.0,493.4 L884.0,493.2 L886.0,493.1 L888.0,492.9 L890.0,492.8 L892.0,492.6 L894.0,492.4 L896.0,492.3 L898.0,492.1 L900.0,492.0 L900.0,494.2 L898.0,494.3 L896.0,494.5 L894.0,494.6 L892.0,494.8 L890.0,494.9 L888.0,495.1 L886.0,495.2 L884.0,495.4 L882.0,495.6 L880.0,495.7 L878.0,495.8 L876.0,496.0 L874.0,496.1 L872.0,496.3 L870.0,496.4 L868.0,496.6 L866.0,496.8 L864.0,496.9 L862.0,497.1 L860.0,497.2 L858.0,497.1 L856.0,497.0 L854.0,496.9 L852.0,496.8 L850.0,496.6 L848.0,496.5 L846.0,496.4 L844.0,496.3 L842.0,496.2 L840.0,496.1 L838.0,496.0 L836.0,495.9 L834.0,495.8 L832.0,495.6 L830.0,495.5 L828.0,495.4 L826.0,495.3 L824.0,495.2 L822.0,495.1 L820.0,495.1 L818.0,495.0 L816.0,494.9 L814.0,494.9 L812.0,494.8 L810.0,494.8 L808.0,494.7 L806.0,494.6 L804.0,494.6 L802.0,494.5 L800.0,494.4 L798.0,494.4 L796.0,494.3 L794.0,494.3 L792.0,494.2 L790.0,494.1 L788.0,494.1 L786.0,494.0 L784.0,493.9 L782.0,493.9 L780.0,493.8 L778.0,493.8 L776.0,493.7 L774.0,493.6 L772.0,493.6 L770.0,493.5 L768.0,493.4 L766.0,493.4 L764.0,493.3 L762.0,493.3 L760.0,493.2 L758.0,493.2 L756.0,493.3 L754.0,493.3 L752.0,493.4 L750.0,493.4 L748.0,493.4 L746.0,493.5 L744.0,493.5 L742.0,493.6 L740.0,493.6 L738.0,493.6 L736.0,493.7 L734.0,493.7 L732.0,493.8 L730.0,493.8 L728.0,493.9 L726.0,493.9 L724.0,493.9 L722.0,494.0 L720.0,494.0 L718.0,494.1 L716.0,494.1 L714.0,494.1 L712.0,494.2 L710.0,494.0 L708.0,493.7 L706.0,493.3 L704.0,492.9 L702.0,492.6 L700.0,492.2 L698.0,492.0 L696.0,491.9 L694.0,491.7 L692.0,491.5 L690.0,491.3 L688.0,491.2 L686.0,491.0 L684.0,490.8 L682.0,490.6 L680.0,490.5 L678.0,490.3 L676.0,490.1 L674.0,489.9 L672.0,489.8 L670.0,489.6 L668.0,489.4 L666.0,489.2 L664.0,489.1 L662.0,488.9 L660.0,488.7 L658.0,488.5 L656.0,488.4 L654.0,488.2 L652.0,487.7 L650.0,487.2 L648.0,486.6 L646.0,486.1 L644.0,485.6 L642.0,485.1 L640.0,484.6 L638.0,484.1 L636.0,483.5 L634.0,483.0 L632.0,482.5 L630.0,482.0 L628.0,481.5 L626.0,480.9 L624.0,480.4 L622.0,479.9 L620.0,479.4 L618.0,478.9 L616.0,478.3 L614.0,477.8 L612.0,477.3 L610.0,476.8 L608.0,476.3 L606.0,475.8 L604.0,475.2 L602.0,474.7 L600.0,474.2 L598.0,473.8 L596.0,473.3 L594.0,472.8 L592.0,472.4 L590.0,471.9 L588.0,471.5 L586.0,471.1 L584.0,470.6 L582.0,470.1 L580.0,469.7 L578.0,469.2 L576.0,468.8 L574.0,468.3 L572.0,467.9 L570.0,467.4 L568.0,467.0 L566.0,466.6 L564.0,466.1 L562.0,465.6 L560.0,465.2 L558.0,465.1 L556.0,465.0 L554.0,464.9 L552.0,464.8 L550.0,464.7 L548.0,464.6 L546.0,464.5 L544.0,464.4 L542.0,464.3 L540.0,464.2 L538.0,464.2 L536.0,464.1 L534.0,464.0 L532.0,463.9 L530.0,463.8 L528.0,463.7 L526.0,463.6 L524.0,463.5 L522.0,463.4 L520.0,463.3 L518.0,463.4 L516.0,463.6 L514.0,463.7 L512.0,463.8 L510.0,463.9 L508.0,464.1 L506.0,464.2 L504.0,464.3 L502.0,464.5 L500.0,464.6 L498.0,464.7 L496.0,464.7 L494.0,464.8 L492.0,464.8 L490.0,464.9 L488.0,464.9 L486.0,465.0 L484.0,465.0 L482.0,465.1 L480.0,465.1 L478.0,465.0 L476.0,464.9 L474.0,464.8 L472.0,464.7 L470.0,464.6 L468.0,464.5 L466.0,464.5 L464.0,464.4 L462.0,464.3 L460.0,464.2 L458.0,464.1 L456.0,464.0 L454.0,463.9 L452.0,463.8 L450.0,463.7 L448.0,463.6 L446.0,463.5 L444.0,463.4 L442.0,463.3 L440.0,463.2 L438.0,463.2 L436.0,463.1 L434.0,463.0 L432.0,462.9 L430.0,462.8 L428.0,462.7 L426.0,462.6 L424.0,462.5 L422.0,462.4 L420.0,462.4 L418.0,462.3 L416.0,462.2 L414.0,462.1 L412.0,462.1 L410.0,462.0 L408.0,461.9 L406.0,461.8 L404.0,461.8 L402.0,461.7 L400.0,461.6 L398.0,461.7 L396.0,461.8 L394.0,461.8 L392.0,461.9 L390.0,462.0 L388.0,462.1 L386.0,462.2 L384.0,462.2 L382.0,462.3 L380.0,462.4 L378.0,462.5 L376.0,462.6 L374.0,462.6 L372.0,462.7 L370.0,462.8 L368.0,462.9 L366.0,463.0 L364.0,463.0 L362.0,463.1 L360.0,463.2 L358.0,463.3 L356.0,463.4 L354.0,463.4 L352.0,463.5 L350.0,463.6 L348.0,463.8 L346.0,463.9 L344.0,464.1 L342.0,464.2 L340.0,464.4 L338.0,464.6 L336.0,464.7 L334.0,464.9 L332.0,465.0 L330.0,465.2 L328.0,465.4 L326.0,465.5 L324.0,465.7 L322.0,465.8 L320.0,466.0 L318.0,466.2 L316.0,466.3 L314.0,466.5 L312.0,466.6 L310.0,466.8 L308.0,467.0 L306.0,467.1 L304.0,467.3 L302.0,467.4 L300.0,467.6 L298.0,467.7 L296.0,467.9 L294.0,468.0 L292.0,468.1 L290.0,468.3 L288.0,468.4 L286.0,468.6 L284.0,468.7 L282.0,468.8 L280.0,469.0 L278.0,469.1 L276.0,469.2 L274.0,469.4 L272.0,469.5 L270.0,469.6 L268.0,469.8 L266.0,469.9 L264.0,470.1 L262.0,470.2 L260.0,470.3 L258.0,470.5 L256.0,470.6 L254.0,470.7 L252.0,470.8 L250.0,470.9 L248.0,471.0 L246.0,471.1 L244.0,471.2 L242.0,471.3 L240.0,471.4 L238.0,471.5 L236.0,471.7 L234.0,471.8 L232.0,471.9 L230.0,472.0 L228.0,472.1 L226.0,472.2 L224.0,472.3 L222.0,472.4 L220.0,472.5 L218.0,472.6 Z" fill="#ff4010" opacity="0.92"/>
<path d="M218.0,472.6 L220.0,472.5 L222.0,472.4 L224.0,472.3 L226.0,472.2 L228.0,472.1 L230.0,472.0 L232.0,471.9 L234.0,471.8 L236.0,471.7 L238.0,471.5 L240.0,471.4 L242.0,471.3 L244.0,471.2 L246.0,471.1 L248.0,471.0 L250.0,470.9 L252.0,470.8 L254.0,470.7 L256.0,470.6 L258.0,470.5 L260.0,470.3 L262.0,470.2 L264.0,470.1 L266.0,469.9 L268.0,469.8 L270.0,469.6 L272.0,469.5 L274.0,469.4 L276.0,469.2 L278.0,469.1 L280.0,469.0 L282.0,468.8 L284.0,468.7 L286.0,468.6 L288.0,468.4 L290.0,468.3 L292.0,468.1 L294.0,468.0 L296.0,467.9 L298.0,467.7 L300.0,467.6 L302.0,467.4 L304.0,467.3 L306.0,467.1 L308.0,467.0 L310.0,466.8 L312.0,466.6 L314.0,466.5 L316.0,466.3 L318.0,466.2 L320.0,466.0 L322.0,465.8 L324.0,465.7 L326.0,465.5 L328.0,465.4 L330.0,465.2 L332.0,465.0 L334.0,464.9 L336.0,464.7 L338.0,464.6 L340.0,464.4 L342.0,464.2 L344.0,464.1 L346.0,463.9 L348.0,463.8 L350.0,463.6 L352.0,463.5 L354.0,463.4 L356.0,463.4 L358.0,463.3 L360.0,463.2 L362.0,463.1 L364.0,463.0 L366.0,463.0 L368.0,462.9 L370.0,462.8 L372.0,462.7 L374.0,462.6 L376.0,462.6 L378.0,462.5 L380.0,462.4 L382.0,462.3 L384.0,462.2 L386.0,462.2 L388.0,462.1 L390.0,462.0 L392.0,461.9 L394.0,461.8 L396.0,461.8 L398.0,461.7 L400.0,461.6 L402.0,461.7 L404.0,461.8 L406.0,461.8 L408.0,461.9 L410.0,462.0 L412.0,462.1 L414.0,462.1 L416.0,462.2 L418.0,462.3 L420.0,462.4 L422.0,462.4 L424.0,462.5 L426.0,462.6 L428.0,462.7 L430.0,462.8 L432.0,462.9 L434.0,463.0 L436.0,463.1 L438.0,463.2 L440.0,463.2 L442.0,463.3 L444.0,463.4 L446.0,463.5 L448.0,463.6 L450.0,463.7 L452.0,463.8 L454.0,463.9 L456.0,464.0 L458.0,464.1 L460.0,464.2 L462.0,464.3 L464.0,464.4 L466.0,464.5 L468.0,464.5 L470.0,464.6 L472.0,464.7 L474.0,464.8 L476.0,464.9 L478.0,465.0 L480.0,465.1 L482.0,465.1 L484.0,465.0 L486.0,465.0 L488.0,464.9 L490.0,464.9 L492.0,464.8 L494.0,464.8 L496.0,464.7 L498.0,464.7 L500.0,464.6 L502.0,464.5 L504.0,464.3 L506.0,464.2 L508.0,464.1 L510.0,463.9 L512.0,463.8 L514.0,463.7 L516.0,463.6 L518.0,463.4 L520.0,463.3 L522.0,463.4 L524.0,463.5 L526.0,463.6 L528.0,463.7 L530.0,463.8 L532.0,463.9 L534.0,464.0 L536.0,464.1 L538.0,464.2 L540.0,464.2 L542.0,464.3 L544.0,464.4 L546.0,464.5 L548.0,464.6 L550.0,464.7 L552.0,464.8 L554.0,464.9 L556.0,465.0 L558.0,465.1 L560.0,465.2 L562.0,465.6 L564.0,466.1 L566.0,466.6 L568.0,467.0 L570.0,467.4 L572.0,467.9 L574.0,468.3 L576.0,468.8 L578.0,469.2 L580.0,469.7 L582.0,470.1 L584.0,470.6 L586.0,471.1 L588.0,471.5 L590.0,471.9 L592.0,472.4 L594.0,472.8 L596.0,473.3 L598.0,473.8 L600.0,474.2 L602.0,474.7 L604.0,475.2 L606.0,475.8 L608.0,476.3 L610.0,476.8 L612.0,477.3 L614.0,477.8 L616.0,478.3 L618.0,478.9 L620.0,479.4 L622.0,479.9 L624.0,480.4 L626.0,480.9 L628.0,481.5 L630.0,482.0 L632.0,482.5 L634.0,483.0 L636.0,483.5 L638.0,484.1 L640.0,484.6 L642.0,485.1 L644.0,485.6 L646.0,486.1 L648.0,486.6 L650.0,487.2 L652.0,487.7 L654.0,488.2 L656.0,488.4 L658.0,488.5 L660.0,488.7 L662.0,488.9 L664.0,489.1 L666.0,489.2 L668.0,489.4 L670.0,489.6 L672.0,489.8 L674.0,489.9 L676.0,490.1 L678.0,490.3 L680.0,490.5 L682.0,490.6 L684.0,490.8 L686.0,491.0 L688.0,491.2 L690.0,491.3 L692.0,491.5 L694.0,491.7 L696.0,491.9 L698.0,492.0 L700.0,492.2 L702.0,492.6 L704.0,492.9 L706.0,493.3 L708.0,493.7 L710.0,494.0 L712.0,494.2 L714.0,494.1 L716.0,494.1 L718.0,494.1 L720.0,494.0 L722.0,494.0 L724.0,493.9 L726.0,493.9 L728.0,493.9 L730.0,493.8 L732.0,493.8 L734.0,493.7 L736.0,493.7 L738.0,493.6 L740.0,493.6 L742.0,493.6 L744.0,493.5 L746.0,493.5 L748.0,493.4 L750.0,493.4 L752.0,493.4 L754.0,493.3 L756.0,493.3 L758.0,493.2 L760.0,493.2 L762.0,493.3 L764.0,493.3 L766.0,493.4 L768.0,493.4 L770.0,493.5 L772.0,493.6 L774.0,493.6 L776.0,493.7 L778.0,493.8 L780.0,493.8 L782.0,493.9 L784.0,493.9 L786.0,494.0 L788.0,494.1 L790.0,494.1 L792.0,494.2 L794.0,494.3 L796.0,494.3 L798.0,494.4 L800.0,494.4 L802.0,494.5 L804.0,494.6 L806.0,494.6 L808.0,494.7 L810.0,494.8 L812.0,494.8 L814.0,494.9 L816.0,494.9 L818.0,495.0 L820.0,495.1 L822.0,495.1 L824.0,495.2 L826.0,495.3 L828.0,495.4 L830.0,495.5 L832.0,495.6 L834.0,495.8 L836.0,495.9 L838.0,496.0 L840.0,496.1 L842.0,496.2 L844.0,496.3 L846.0,496.4 L848.0,496.5 L850.0,496.6 L852.0,496.8 L854.0,496.9 L856.0,497.0 L858.0,497.1 L860.0,497.2 L862.0,497.1 L864.0,496.9 L866.0,496.8 L868.0,496.6 L870.0,496.4 L872.0,496.3 L874.0,496.1 L876.0,496.0 L878.0,495.8 L880.0,495.7 L882.0,495.6 L884.0,495.4 L886.0,495.2 L888.0,495.1 L890.0,494.9 L892.0,494.8 L894.0,494.6 L896.0,494.5 L898.0,494.3 L900.0,494.2 L900.0,496.4 L898.0,496.5 L896.0,496.7 L894.0,496.8 L892.0,497.0 L890.0,497.1 L888.0,497.3 L886.0,497.4 L884.0,497.6 L882.0,497.8 L880.0,497.9 L878.0,498.0 L876.0,498.2 L874.0,498.3 L872.0,498.5 L870.0,498.6 L868.0,498.8 L866.0,498.9 L864.0,499.1 L862.0,499.2 L860.0,499.4 L858.0,499.3 L856.0,499.2 L854.0,499.1 L852.0,499.0 L850.0,498.8 L848.0,498.7 L846.0,498.6 L844.0,498.5 L842.0,498.4 L840.0,498.3 L838.0,498.2 L836.0,498.1 L834.0,498.0 L832.0,497.8 L830.0,497.7 L828.0,497.6 L826.0,497.5 L824.0,497.4 L822.0,497.3 L820.0,497.3 L818.0,497.2 L816.0,497.1 L814.0,497.1 L812.0,497.0 L810.0,497.0 L808.0,496.9 L806.0,496.8 L804.0,496.8 L802.0,496.7 L800.0,496.6 L798.0,496.6 L796.0,496.5 L794.0,496.5 L792.0,496.4 L790.0,496.3 L788.0,496.3 L786.0,496.2 L784.0,496.1 L782.0,496.1 L780.0,496.0 L778.0,496.0 L776.0,495.9 L774.0,495.8 L772.0,495.8 L770.0,495.7 L768.0,495.6 L766.0,495.6 L764.0,495.5 L762.0,495.5 L760.0,495.4 L758.0,495.4 L756.0,495.5 L754.0,495.5 L752.0,495.6 L750.0,495.6 L748.0,495.6 L746.0,495.7 L744.0,495.7 L742.0,495.8 L740.0,495.8 L738.0,495.8 L736.0,495.9 L734.0,495.9 L732.0,496.0 L730.0,496.0 L728.0,496.1 L726.0,496.1 L724.0,496.1 L722.0,496.2 L720.0,496.2 L718.0,496.3 L716.0,496.3 L714.0,496.3 L712.0,496.4 L710.0,496.2 L708.0,495.9 L706.0,495.5 L704.0,495.1 L702.0,494.8 L700.0,494.4 L698.0,494.2 L696.0,494.1 L694.0,493.9 L692.0,493.7 L690.0,493.5 L688.0,493.4 L686.0,493.2 L684.0,493.0 L682.0,492.8 L680.0,492.7 L678.0,492.5 L676.0,492.3 L674.0,492.1 L672.0,492.0 L670.0,491.8 L668.0,491.6 L666.0,491.4 L664.0,491.3 L662.0,491.1 L660.0,490.9 L658.0,490.7 L656.0,490.6 L654.0,490.4 L652.0,489.9 L650.0,489.4 L648.0,488.8 L646.0,488.3 L644.0,487.8 L642.0,487.3 L640.0,486.8 L638.0,486.3 L636.0,485.7 L634.0,485.2 L632.0,484.7 L630.0,484.2 L628.0,483.7 L626.0,483.1 L624.0,482.6 L622.0,482.1 L620.0,481.6 L618.0,481.1 L616.0,480.5 L614.0,480.0 L612.0,479.5 L610.0,479.0 L608.0,478.5 L606.0,478.0 L604.0,477.4 L602.0,476.9 L600.0,476.4 L598.0,475.9 L596.0,475.5 L594.0,475.0 L592.0,474.6 L590.0,474.1 L588.0,473.7 L586.0,473.2 L584.0,472.8 L582.0,472.3 L580.0,471.9 L578.0,471.4 L576.0,471.0 L574.0,470.5 L572.0,470.1 L570.0,469.6 L568.0,469.2 L566.0,468.8 L564.0,468.3 L562.0,467.8 L560.0,467.4 L558.0,467.3 L556.0,467.2 L554.0,467.1 L552.0,466.9 L550.0,466.8 L548.0,466.7 L546.0,466.6 L544.0,466.5 L542.0,466.4 L540.0,466.2 L538.0,466.1 L536.0,466.0 L534.0,465.9 L532.0,465.8 L530.0,465.7 L528.0,465.6 L526.0,465.4 L524.0,465.3 L522.0,465.2 L520.0,465.1 L518.0,465.2 L516.0,465.3 L514.0,465.4 L512.0,465.5 L510.0,465.6 L508.0,465.8 L506.0,465.9 L504.0,466.0 L502.0,466.1 L500.0,466.2 L498.0,466.2 L496.0,466.3 L494.0,466.3 L492.0,466.4 L490.0,466.4 L488.0,466.5 L486.0,466.6 L484.0,466.6 L482.0,466.6 L480.0,466.7 L478.0,466.6 L476.0,466.5 L474.0,466.4 L472.0,466.3 L470.0,466.2 L468.0,466.1 L466.0,466.1 L464.0,466.0 L462.0,465.9 L460.0,465.8 L458.0,465.7 L456.0,465.6 L454.0,465.5 L452.0,465.4 L450.0,465.3 L448.0,465.2 L446.0,465.1 L444.0,465.0 L442.0,464.9 L440.0,464.8 L438.0,464.8 L436.0,464.7 L434.0,464.6 L432.0,464.5 L430.0,464.4 L428.0,464.3 L426.0,464.2 L424.0,464.1 L422.0,464.0 L420.0,464.0 L418.0,463.9 L416.0,463.8 L414.0,463.7 L412.0,463.7 L410.0,463.6 L408.0,463.5 L406.0,463.4 L404.0,463.4 L402.0,463.3 L400.0,463.2 L398.0,463.3 L396.0,463.4 L394.0,463.4 L392.0,463.5 L390.0,463.6 L388.0,463.7 L386.0,463.8 L384.0,463.8 L382.0,463.9 L380.0,464.0 L378.0,464.1 L376.0,464.2 L374.0,464.2 L372.0,464.3 L370.0,464.4 L368.0,464.5 L366.0,464.6 L364.0,464.6 L362.0,464.7 L360.0,464.8 L358.0,464.9 L356.0,465.0 L354.0,465.0 L352.0,465.1 L350.0,465.2 L348.0,465.4 L346.0,465.5 L344.0,465.7 L342.0,465.8 L340.0,466.0 L338.0,466.2 L336.0,466.3 L334.0,466.5 L332.0,466.6 L330.0,466.8 L328.0,467.0 L326.0,467.1 L324.0,467.3 L322.0,467.4 L320.0,467.6 L318.0,467.8 L316.0,467.9 L314.0,468.1 L312.0,468.2 L310.0,468.4 L308.0,468.6 L306.0,468.7 L304.0,468.9 L302.0,469.0 L300.0,469.2 L298.0,469.3 L296.0,469.5 L294.0,469.6 L292.0,469.7 L290.0,469.9 L288.0,470.0 L286.0,470.2 L284.0,470.3 L282.0,470.4 L280.0,470.6 L278.0,470.7 L276.0,470.8 L274.0,471.0 L272.0,471.1 L270.0,471.2 L268.0,471.4 L266.0,471.5 L264.0,471.7 L262.0,471.8 L260.0,471.9 L258.0,472.1 L256.0,472.2 L254.0,472.3 L252.0,472.4 L250.0,472.5 L248.0,472.6 L246.0,472.7 L244.0,472.8 L242.0,472.9 L240.0,473.0 L238.0,473.1 L236.0,473.3 L234.0,473.4 L232.0,473.5 L230.0,473.6 L228.0,473.7 L226.0,473.8 L224.0,473.9 L222.0,474.0 L220.0,474.1 L218.0,474.2 Z" fill="#ff5020" opacity="0.8"/>
<path d="M218.0,474.2 L220.0,474.1 L222.0,474.0 L224.0,473.9 L226.0,473.8 L228.0,473.7 L230.0,473.6 L232.0,473.5 L234.0,473.4 L236.0,473.3 L238.0,473.1 L240.0,473.0 L242.0,472.9 L244.0,472.8 L246.0,472.7 L248.0,472.6 L250.0,472.5 L252.0,472.4 L254.0,472.3 L256.0,472.2 L258.0,472.1 L260.0,471.9 L262.0,471.8 L264.0,471.7 L266.0,471.5 L268.0,471.4 L270.0,471.2 L272.0,471.1 L274.0,471.0 L276.0,470.8 L278.0,470.7 L280.0,470.6 L282.0,470.4 L284.0,470.3 L286.0,470.2 L288.0,470.0 L290.0,469.9 L292.0,469.7 L294.0,469.6 L296.0,469.5 L298.0,469.3 L300.0,469.2 L302.0,469.0 L304.0,468.9 L306.0,468.7 L308.0,468.6 L310.0,468.4 L312.0,468.2 L314.0,468.1 L316.0,467.9 L318.0,467.8 L320.0,467.6 L322.0,467.4 L324.0,467.3 L326.0,467.1 L328.0,467.0 L330.0,466.8 L332.0,466.6 L334.0,466.5 L336.0,466.3 L338.0,466.2 L340.0,466.0 L342.0,465.8 L344.0,465.7 L346.0,465.5 L348.0,465.4 L350.0,465.2 L352.0,465.1 L354.0,465.0 L356.0,465.0 L358.0,464.9 L360.0,464.8 L362.0,464.7 L364.0,464.6 L366.0,464.6 L368.0,464.5 L370.0,464.4 L372.0,464.3 L374.0,464.2 L376.0,464.2 L378.0,464.1 L380.0,464.0 L382.0,463.9 L384.0,463.8 L386.0,463.8 L388.0,463.7 L390.0,463.6 L392.0,463.5 L394.0,463.4 L396.0,463.4 L398.0,463.3 L400.0,463.2 L402.0,463.3 L404.0,463.4 L406.0,463.4 L408.0,463.5 L410.0,463.6 L412.0,463.7 L414.0,463.7 L416.0,463.8 L418.0,463.9 L420.0,464.0 L422.0,464.0 L424.0,464.1 L426.0,464.2 L428.0,464.3 L430.0,464.4 L432.0,464.5 L434.0,464.6 L436.0,464.7 L438.0,464.8 L440.0,464.8 L442.0,464.9 L444.0,465.0 L446.0,465.1 L448.0,465.2 L450.0,465.3 L452.0,465.4 L454.0,465.5 L456.0,465.6 L458.0,465.7 L460.0,465.8 L462.0,465.9 L464.0,466.0 L466.0,466.1 L468.0,466.1 L470.0,466.2 L472.0,466.3 L474.0,466.4 L476.0,466.5 L478.0,466.6 L480.0,466.7 L482.0,466.6 L484.0,466.6 L486.0,466.6 L488.0,466.5 L490.0,466.4 L492.0,466.4 L494.0,466.3 L496.0,466.3 L498.0,466.2 L500.0,466.2 L502.0,466.1 L504.0,466.0 L506.0,465.9 L508.0,465.8 L510.0,465.6 L512.0,465.5 L514.0,465.4 L516.0,465.3 L518.0,465.2 L520.0,465.1 L522.0,465.2 L524.0,465.3 L526.0,465.4 L528.0,465.6 L530.0,465.7 L532.0,465.8 L534.0,465.9 L536.0,466.0 L538.0,466.1 L540.0,466.2 L542.0,466.4 L544.0,466.5 L546.0,466.6 L548.0,466.7 L550.0,466.8 L552.0,466.9 L554.0,467.1 L556.0,467.2 L558.0,467.3 L560.0,467.4 L562.0,467.8 L564.0,468.3 L566.0,468.8 L568.0,469.2 L570.0,469.6 L572.0,470.1 L574.0,470.5 L576.0,471.0 L578.0,471.4 L580.0,471.9 L582.0,472.3 L584.0,472.8 L586.0,473.2 L588.0,473.7 L590.0,474.1 L592.0,474.6 L594.0,475.0 L596.0,475.5 L598.0,475.9 L600.0,476.4 L602.0,476.9 L604.0,477.4 L606.0,478.0 L608.0,478.5 L610.0,479.0 L612.0,479.5 L614.0,480.0 L616.0,480.5 L618.0,481.1 L620.0,481.6 L622.0,482.1 L624.0,482.6 L626.0,483.1 L628.0,483.7 L630.0,484.2 L632.0,484.7 L634.0,485.2 L636.0,485.7 L638.0,486.3 L640.0,486.8 L642.0,487.3 L644.0,487.8 L646.0,488.3 L648.0,488.8 L650.0,489.4 L652.0,489.9 L654.0,490.4 L656.0,490.6 L658.0,490.7 L660.0,490.9 L662.0,491.1 L664.0,491.3 L666.0,491.4 L668.0,491.6 L670.0,491.8 L672.0,492.0 L674.0,492.1 L676.0,492.3 L678.0,492.5 L680.0,492.7 L682.0,492.8 L684.0,493.0 L686.0,493.2 L688.0,493.4 L690.0,493.5 L692.0,493.7 L694.0,493.9 L696.0,494.1 L698.0,494.2 L700.0,494.4 L702.0,494.8 L704.0,495.1 L706.0,495.5 L708.0,495.9 L710.0,496.2 L712.0,496.4 L714.0,496.3 L716.0,496.3 L718.0,496.3 L720.0,496.2 L722.0,496.2 L724.0,496.1 L726.0,496.1 L728.0,496.1 L730.0,496.0 L732.0,496.0 L734.0,495.9 L736.0,495.9 L738.0,495.8 L740.0,495.8 L742.0,495.8 L744.0,495.7 L746.0,495.7 L748.0,495.6 L750.0,495.6 L752.0,495.6 L754.0,495.5 L756.0,495.5 L758.0,495.4 L760.0,495.4 L762.0,495.5 L764.0,495.5 L766.0,495.6 L768.0,495.6 L770.0,495.7 L772.0,495.8 L774.0,495.8 L776.0,495.9 L778.0,496.0 L780.0,496.0 L782.0,496.1 L784.0,496.1 L786.0,496.2 L788.0,496.3 L790.0,496.3 L792.0,496.4 L794.0,496.5 L796.0,496.5 L798.0,496.6 L800.0,496.6 L802.0,496.7 L804.0,496.8 L806.0,496.8 L808.0,496.9 L810.0,497.0 L812.0,497.0 L814.0,497.1 L816.0,497.1 L818.0,497.2 L820.0,497.3 L822.0,497.3 L824.0,497.4 L826.0,497.5 L828.0,497.6 L830.0,497.7 L832.0,497.8 L834.0,498.0 L836.0,498.1 L838.0,498.2 L840.0,498.3 L842.0,498.4 L844.0,498.5 L846.0,498.6 L848.0,498.7 L850.0,498.8 L852.0,499.0 L854.0,499.1 L856.0,499.2 L858.0,499.3 L860.0,499.4 L862.0,499.2 L864.0,499.1 L866.0,498.9 L868.0,498.8 L870.0,498.6 L872.0,498.5 L874.0,498.3 L876.0,498.2 L878.0,498.0 L880.0,497.9 L882.0,497.8 L884.0,497.6 L886.0,497.4 L888.0,497.3 L890.0,497.1 L892.0,497.0 L894.0,496.8 L896.0,496.7 L898.0,496.5 L900.0,496.4 L900.0,498.6 L898.0,498.8 L896.0,498.9 L894.0,499.1 L892.0,499.2 L890.0,499.4 L888.0,499.5 L886.0,499.7 L884.0,499.8 L882.0,500.0 L880.0,500.1 L878.0,500.2 L876.0,500.4 L874.0,500.6 L872.0,500.7 L870.0,500.9 L868.0,501.0 L866.0,501.2 L864.0,501.3 L862.0,501.5 L860.0,501.6 L858.0,501.5 L856.0,501.4 L854.0,501.3 L852.0,501.2 L850.0,501.0 L848.0,500.9 L846.0,500.8 L844.0,500.7 L842.0,500.6 L840.0,500.5 L838.0,500.4 L836.0,500.3 L834.0,500.2 L832.0,500.0 L830.0,499.9 L828.0,499.8 L826.0,499.7 L824.0,499.6 L822.0,499.5 L820.0,499.5 L818.0,499.4 L816.0,499.4 L814.0,499.3 L812.0,499.2 L810.0,499.2 L808.0,499.1 L806.0,499.0 L804.0,499.0 L802.0,498.9 L800.0,498.9 L798.0,498.8 L796.0,498.7 L794.0,498.7 L792.0,498.6 L790.0,498.5 L788.0,498.5 L786.0,498.4 L784.0,498.4 L782.0,498.3 L780.0,498.2 L778.0,498.2 L776.0,498.1 L774.0,498.0 L772.0,498.0 L770.0,497.9 L768.0,497.9 L766.0,497.8 L764.0,497.7 L762.0,497.7 L760.0,497.6 L758.0,497.6 L756.0,497.7 L754.0,497.7 L752.0,497.8 L750.0,497.8 L748.0,497.8 L746.0,497.9 L744.0,497.9 L742.0,498.0 L740.0,498.0 L738.0,498.0 L736.0,498.1 L734.0,498.1 L732.0,498.2 L730.0,498.2 L728.0,498.3 L726.0,498.3 L724.0,498.3 L722.0,498.4 L720.0,498.4 L718.0,498.5 L716.0,498.5 L714.0,498.5 L712.0,498.6 L710.0,498.4 L708.0,498.1 L706.0,497.7 L704.0,497.3 L702.0,497.0 L700.0,496.6 L698.0,496.4 L696.0,496.3 L694.0,496.1 L692.0,495.9 L690.0,495.7 L688.0,495.6 L686.0,495.4 L684.0,495.2 L682.0,495.0 L680.0,494.9 L678.0,494.7 L676.0,494.5 L674.0,494.3 L672.0,494.2 L670.0,494.0 L668.0,493.8 L666.0,493.6 L664.0,493.5 L662.0,493.3 L660.0,493.1 L658.0,492.9 L656.0,492.8 L654.0,492.6 L652.0,492.1 L650.0,491.6 L648.0,491.0 L646.0,490.5 L644.0,490.0 L642.0,489.5 L640.0,489.0 L638.0,488.5 L636.0,487.9 L634.0,487.4 L632.0,486.9 L630.0,486.4 L628.0,485.9 L626.0,485.3 L624.0,484.8 L622.0,484.3 L620.0,483.8 L618.0,483.3 L616.0,482.7 L614.0,482.2 L612.0,481.7 L610.0,481.2 L608.0,480.7 L606.0,480.2 L604.0,479.6 L602.0,479.1 L600.0,478.6 L598.0,478.2 L596.0,477.7 L594.0,477.2 L592.0,476.8 L590.0,476.4 L588.0,475.9 L586.0,475.5 L584.0,475.0 L582.0,474.6 L580.0,474.1 L578.0,473.7 L576.0,473.2 L574.0,472.8 L572.0,472.3 L570.0,471.9 L568.0,471.4 L566.0,471.0 L564.0,470.5 L562.0,470.1 L560.0,469.6 L558.0,469.5 L556.0,469.3 L554.0,469.2 L552.0,469.1 L550.0,468.9 L548.0,468.8 L546.0,468.7 L544.0,468.5 L542.0,468.4 L540.0,468.2 L538.0,468.1 L536.0,468.0 L534.0,467.8 L532.0,467.7 L530.0,467.6 L528.0,467.4 L526.0,467.3 L524.0,467.2 L522.0,467.0 L520.0,466.9 L518.0,467.0 L516.0,467.1 L514.0,467.2 L512.0,467.3 L510.0,467.4 L508.0,467.4 L506.0,467.5 L504.0,467.6 L502.0,467.7 L500.0,467.8 L498.0,467.9 L496.0,467.9 L494.0,467.9 L492.0,468.0 L490.0,468.1 L488.0,468.1 L486.0,468.2 L484.0,468.2 L482.0,468.2 L480.0,468.3 L478.0,468.2 L476.0,468.1 L474.0,468.0 L472.0,467.9 L470.0,467.8 L468.0,467.7 L466.0,467.7 L464.0,467.6 L462.0,467.5 L460.0,467.4 L458.0,467.3 L456.0,467.2 L454.0,467.1 L452.0,467.0 L450.0,466.9 L448.0,466.8 L446.0,466.7 L444.0,466.6 L442.0,466.5 L440.0,466.4 L438.0,466.4 L436.0,466.3 L434.0,466.2 L432.0,466.1 L430.0,466.0 L428.0,465.9 L426.0,465.8 L424.0,465.7 L422.0,465.6 L420.0,465.6 L418.0,465.5 L416.0,465.4 L414.0,465.3 L412.0,465.3 L410.0,465.2 L408.0,465.1 L406.0,465.0 L404.0,465.0 L402.0,464.9 L400.0,464.8 L398.0,464.9 L396.0,465.0 L394.0,465.0 L392.0,465.1 L390.0,465.2 L388.0,465.3 L386.0,465.4 L384.0,465.4 L382.0,465.5 L380.0,465.6 L378.0,465.7 L376.0,465.8 L374.0,465.8 L372.0,465.9 L370.0,466.0 L368.0,466.1 L366.0,466.2 L364.0,466.2 L362.0,466.3 L360.0,466.4 L358.0,466.5 L356.0,466.6 L354.0,466.6 L352.0,466.7 L350.0,466.8 L348.0,467.0 L346.0,467.1 L344.0,467.3 L342.0,467.4 L340.0,467.6 L338.0,467.8 L336.0,467.9 L334.0,468.1 L332.0,468.2 L330.0,468.4 L328.0,468.6 L326.0,468.7 L324.0,468.9 L322.0,469.0 L320.0,469.2 L318.0,469.4 L316.0,469.5 L314.0,469.7 L312.0,469.8 L310.0,470.0 L308.0,470.2 L306.0,470.3 L304.0,470.5 L302.0,470.6 L300.0,470.8 L298.0,470.9 L296.0,471.1 L294.0,471.2 L292.0,471.3 L290.0,471.5 L288.0,471.6 L286.0,471.8 L284.0,471.9 L282.0,472.0 L280.0,472.2 L278.0,472.3 L276.0,472.4 L274.0,472.6 L272.0,472.7 L270.0,472.8 L268.0,473.0 L266.0,473.1 L264.0,473.3 L262.0,473.4 L260.0,473.5 L258.0,473.7 L256.0,473.8 L254.0,473.9 L252.0,474.0 L250.0,474.1 L248.0,474.2 L246.0,474.3 L244.0,474.4 L242.0,474.5 L240.0,474.6 L238.0,474.7 L236.0,474.9 L234.0,475.0 L232.0,475.1 L230.0,475.2 L228.0,475.3 L226.0,475.4 L224.0,475.5 L222.0,475.6 L220.0,475.7 L218.0,475.8 Z" fill="#ff6a40" opacity="0.66"/>
<path d="M218.0,475.8 L220.0,475.7 L222.0,475.6 L224.0,475.5 L226.0,475.4 L228.0,475.3 L230.0,475.2 L232.0,475.1 L234.0,475.0 L236.0,474.9 L238.0,474.7 L240.0,474.6 L242.0,474.5 L244.0,474.4 L246.0,474.3 L248.0,474.2 L250.0,474.1 L252.0,474.0 L254.0,473.9 L256.0,473.8 L258.0,473.7 L260.0,473.5 L262.0,473.4 L264.0,473.3 L266.0,473.1 L268.0,473.0 L270.0,472.8 L272.0,472.7 L274.0,472.6 L276.0,472.4 L278.0,472.3 L280.0,472.2 L282.0,472.0 L284.0,471.9 L286.0,471.8 L288.0,471.6 L290.0,471.5 L292.0,471.3 L294.0,471.2 L296.0,471.1 L298.0,470.9 L300.0,470.8 L302.0,470.6 L304.0,470.5 L306.0,470.3 L308.0,470.2 L310.0,470.0 L312.0,469.8 L314.0,469.7 L316.0,469.5 L318.0,469.4 L320.0,469.2 L322.0,469.0 L324.0,468.9 L326.0,468.7 L328.0,468.6 L330.0,468.4 L332.0,468.2 L334.0,468.1 L336.0,467.9 L338.0,467.8 L340.0,467.6 L342.0,467.4 L344.0,467.3 L346.0,467.1 L348.0,467.0 L350.0,466.8 L352.0,466.7 L354.0,466.6 L356.0,466.6 L358.0,466.5 L360.0,466.4 L362.0,466.3 L364.0,466.2 L366.0,466.2 L368.0,466.1 L370.0,466.0 L372.0,465.9 L374.0,465.8 L376.0,465.8 L378.0,465.7 L380.0,465.6 L382.0,465.5 L384.0,465.4 L386.0,465.4 L388.0,465.3 L390.0,465.2 L392.0,465.1 L394.0,465.0 L396.0,465.0 L398.0,464.9 L400.0,464.8 L402.0,464.9 L404.0,465.0 L406.0,465.0 L408.0,465.1 L410.0,465.2 L412.0,465.3 L414.0,465.3 L416.0,465.4 L418.0,465.5 L420.0,465.6 L422.0,465.6 L424.0,465.7 L426.0,465.8 L428.0,465.9 L430.0,466.0 L432.0,466.1 L434.0,466.2 L436.0,466.3 L438.0,466.4 L440.0,466.4 L442.0,466.5 L444.0,466.6 L446.0,466.7 L448.0,466.8 L450.0,466.9 L452.0,467.0 L454.0,467.1 L456.0,467.2 L458.0,467.3 L460.0,467.4 L462.0,467.5 L464.0,467.6 L466.0,467.7 L468.0,467.7 L470.0,467.8 L472.0,467.9 L474.0,468.0 L476.0,468.1 L478.0,468.2 L480.0,468.3 L482.0,468.2 L484.0,468.2 L486.0,468.2 L488.0,468.1 L490.0,468.1 L492.0,468.0 L494.0,467.9 L496.0,467.9 L498.0,467.9 L500.0,467.8 L502.0,467.7 L504.0,467.6 L506.0,467.5 L508.0,467.4 L510.0,467.4 L512.0,467.3 L514.0,467.2 L516.0,467.1 L518.0,467.0 L520.0,466.9 L522.0,467.0 L524.0,467.2 L526.0,467.3 L528.0,467.4 L530.0,467.6 L532.0,467.7 L534.0,467.8 L536.0,468.0 L538.0,468.1 L540.0,468.2 L542.0,468.4 L544.0,468.5 L546.0,468.7 L548.0,468.8 L550.0,468.9 L552.0,469.1 L554.0,469.2 L556.0,469.3 L558.0,469.5 L560.0,469.6 L562.0,470.1 L564.0,470.5 L566.0,471.0 L568.0,471.4 L570.0,471.9 L572.0,472.3 L574.0,472.8 L576.0,473.2 L578.0,473.7 L580.0,474.1 L582.0,474.6 L584.0,475.0 L586.0,475.5 L588.0,475.9 L590.0,476.4 L592.0,476.8 L594.0,477.2 L596.0,477.7 L598.0,478.2 L600.0,478.6 L602.0,479.1 L604.0,479.6 L606.0,480.2 L608.0,480.7 L610.0,481.2 L612.0,481.7 L614.0,482.2 L616.0,482.7 L618.0,483.3 L620.0,483.8 L622.0,484.3 L624.0,484.8 L626.0,485.3 L628.0,485.9 L630.0,486.4 L632.0,486.9 L634.0,487.4 L636.0,487.9 L638.0,488.5 L640.0,489.0 L642.0,489.5 L644.0,490.0 L646.0,490.5 L648.0,491.0 L650.0,491.6 L652.0,492.1 L654.0,492.6 L656.0,492.8 L658.0,492.9 L660.0,493.1 L662.0,493.3 L664.0,493.5 L666.0,493.6 L668.0,493.8 L670.0,494.0 L672.0,494.2 L674.0,494.3 L676.0,494.5 L678.0,494.7 L680.0,494.9 L682.0,495.0 L684.0,495.2 L686.0,495.4 L688.0,495.6 L690.0,495.7 L692.0,495.9 L694.0,496.1 L696.0,496.3 L698.0,496.4 L700.0,496.6 L702.0,497.0 L704.0,497.3 L706.0,497.7 L708.0,498.1 L710.0,498.4 L712.0,498.6 L714.0,498.5 L716.0,498.5 L718.0,498.5 L720.0,498.4 L722.0,498.4 L724.0,498.3 L726.0,498.3 L728.0,498.3 L730.0,498.2 L732.0,498.2 L734.0,498.1 L736.0,498.1 L738.0,498.0 L740.0,498.0 L742.0,498.0 L744.0,497.9 L746.0,497.9 L748.0,497.8 L750.0,497.8 L752.0,497.8 L754.0,497.7 L756.0,497.7 L758.0,497.6 L760.0,497.6 L762.0,497.7 L764.0,497.7 L766.0,497.8 L768.0,497.9 L770.0,497.9 L772.0,498.0 L774.0,498.0 L776.0,498.1 L778.0,498.2 L780.0,498.2 L782.0,498.3 L784.0,498.4 L786.0,498.4 L788.0,498.5 L790.0,498.5 L792.0,498.6 L794.0,498.7 L796.0,498.7 L798.0,498.8 L800.0,498.9 L802.0,498.9 L804.0,499.0 L806.0,499.0 L808.0,499.1 L810.0,499.2 L812.0,499.2 L814.0,499.3 L816.0,499.4 L818.0,499.4 L820.0,499.5 L822.0,499.5 L824.0,499.6 L826.0,499.7 L828.0,499.8 L830.0,499.9 L832.0,500.0 L834.0,500.2 L836.0,500.3 L838.0,500.4 L840.0,500.5 L842.0,500.6 L844.0,500.7 L846.0,500.8 L848.0,500.9 L850.0,501.0 L852.0,501.2 L854.0,501.3 L856.0,501.4 L858.0,501.5 L860.0,501.6 L862.0,501.5 L864.0,501.3 L866.0,501.2 L868.0,501.0 L870.0,500.9 L872.0,500.7 L874.0,500.6 L876.0,500.4 L878.0,500.2 L880.0,500.1 L882.0,500.0 L884.0,499.8 L886.0,499.7 L888.0,499.5 L890.0,499.4 L892.0,499.2 L894.0,499.1 L896.0,498.9 L898.0,498.8 L900.0,498.6 L900.0,500.8 L898.0,500.9 L896.0,501.1 L894.0,501.2 L892.0,501.4 L890.0,501.6 L888.0,501.7 L886.0,501.9 L884.0,502.0 L882.0,502.2 L880.0,502.3 L878.0,502.4 L876.0,502.6 L874.0,502.8 L872.0,502.9 L870.0,503.1 L868.0,503.2 L866.0,503.4 L864.0,503.5 L862.0,503.7 L860.0,503.8 L858.0,503.7 L856.0,503.6 L854.0,503.5 L852.0,503.4 L850.0,503.2 L848.0,503.1 L846.0,503.0 L844.0,502.9 L842.0,502.8 L840.0,502.7 L838.0,502.6 L836.0,502.5 L834.0,502.4 L832.0,502.2 L830.0,502.1 L828.0,502.0 L826.0,501.9 L824.0,501.8 L822.0,501.7 L820.0,501.7 L818.0,501.6 L816.0,501.6 L814.0,501.5 L812.0,501.4 L810.0,501.4 L808.0,501.3 L806.0,501.2 L804.0,501.2 L802.0,501.1 L800.0,501.1 L798.0,501.0 L796.0,500.9 L794.0,500.9 L792.0,500.8 L790.0,500.7 L788.0,500.7 L786.0,500.6 L784.0,500.6 L782.0,500.5 L780.0,500.4 L778.0,500.4 L776.0,500.3 L774.0,500.2 L772.0,500.2 L770.0,500.1 L768.0,500.1 L766.0,500.0 L764.0,499.9 L762.0,499.9 L760.0,499.8 L758.0,499.8 L756.0,499.9 L754.0,499.9 L752.0,500.0 L750.0,500.0 L748.0,500.0 L746.0,500.1 L744.0,500.1 L742.0,500.2 L740.0,500.2 L738.0,500.2 L736.0,500.3 L734.0,500.3 L732.0,500.4 L730.0,500.4 L728.0,500.5 L726.0,500.5 L724.0,500.5 L722.0,500.6 L720.0,500.6 L718.0,500.7 L716.0,500.7 L714.0,500.7 L712.0,500.8 L710.0,500.6 L708.0,500.3 L706.0,499.9 L704.0,499.5 L702.0,499.2 L700.0,498.8 L698.0,498.6 L696.0,498.5 L694.0,498.3 L692.0,498.1 L690.0,497.9 L688.0,497.8 L686.0,497.6 L684.0,497.4 L682.0,497.2 L680.0,497.1 L678.0,496.9 L676.0,496.7 L674.0,496.5 L672.0,496.4 L670.0,496.2 L668.0,496.0 L666.0,495.8 L664.0,495.7 L662.0,495.5 L660.0,495.3 L658.0,495.1 L656.0,495.0 L654.0,494.8 L652.0,494.3 L650.0,493.8 L648.0,493.2 L646.0,492.7 L644.0,492.2 L642.0,491.7 L640.0,491.2 L638.0,490.7 L636.0,490.1 L634.0,489.6 L632.0,489.1 L630.0,488.6 L628.0,488.1 L626.0,487.5 L624.0,487.0 L622.0,486.5 L620.0,486.0 L618.0,485.5 L616.0,484.9 L614.0,484.4 L612.0,483.9 L610.0,483.4 L608.0,482.9 L606.0,482.4 L604.0,481.8 L602.0,481.3 L600.0,480.8 L598.0,480.4 L596.0,479.9 L594.0,479.4 L592.0,479.0 L590.0,478.6 L588.0,478.1 L586.0,477.7 L584.0,477.2 L582.0,476.8 L580.0,476.3 L578.0,475.9 L576.0,475.4 L574.0,474.9 L572.0,474.5 L570.0,474.1 L568.0,473.6 L566.0,473.2 L564.0,472.7 L562.0,472.2 L560.0,471.8 L558.0,471.6 L556.0,471.5 L554.0,471.3 L552.0,471.2 L550.0,471.0 L548.0,470.9 L546.0,470.7 L544.0,470.6 L542.0,470.4 L540.0,470.2 L538.0,470.1 L536.0,469.9 L534.0,469.8 L532.0,469.6 L530.0,469.5 L528.0,469.3 L526.0,469.2 L524.0,469.0 L522.0,468.9 L520.0,468.7 L518.0,468.8 L516.0,468.8 L514.0,468.9 L512.0,469.0 L510.0,469.1 L508.0,469.1 L506.0,469.2 L504.0,469.3 L502.0,469.3 L500.0,469.4 L498.0,469.4 L496.0,469.5 L494.0,469.5 L492.0,469.6 L490.0,469.6 L488.0,469.7 L486.0,469.8 L484.0,469.8 L482.0,469.8 L480.0,469.9 L478.0,469.8 L476.0,469.7 L474.0,469.6 L472.0,469.5 L470.0,469.4 L468.0,469.3 L466.0,469.3 L464.0,469.2 L462.0,469.1 L460.0,469.0 L458.0,468.9 L456.0,468.8 L454.0,468.7 L452.0,468.6 L450.0,468.5 L448.0,468.4 L446.0,468.3 L444.0,468.2 L442.0,468.1 L440.0,468.0 L438.0,468.0 L436.0,467.9 L434.0,467.8 L432.0,467.7 L430.0,467.6 L428.0,467.5 L426.0,467.4 L424.0,467.3 L422.0,467.2 L420.0,467.2 L418.0,467.1 L416.0,467.0 L414.0,466.9 L412.0,466.9 L410.0,466.8 L408.0,466.7 L406.0,466.6 L404.0,466.6 L402.0,466.5 L400.0,466.4 L398.0,466.5 L396.0,466.6 L394.0,466.6 L392.0,466.7 L390.0,466.8 L388.0,466.9 L386.0,467.0 L384.0,467.0 L382.0,467.1 L380.0,467.2 L378.0,467.3 L376.0,467.4 L374.0,467.4 L372.0,467.5 L370.0,467.6 L368.0,467.7 L366.0,467.8 L364.0,467.8 L362.0,467.9 L360.0,468.0 L358.0,468.1 L356.0,468.2 L354.0,468.2 L352.0,468.3 L350.0,468.4 L348.0,468.6 L346.0,468.7 L344.0,468.9 L342.0,469.0 L340.0,469.2 L338.0,469.4 L336.0,469.5 L334.0,469.7 L332.0,469.8 L330.0,470.0 L328.0,470.2 L326.0,470.3 L324.0,470.5 L322.0,470.6 L320.0,470.8 L318.0,471.0 L316.0,471.1 L314.0,471.3 L312.0,471.4 L310.0,471.6 L308.0,471.8 L306.0,471.9 L304.0,472.1 L302.0,472.2 L300.0,472.4 L298.0,472.5 L296.0,472.7 L294.0,472.8 L292.0,472.9 L290.0,473.1 L288.0,473.2 L286.0,473.4 L284.0,473.5 L282.0,473.6 L280.0,473.8 L278.0,473.9 L276.0,474.0 L274.0,474.2 L272.0,474.3 L270.0,474.4 L268.0,474.6 L266.0,474.7 L264.0,474.9 L262.0,475.0 L260.0,475.1 L258.0,475.3 L256.0,475.4 L254.0,475.5 L252.0,475.6 L250.0,475.7 L248.0,475.8 L246.0,475.9 L244.0,476.0 L242.0,476.1 L240.0,476.2 L238.0,476.3 L236.0,476.5 L234.0,476.6 L232.0,476.7 L230.0,476.8 L228.0,476.9 L226.0,477.0 L224.0,477.1 L222.0,477.2 L220.0,477.3 L218.0,477.4 Z" fill="#ff8a70" opacity="0.5"/>
<path d="M218.0,477.4 L220.0,477.3 L222.0,477.2 L224.0,477.1 L226.0,477.0 L228.0,476.9 L230.0,476.8 L232.0,476.7 L234.0,476.6 L236.0,476.5 L238.0,476.3 L240.0,476.2 L242.0,476.1 L244.0,476.0 L246.0,475.9 L248.0,475.8 L250.0,475.7 L252.0,475.6 L254.0,475.5 L256.0,475.4 L258.0,475.3 L260.0,475.1 L262.0,475.0 L264.0,474.9 L266.0,474.7 L268.0,474.6 L270.0,474.4 L272.0,474.3 L274.0,474.2 L276.0,474.0 L278.0,473.9 L280.0,473.8 L282.0,473.6 L284.0,473.5 L286.0,473.4 L288.0,473.2 L290.0,473.1 L292.0,472.9 L294.0,472.8 L296.0,472.7 L298.0,472.5 L300.0,472.4 L302.0,472.2 L304.0,472.1 L306.0,471.9 L308.0,471.8 L310.0,471.6 L312.0,471.4 L314.0,471.3 L316.0,471.1 L318.0,471.0 L320.0,470.8 L322.0,470.6 L324.0,470.5 L326.0,470.3 L328.0,470.2 L330.0,470.0 L332.0,469.8 L334.0,469.7 L336.0,469.5 L338.0,469.4 L340.0,469.2 L342.0,469.0 L344.0,468.9 L346.0,468.7 L348.0,468.6 L350.0,468.4 L352.0,468.3 L354.0,468.2 L356.0,468.2 L358.0,468.1 L360.0,468.0 L362.0,467.9 L364.0,467.8 L366.0,467.8 L368.0,467.7 L370.0,467.6 L372.0,467.5 L374.0,467.4 L376.0,467.4 L378.0,467.3 L380.0,467.2 L382.0,467.1 L384.0,467.0 L386.0,467.0 L388.0,466.9 L390.0,466.8 L392.0,466.7 L394.0,466.6 L396.0,466.6 L398.0,466.5 L400.0,466.4 L402.0,466.5 L404.0,466.6 L406.0,466.6 L408.0,466.7 L410.0,466.8 L412.0,466.9 L414.0,466.9 L416.0,467.0 L418.0,467.1 L420.0,467.2 L422.0,467.2 L424.0,467.3 L426.0,467.4 L428.0,467.5 L430.0,467.6 L432.0,467.7 L434.0,467.8 L436.0,467.9 L438.0,468.0 L440.0,468.0 L442.0,468.1 L444.0,468.2 L446.0,468.3 L448.0,468.4 L450.0,468.5 L452.0,468.6 L454.0,468.7 L456.0,468.8 L458.0,468.9 L460.0,469.0 L462.0,469.1 L464.0,469.2 L466.0,469.3 L468.0,469.3 L470.0,469.4 L472.0,469.5 L474.0,469.6 L476.0,469.7 L478.0,469.8 L480.0,469.9 L482.0,469.8 L484.0,469.8 L486.0,469.8 L488.0,469.7 L490.0,469.6 L492.0,469.6 L494.0,469.5 L496.0,469.5 L498.0,469.4 L500.0,469.4 L502.0,469.3 L504.0,469.3 L506.0,469.2 L508.0,469.1 L510.0,469.1 L512.0,469.0 L514.0,468.9 L516.0,468.8 L518.0,468.8 L520.0,468.7 L522.0,468.9 L524.0,469.0 L526.0,469.2 L528.0,469.3 L530.0,469.5 L532.0,469.6 L534.0,469.8 L536.0,469.9 L538.0,470.1 L540.0,470.2 L542.0,470.4 L544.0,470.6 L546.0,470.7 L548.0,470.9 L550.0,471.0 L552.0,471.2 L554.0,471.3 L556.0,471.5 L558.0,471.6 L560.0,471.8 L562.0,472.2 L564.0,472.7 L566.0,473.2 L568.0,473.6 L570.0,474.1 L572.0,474.5 L574.0,474.9 L576.0,475.4 L578.0,475.9 L580.0,476.3 L582.0,476.8 L584.0,477.2 L586.0,477.7 L588.0,478.1 L590.0,478.6 L592.0,479.0 L594.0,479.4 L596.0,479.9 L598.0,480.4 L600.0,480.8 L602.0,481.3 L604.0,481.8 L606.0,482.4 L608.0,482.9 L610.0,483.4 L612.0,483.9 L614.0,484.4 L616.0,484.9 L618.0,485.5 L620.0,486.0 L622.0,486.5 L624.0,487.0 L626.0,487.5 L628.0,488.1 L630.0,488.6 L632.0,489.1 L634.0,489.6 L636.0,490.1 L638.0,490.7 L640.0,491.2 L642.0,491.7 L644.0,492.2 L646.0,492.7 L648.0,493.2 L650.0,493.8 L652.0,494.3 L654.0,494.8 L656.0,495.0 L658.0,495.1 L660.0,495.3 L662.0,495.5 L664.0,495.7 L666.0,495.8 L668.0,496.0 L670.0,496.2 L672.0,496.4 L674.0,496.5 L676.0,496.7 L678.0,496.9 L680.0,497.1 L682.0,497.2 L684.0,497.4 L686.0,497.6 L688.0,497.8 L690.0,497.9 L692.0,498.1 L694.0,498.3 L696.0,498.5 L698.0,498.6 L700.0,498.8 L702.0,499.2 L704.0,499.5 L706.0,499.9 L708.0,500.3 L710.0,500.6 L712.0,500.8 L714.0,500.7 L716.0,500.7 L718.0,500.7 L720.0,500.6 L722.0,500.6 L724.0,500.5 L726.0,500.5 L728.0,500.5 L730.0,500.4 L732.0,500.4 L734.0,500.3 L736.0,500.3 L738.0,500.2 L740.0,500.2 L742.0,500.2 L744.0,500.1 L746.0,500.1 L748.0,500.0 L750.0,500.0 L752.0,500.0 L754.0,499.9 L756.0,499.9 L758.0,499.8 L760.0,499.8 L762.0,499.9 L764.0,499.9 L766.0,500.0 L768.0,500.1 L770.0,500.1 L772.0,500.2 L774.0,500.2 L776.0,500.3 L778.0,500.4 L780.0,500.4 L782.0,500.5 L784.0,500.6 L786.0,500.6 L788.0,500.7 L790.0,500.7 L792.0,500.8 L794.0,500.9 L796.0,500.9 L798.0,501.0 L800.0,501.1 L802.0,501.1 L804.0,501.2 L806.0,501.2 L808.0,501.3 L810.0,501.4 L812.0,501.4 L814.0,501.5 L816.0,501.6 L818.0,501.6 L820.0,501.7 L822.0,501.7 L824.0,501.8 L826.0,501.9 L828.0,502.0 L830.0,502.1 L832.0,502.2 L834.0,502.4 L836.0,502.5 L838.0,502.6 L840.0,502.7 L842.0,502.8 L844.0,502.9 L846.0,503.0 L848.0,503.1 L850.0,503.2 L852.0,503.4 L854.0,503.5 L856.0,503.6 L858.0,503.7 L860.0,503.8 L862.0,503.7 L864.0,503.5 L866.0,503.4 L868.0,503.2 L870.0,503.1 L872.0,502.9 L874.0,502.8 L876.0,502.6 L878.0,502.4 L880.0,502.3 L882.0,502.2 L884.0,502.0 L886.0,501.9 L888.0,501.7 L890.0,501.6 L892.0,501.4 L894.0,501.2 L896.0,501.1 L898.0,500.9 L900.0,500.8 L900.0,503.0 L898.0,503.1 L896.0,503.3 L894.0,503.4 L892.0,503.6 L890.0,503.8 L888.0,503.9 L886.0,504.1 L884.0,504.2 L882.0,504.4 L880.0,504.5 L878.0,504.6 L876.0,504.8 L874.0,504.9 L872.0,505.1 L870.0,505.2 L868.0,505.4 L866.0,505.6 L864.0,505.7 L862.0,505.9 L860.0,506.0 L858.0,505.9 L856.0,505.8 L854.0,505.7 L852.0,505.6 L850.0,505.4 L848.0,505.3 L846.0,505.2 L844.0,505.1 L842.0,505.0 L840.0,504.9 L838.0,504.8 L836.0,504.7 L834.0,504.6 L832.0,504.4 L830.0,504.3 L828.0,504.2 L826.0,504.1 L824.0,504.0 L822.0,503.9 L820.0,503.9 L818.0,503.8 L816.0,503.8 L814.0,503.7 L812.0,503.6 L810.0,503.6 L808.0,503.5 L806.0,503.4 L804.0,503.4 L802.0,503.3 L800.0,503.2 L798.0,503.2 L796.0,503.1 L794.0,503.1 L792.0,503.0 L790.0,502.9 L788.0,502.9 L786.0,502.8 L784.0,502.8 L782.0,502.7 L780.0,502.6 L778.0,502.6 L776.0,502.5 L774.0,502.4 L772.0,502.4 L770.0,502.3 L768.0,502.2 L766.0,502.2 L764.0,502.1 L762.0,502.1 L760.0,502.0 L758.0,502.0 L756.0,502.1 L754.0,502.1 L752.0,502.2 L750.0,502.2 L748.0,502.2 L746.0,502.3 L744.0,502.3 L742.0,502.4 L740.0,502.4 L738.0,502.4 L736.0,502.5 L734.0,502.5 L732.0,502.6 L730.0,502.6 L728.0,502.7 L726.0,502.7 L724.0,502.7 L722.0,502.8 L720.0,502.8 L718.0,502.9 L716.0,502.9 L714.0,502.9 L712.0,503.0 L710.0,502.8 L708.0,502.5 L706.0,502.1 L704.0,501.7 L702.0,501.4 L700.0,501.0 L698.0,500.8 L696.0,500.7 L694.0,500.5 L692.0,500.3 L690.0,500.1 L688.0,500.0 L686.0,499.8 L684.0,499.6 L682.0,499.4 L680.0,499.3 L678.0,499.1 L676.0,498.9 L674.0,498.7 L672.0,498.6 L670.0,498.4 L668.0,498.2 L666.0,498.0 L664.0,497.9 L662.0,497.7 L660.0,497.5 L658.0,497.3 L656.0,497.2 L654.0,497.0 L652.0,496.5 L650.0,496.0 L648.0,495.4 L646.0,494.9 L644.0,494.4 L642.0,493.9 L640.0,493.4 L638.0,492.9 L636.0,492.3 L634.0,491.8 L632.0,491.3 L630.0,490.8 L628.0,490.3 L626.0,489.7 L624.0,489.2 L622.0,488.7 L620.0,488.2 L618.0,487.7 L616.0,487.1 L614.0,486.6 L612.0,486.1 L610.0,485.6 L608.0,485.1 L606.0,484.6 L604.0,484.0 L602.0,483.5 L600.0,483.0 L598.0,482.6 L596.0,482.1 L594.0,481.6 L592.0,481.2 L590.0,480.8 L588.0,480.3 L586.0,479.9 L584.0,479.4 L582.0,478.9 L580.0,478.5 L578.0,478.1 L576.0,477.6 L574.0,477.1 L572.0,476.7 L570.0,476.2 L568.0,475.8 L566.0,475.4 L564.0,474.9 L562.0,474.4 L560.0,474.0 L558.0,473.8 L556.0,473.6 L554.0,473.5 L552.0,473.3 L550.0,473.1 L548.0,472.9 L546.0,472.8 L544.0,472.6 L542.0,472.4 L540.0,472.2 L538.0,472.1 L536.0,471.9 L534.0,471.7 L532.0,471.6 L530.0,471.4 L528.0,471.2 L526.0,471.0 L524.0,470.9 L522.0,470.7 L520.0,470.5 L518.0,470.6 L516.0,470.6 L514.0,470.6 L512.0,470.7 L510.0,470.8 L508.0,470.8 L506.0,470.9 L504.0,470.9 L502.0,470.9 L500.0,471.0 L498.0,471.1 L496.0,471.1 L494.0,471.1 L492.0,471.2 L490.0,471.2 L488.0,471.3 L486.0,471.4 L484.0,471.4 L482.0,471.4 L480.0,471.5 L478.0,471.4 L476.0,471.3 L474.0,471.2 L472.0,471.1 L470.0,471.0 L468.0,470.9 L466.0,470.9 L464.0,470.8 L462.0,470.7 L460.0,470.6 L458.0,470.5 L456.0,470.4 L454.0,470.3 L452.0,470.2 L450.0,470.1 L448.0,470.0 L446.0,469.9 L444.0,469.8 L442.0,469.7 L440.0,469.6 L438.0,469.6 L436.0,469.5 L434.0,469.4 L432.0,469.3 L430.0,469.2 L428.0,469.1 L426.0,469.0 L424.0,468.9 L422.0,468.8 L420.0,468.8 L418.0,468.7 L416.0,468.6 L414.0,468.5 L412.0,468.5 L410.0,468.4 L408.0,468.3 L406.0,468.2 L404.0,468.2 L402.0,468.1 L400.0,468.0 L398.0,468.1 L396.0,468.2 L394.0,468.2 L392.0,468.3 L390.0,468.4 L388.0,468.5 L386.0,468.6 L384.0,468.6 L382.0,468.7 L380.0,468.8 L378.0,468.9 L376.0,469.0 L374.0,469.0 L372.0,469.1 L370.0,469.2 L368.0,469.3 L366.0,469.4 L364.0,469.4 L362.0,469.5 L360.0,469.6 L358.0,469.7 L356.0,469.8 L354.0,469.8 L352.0,469.9 L350.0,470.0 L348.0,470.2 L346.0,470.3 L344.0,470.5 L342.0,470.6 L340.0,470.8 L338.0,471.0 L336.0,471.1 L334.0,471.3 L332.0,471.4 L330.0,471.6 L328.0,471.8 L326.0,471.9 L324.0,472.1 L322.0,472.2 L320.0,472.4 L318.0,472.6 L316.0,472.7 L314.0,472.9 L312.0,473.0 L310.0,473.2 L308.0,473.4 L306.0,473.5 L304.0,473.7 L302.0,473.8 L300.0,474.0 L298.0,474.1 L296.0,474.3 L294.0,474.4 L292.0,474.5 L290.0,474.7 L288.0,474.8 L286.0,475.0 L284.0,475.1 L282.0,475.2 L280.0,475.4 L278.0,475.5 L276.0,475.6 L274.0,475.8 L272.0,475.9 L270.0,476.0 L268.0,476.2 L266.0,476.3 L264.0,476.5 L262.0,476.6 L260.0,476.7 L258.0,476.9 L256.0,477.0 L254.0,477.1 L252.0,477.2 L250.0,477.3 L248.0,477.4 L246.0,477.5 L244.0,477.6 L242.0,477.7 L240.0,477.8 L238.0,477.9 L236.0,478.1 L234.0,478.2 L232.0,478.3 L230.0,478.4 L228.0,478.5 L226.0,478.6 L224.0,478.7 L222.0,478.8 L220.0,478.9 L218.0,479.0 Z" fill="#ffb0a0" opacity="0.35"/>
<path d="M176.0,413.5 L178.0,413.5 L180.0,413.5 L182.0,413.5 L184.0,413.5 L186.0,413.5 L188.0,413.5 L190.0,413.5 L192.0,413.5 L194.0,413.5 L196.0,413.5 L198.0,413.5 L200.0,413.5 L202.0,413.5 L204.0,413.5 L206.0,413.5 L208.0,413.5 L210.0,413.5 L212.0,413.5 L214.0,413.5 L216.0,413.5 L218.0,413.5 L220.0,413.5 L222.0,413.5 L224.0,413.5 L226.0,413.5 L228.0,413.5 L230.0,413.5 L232.0,413.5 L234.0,413.5 L236.0,413.5 L238.0,413.5 L240.0,413.5 L242.0,413.5 L244.0,413.5 L246.0,413.5 L248.0,413.5 L250.0,413.5 L252.0,413.5 L254.0,413.5 L256.0,413.5 L258.0,413.5 L260.0,413.5 L262.0,413.5 L264.0,413.5 L266.0,413.5 L268.0,413.5 L270.0,413.5 L272.0,413.5 L274.0,413.5 L276.0,413.5 L278.0,413.5 L280.0,413.5 L282.0,413.5 L284.0,413.5 L286.0,413.5 L288.0,413.5 L290.0,413.5 L292.0,413.5 L294.0,413.5 L296.0,413.5 L298.0,413.5 L300.0,413.5 L302.0,413.5 L304.0,413.5 L306.0,413.5 L308.0,413.5 L310.0,413.5 L312.0,413.5 L314.0,413.5 L316.0,413.5 L318.0,413.5 L320.0,413.5 L322.0,413.5 L324.0,413.5 L326.0,413.5 L328.0,413.5 L330.0,413.5 L332.0,413.5 L334.0,413.5 L336.0,413.5 L338.0,413.5 L340.0,413.5 L342.0,413.5 L344.0,413.5 L346.0,413.5 L348.0,413.5 L350.0,413.5 L352.0,413.5 L354.0,413.5 L356.0,413.5 L358.0,413.5 L360.0,413.5 L362.0,413.5 L364.0,413.5 L366.0,413.5 L368.0,413.5 L370.0,413.5 L372.0,413.5 L374.0,413.5 L376.0,413.5 L378.0,413.5 L380.0,413.5 L382.0,413.5 L384.0,413.5 L386.0,413.5 L388.0,413.5 L390.0,413.5 L392.0,413.5 L394.0,413.5 L396.0,413.5 L398.0,413.5 L400.0,413.5 L402.0,413.5 L404.0,413.5 L406.0,413.5 L408.0,413.5 L410.0,413.5 L412.0,413.5 L414.0,413.5 L416.0,413.5 L418.0,413.5 L420.0,413.5 L422.0,413.5 L424.0,413.5 L426.0,413.5 L428.0,413.5 L430.0,413.5 L432.0,413.5 L434.0,413.5 L436.0,413.5 L438.0,413.5 L440.0,413.5 L442.0,413.5 L444.0,413.5 L446.0,413.5 L448.0,413.5 L450.0,413.5 L452.0,413.5 L454.0,413.5 L456.0,413.5 L458.0,413.5 L460.0,413.5 L462.0,413.5 L464.0,413.5 L466.0,413.5 L468.0,413.5 L470.0,413.5 L472.0,413.5 L474.0,413.5 L476.0,413.5 L478.0,413.5 L480.0,413.5 L482.0,413.5 L484.0,413.5 L486.0,413.5 L488.0,413.5 L490.0,413.5 L492.0,413.5 L494.0,413.5 L496.0,413.5 L498.0,413.5 L500.0,413.5 L502.0,413.5 L504.0,413.5 L506.0,413.5 L508.0,413.5 L510.0,413.5 L512.0,413.5 L514.0,413.5 L516.0,413.5 L518.0,413.5 L520.0,413.5 L522.0,413.5 L524.0,413.5 L526.0,413.5 L528.0,413.5 L530.0,413.5 L532.0,413.5 L534.0,413.5 L536.0,413.5 L538.0,413.5 L540.0,413.5 L542.0,413.5 L544.0,413.5 L546.0,413.5 L548.0,413.5 L550.0,413.5 L552.0,413.5 L554.0,413.5 L556.0,413.5 L558.0,413.5 L560.0,413.5 L562.0,413.5 L564.0,413.5 L566.0,413.5 L568.0,413.5 L570.0,413.5 L572.0,413.5 L574.0,413.5 L576.0,413.5 L578.0,413.5 L580.0,413.5 L582.0,413.5 L584.0,413.5 L586.0,413.5 L588.0,413.5 L590.0,413.5 L592.0,413.5 L594.0,413.5 L596.0,413.5 L598.0,413.5 L600.0,413.5 L602.0,413.5 L604.0,413.5 L606.0,413.5 L608.0,413.5 L610.0,413.5 L612.0,413.5 L614.0,413.5 L616.0,413.5 L618.0,413.5 L620.0,413.5 L622.0,413.5 L624.0,413.5 L626.0,413.5 L628.0,413.5 L630.0,413.5 L632.0,413.5 L634.0,413.5 L636.0,413.5 L638.0,413.5 L640.0,413.5 L642.0,413.5 L644.0,413.5 L646.0,413.5 L648.0,413.5 L650.0,413.5 L652.0,413.5 L654.0,413.5 L656.0,413.5 L658.0,413.5 L660.0,413.5 L662.0,413.5 L664.0,413.5 L666.0,413.5 L668.0,413.5 L670.0,413.5 L672.0,413.5 L674.0,413.5 L676.0,413.5 L678.0,413.5 L680.0,413.5 L682.0,413.5 L684.0,413.5 L686.0,413.5 L688.0,413.5 L690.0,413.5 L692.0,413.5 L694.0,413.5 L696.0,413.5 L698.0,413.5 L700.0,413.5 L702.0,413.5 L704.0,413.5 L706.0,413.5 L708.0,413.5 L710.0,413.5 L712.0,413.5 L714.0,413.5 L716.0,413.5 L718.0,413.5 L720.0,413.5 L722.0,413.5 L724.0,413.5 L726.0,413.5 L728.0,413.5 L730.0,413.5 L732.0,413.5 L734.0,413.5 L736.0,413.5 L738.0,413.5 L740.0,413.5 L742.0,413.5 L744.0,413.5 L746.0,413.5 L748.0,413.5 L750.0,413.5 L752.0,413.5 L754.0,413.5 L756.0,413.5 L758.0,413.5 L760.0,413.5 L762.0,413.5 L764.0,413.5 L766.0,413.5 L768.0,413.5 L770.0,413.5 L772.0,413.5 L774.0,413.5 L776.0,413.5 L778.0,413.5 L780.0,413.5 L782.0,413.5 L784.0,413.5 L786.0,413.5 L788.0,413.5 L790.0,413.5 L792.0,413.5 L794.0,413.5 L796.0,413.5 L798.0,413.5 L800.0,413.5 L802.0,413.5 L804.0,413.5 L806.0,413.5 L808.0,413.5 L810.0,413.5 L812.0,413.5 L814.0,413.5 L816.0,413.5 L818.0,413.5 L820.0,413.5 L822.0,413.5 L824.0,413.5 L826.0,413.5 L828.0,413.5 L830.0,413.5 L832.0,413.5 L834.0,413.5 L836.0,413.5 L838.0,413.5 L840.0,413.5 L842.0,413.5 L844.0,413.5 L846.0,413.5 L848.0,413.5 L850.0,413.5 L852.0,413.5 L854.0,413.5 L856.0,413.5 L858.0,413.5 L860.0,413.5 L862.0,413.5 L864.0,413.5 L866.0,413.5 L868.0,413.5 L870.0,413.5 L872.0,413.5 L874.0,413.5 L876.0,413.5 L878.0,413.5 L880.0,413.5 L882.0,413.5 L884.0,413.5 L886.0,413.5 L888.0,413.5 L890.0,413.5 L892.0,413.5 L894.0,413.5 L896.0,413.5 L898.0,413.5 L900.0,413.5 L902.0,413.5 L904.0,413.5 L906.0,413.5 L908.0,413.5 L910.0,413.5 L912.0,413.5 L914.0,413.5 L916.0,413.5 L918.0,413.5 L920.0,413.5 L922.0,413.5 L924.0,413.5 L926.0,413.5 L928.0,413.5 L930.0,413.5 L932.0,413.5 L934.0,413.5 L936.0,413.5 L938.0,413.5 L940.0,413.5 L942.0,413.5 L944.0,413.5 L946.0,413.5 L948.0,413.5 L950.0,413.5 L950.0,431.8 L948.0,431.8 L946.0,431.8 L944.0,431.8 L942.0,431.8 L940.0,431.8 L938.0,431.8 L936.0,431.8 L934.0,431.7 L932.0,431.7 L930.0,431.7 L928.0,431.7 L926.0,431.7 L924.0,431.7 L922.0,431.7 L920.0,431.7 L918.0,431.7 L916.0,431.7 L914.0,431.7 L912.0,431.7 L910.0,431.7 L908.0,431.7 L906.0,431.6 L904.0,431.6 L902.0,431.6 L900.0,431.6 L898.0,431.6 L896.0,431.6 L894.0,431.6 L892.0,431.6 L890.0,431.6 L888.0,431.6 L886.0,431.6 L884.0,431.6 L882.0,431.6 L880.0,431.6 L878.0,431.5 L876.0,431.5 L874.0,431.5 L872.0,431.5 L870.0,431.5 L868.0,431.5 L866.0,431.5 L864.0,431.5 L862.0,431.5 L860.0,431.5 L858.0,431.5 L856.0,431.5 L854.0,431.5 L852.0,431.4 L850.0,431.4 L848.0,431.4 L846.0,431.4 L844.0,431.4 L842.0,431.4 L840.0,431.4 L838.0,431.4 L836.0,431.4 L834.0,431.4 L832.0,431.4 L830.0,431.4 L828.0,431.4 L826.0,431.4 L824.0,431.4 L822.0,431.3 L820.0,431.3 L818.0,431.3 L816.0,431.3 L814.0,431.3 L812.0,431.3 L810.0,431.3 L808.0,431.3 L806.0,431.2 L804.0,431.2 L802.0,431.2 L800.0,431.2 L798.0,431.1 L796.0,431.1 L794.0,431.1 L792.0,431.0 L790.0,431.0 L788.0,431.0 L786.0,431.0 L784.0,430.9 L782.0,430.9 L780.0,430.9 L778.0,430.9 L776.0,430.8 L774.0,430.8 L772.0,430.8 L770.0,430.7 L768.0,430.7 L766.0,430.7 L764.0,430.7 L762.0,430.6 L760.0,430.6 L758.0,430.5 L756.0,430.4 L754.0,430.3 L752.0,430.2 L750.0,430.1 L748.0,430.0 L746.0,429.9 L744.0,429.8 L742.0,429.7 L740.0,429.6 L738.0,429.5 L736.0,429.4 L734.0,429.3 L732.0,429.2 L730.0,429.1 L728.0,428.9 L726.0,428.8 L724.0,428.7 L722.0,428.6 L720.0,428.5 L718.0,428.4 L716.0,428.3 L714.0,428.2 L712.0,428.1 L710.0,428.0 L708.0,427.9 L706.0,427.8 L704.0,427.7 L702.0,427.6 L700.0,427.5 L698.0,427.5 L696.0,427.5 L694.0,427.5 L692.0,427.5 L690.0,427.5 L688.0,427.5 L686.0,427.5 L684.0,427.5 L682.0,427.5 L680.0,427.5 L678.0,427.5 L676.0,427.5 L674.0,427.5 L672.0,427.5 L670.0,427.5 L668.0,427.4 L666.0,427.3 L664.0,427.2 L662.0,427.2 L660.0,427.1 L658.0,427.0 L656.0,426.9 L654.0,426.8 L652.0,426.7 L650.0,426.6 L648.0,426.6 L646.0,426.5 L644.0,426.4 L642.0,426.3 L640.0,426.2 L638.0,426.1 L636.0,426.0 L634.0,426.0 L632.0,425.9 L630.0,425.8 L628.0,425.7 L626.0,425.6 L624.0,425.5 L622.0,425.4 L620.0,425.4 L618.0,425.3 L616.0,425.2 L614.0,425.1 L612.0,425.0 L610.0,424.9 L608.0,424.8 L606.0,424.8 L604.0,424.7 L602.0,424.6 L600.0,424.5 L598.0,424.4 L596.0,424.4 L594.0,424.3 L592.0,424.2 L590.0,424.2 L588.0,424.1 L586.0,424.1 L584.0,424.0 L582.0,423.9 L580.0,423.9 L578.0,423.8 L576.0,423.7 L574.0,423.7 L572.0,423.6 L570.0,423.6 L568.0,423.5 L566.0,423.4 L564.0,423.4 L562.0,423.3 L560.0,423.2 L558.0,423.2 L556.0,423.1 L554.0,423.0 L552.0,423.0 L550.0,422.9 L548.0,422.9 L546.0,422.8 L544.0,422.7 L542.0,422.7 L540.0,422.6 L538.0,422.5 L536.0,422.4 L534.0,422.2 L532.0,422.1 L530.0,422.0 L528.0,421.9 L526.0,421.7 L524.0,421.6 L522.0,421.5 L520.0,421.4 L518.0,421.2 L516.0,421.1 L514.0,421.0 L512.0,420.9 L510.0,420.7 L508.0,420.6 L506.0,420.5 L504.0,420.4 L502.0,420.2 L500.0,420.1 L498.0,420.1 L496.0,420.1 L494.0,420.0 L492.0,420.0 L490.0,420.0 L488.0,420.0 L486.0,419.9 L484.0,419.9 L482.0,419.9 L480.0,419.9 L478.0,419.8 L476.0,419.8 L474.0,419.8 L472.0,419.8 L470.0,419.7 L468.0,419.7 L466.0,419.7 L464.0,419.7 L462.0,419.6 L460.0,419.6 L458.0,419.6 L456.0,419.6 L454.0,419.5 L452.0,419.5 L450.0,419.5 L448.0,419.5 L446.0,419.4 L444.0,419.4 L442.0,419.4 L440.0,419.4 L438.0,419.3 L436.0,419.3 L434.0,419.3 L432.0,419.3 L430.0,419.2 L428.0,419.2 L426.0,419.2 L424.0,419.2 L422.0,419.2 L420.0,419.3 L418.0,419.3 L416.0,419.3 L414.0,419.3 L412.0,419.3 L410.0,419.4 L408.0,419.4 L406.0,419.4 L404.0,419.4 L402.0,419.4 L400.0,419.4 L398.0,419.5 L396.0,419.5 L394.0,419.5 L392.0,419.5 L390.0,419.5 L388.0,419.6 L386.0,419.6 L384.0,419.6 L382.0,419.6 L380.0,419.6 L378.0,419.6 L376.0,419.7 L374.0,419.7 L372.0,419.7 L370.0,419.7 L368.0,419.7 L366.0,419.8 L364.0,419.8 L362.0,419.8 L360.0,419.8 L358.0,419.8 L356.0,419.9 L354.0,419.9 L352.0,419.9 L350.0,419.9 L348.0,419.9 L346.0,420.0 L344.0,420.0 L342.0,420.0 L340.0,420.0 L338.0,420.0 L336.0,420.0 L334.0,420.1 L332.0,420.1 L330.0,420.1 L328.0,420.1 L326.0,420.2 L324.0,420.2 L322.0,420.2 L320.0,420.3 L318.0,420.3 L316.0,420.4 L314.0,420.4 L312.0,420.4 L310.0,420.5 L308.0,420.5 L306.0,420.6 L304.0,420.6 L302.0,420.6 L300.0,420.7 L298.0,420.7 L296.0,420.7 L294.0,420.8 L292.0,420.8 L290.0,420.9 L288.0,420.9 L286.0,420.9 L284.0,421.0 L282.0,421.0 L280.0,421.0 L278.0,421.1 L276.0,421.1 L274.0,421.2 L272.0,421.2 L270.0,421.2 L268.0,421.3 L266.0,421.3 L264.0,421.3 L262.0,421.4 L260.0,421.4 L258.0,421.5 L256.0,421.5 L254.0,421.5 L252.0,421.6 L250.0,421.6 L248.0,421.7 L246.0,421.7 L244.0,421.8 L242.0,421.9 L240.0,421.9 L238.0,422.0 L236.0,422.1 L234.0,422.1 L232.0,422.2 L230.0,422.2 L228.0,422.3 L226.0,422.4 L224.0,422.4 L222.0,422.5 L220.0,422.6 L218.0,422.6 L216.0,422.7 L214.0,422.8 L212.0,422.8 L210.0,422.9 L208.0,423.0 L206.0,423.0 L204.0,423.1 L202.0,423.2 L200.0,423.2 L198.0,423.3 L196.0,423.4 L194.0,423.4 L192.0,423.5 L190.0,423.5 L188.0,423.6 L186.0,423.7 L184.0,423.7 L182.0,423.8 L180.0,423.9 L178.0,423.9 L176.0,424.0 Z" fill="#12801a" />
<path d="M176.0,423.0 L178.0,422.9 L180.0,422.9 L182.0,422.8 L184.0,422.7 L186.0,422.7 L188.0,422.6 L190.0,422.5 L192.0,422.5 L194.0,422.4 L196.0,422.4 L198.0,422.3 L200.0,422.2 L202.0,422.2 L204.0,422.1 L206.0,422.0 L208.0,422.0 L210.0,421.9 L212.0,421.8 L214.0,421.8 L216.0,421.7 L218.0,421.6 L220.0,421.6 L222.0,421.5 L224.0,421.4 L226.0,421.4 L228.0,421.3 L230.0,421.2 L232.0,421.2 L234.0,421.1 L236.0,421.1 L238.0,421.0 L240.0,420.9 L242.0,420.9 L244.0,420.8 L246.0,420.7 L248.0,420.7 L250.0,420.6 L252.0,420.6 L254.0,420.5 L256.0,420.5 L258.0,420.5 L260.0,420.4 L262.0,420.4 L264.0,420.3 L266.0,420.3 L268.0,420.3 L270.0,420.2 L272.0,420.2 L274.0,420.2 L276.0,420.1 L278.0,420.1 L280.0,420.0 L282.0,420.0 L284.0,420.0 L286.0,419.9 L288.0,419.9 L290.0,419.9 L292.0,419.8 L294.0,419.8 L296.0,419.7 L298.0,419.7 L300.0,419.7 L302.0,419.6 L304.0,419.6 L306.0,419.6 L308.0,419.5 L310.0,419.5 L312.0,419.4 L314.0,419.4 L316.0,419.4 L318.0,419.3 L320.0,419.3 L322.0,419.2 L324.0,419.2 L326.0,419.2 L328.0,419.1 L330.0,419.1 L332.0,419.1 L334.0,419.1 L336.0,419.0 L338.0,419.0 L340.0,419.0 L342.0,419.0 L344.0,419.0 L346.0,419.0 L348.0,418.9 L350.0,418.9 L352.0,418.9 L354.0,418.9 L356.0,418.9 L358.0,418.8 L360.0,418.8 L362.0,418.8 L364.0,418.8 L366.0,418.8 L368.0,418.7 L370.0,418.7 L372.0,418.7 L374.0,418.7 L376.0,418.7 L378.0,418.6 L380.0,418.6 L382.0,418.6 L384.0,418.6 L386.0,418.6 L388.0,418.6 L390.0,418.5 L392.0,418.5 L394.0,418.5 L396.0,418.5 L398.0,418.5 L400.0,418.4 L402.0,418.4 L404.0,418.4 L406.0,418.4 L408.0,418.4 L410.0,418.4 L412.0,418.3 L414.0,418.3 L416.0,418.3 L418.0,418.3 L420.0,418.3 L422.0,418.2 L424.0,418.2 L426.0,418.2 L428.0,418.2 L430.0,418.2 L432.0,418.3 L434.0,418.3 L436.0,418.3 L438.0,418.3 L440.0,418.4 L442.0,418.4 L444.0,418.4 L446.0,418.4 L448.0,418.5 L450.0,418.5 L452.0,418.5 L454.0,418.5 L456.0,418.6 L458.0,418.6 L460.0,418.6 L462.0,418.6 L464.0,418.7 L466.0,418.7 L468.0,418.7 L470.0,418.7 L472.0,418.8 L474.0,418.8 L476.0,418.8 L478.0,418.8 L480.0,418.9 L482.0,418.9 L484.0,418.9 L486.0,418.9 L488.0,419.0 L490.0,419.0 L492.0,419.0 L494.0,419.0 L496.0,419.1 L498.0,419.1 L500.0,419.1 L502.0,419.2 L504.0,419.4 L506.0,419.5 L508.0,419.6 L510.0,419.7 L512.0,419.9 L514.0,420.0 L516.0,420.1 L518.0,420.2 L520.0,420.4 L522.0,420.5 L524.0,420.6 L526.0,420.7 L528.0,420.9 L530.0,421.0 L532.0,421.1 L534.0,421.2 L536.0,421.4 L538.0,421.5 L540.0,421.6 L542.0,421.7 L544.0,421.7 L546.0,421.8 L548.0,421.9 L550.0,421.9 L552.0,422.0 L554.0,422.0 L556.0,422.1 L558.0,422.2 L560.0,422.2 L562.0,422.3 L564.0,422.4 L566.0,422.4 L568.0,422.5 L570.0,422.6 L572.0,422.6 L574.0,422.7 L576.0,422.7 L578.0,422.8 L580.0,422.9 L582.0,422.9 L584.0,423.0 L586.0,423.1 L588.0,423.1 L590.0,423.2 L592.0,423.2 L594.0,423.3 L596.0,423.4 L598.0,423.4 L600.0,423.5 L602.0,423.6 L604.0,423.7 L606.0,423.8 L608.0,423.8 L610.0,423.9 L612.0,424.0 L614.0,424.1 L616.0,424.2 L618.0,424.3 L620.0,424.4 L622.0,424.4 L624.0,424.5 L626.0,424.6 L628.0,424.7 L630.0,424.8 L632.0,424.9 L634.0,425.0 L636.0,425.0 L638.0,425.1 L640.0,425.2 L642.0,425.3 L644.0,425.4 L646.0,425.5 L648.0,425.6 L650.0,425.6 L652.0,425.7 L654.0,425.8 L656.0,425.9 L658.0,426.0 L660.0,426.1 L662.0,426.2 L664.0,426.2 L666.0,426.3 L668.0,426.4 L670.0,426.5 L672.0,426.5 L674.0,426.5 L676.0,426.5 L678.0,426.5 L680.0,426.5 L682.0,426.5 L684.0,426.5 L686.0,426.5 L688.0,426.5 L690.0,426.5 L692.0,426.5 L694.0,426.5 L696.0,426.5 L698.0,426.5 L700.0,426.5 L702.0,426.6 L704.0,426.7 L706.0,426.8 L708.0,426.9 L710.0,427.0 L712.0,427.1 L714.0,427.2 L716.0,427.3 L718.0,427.4 L720.0,427.5 L722.0,427.6 L724.0,427.7 L726.0,427.8 L728.0,427.9 L730.0,428.1 L732.0,428.2 L734.0,428.3 L736.0,428.4 L738.0,428.5 L740.0,428.6 L742.0,428.7 L744.0,428.8 L746.0,428.9 L748.0,429.0 L750.0,429.1 L752.0,429.2 L754.0,429.3 L756.0,429.4 L758.0,429.5 L760.0,429.6 L762.0,429.6 L764.0,429.7 L766.0,429.7 L768.0,429.7 L770.0,429.7 L772.0,429.8 L774.0,429.8 L776.0,429.8 L778.0,429.9 L780.0,429.9 L782.0,429.9 L784.0,429.9 L786.0,430.0 L788.0,430.0 L790.0,430.0 L792.0,430.0 L794.0,430.1 L796.0,430.1 L798.0,430.1 L800.0,430.2 L802.0,430.2 L804.0,430.2 L806.0,430.2 L808.0,430.3 L810.0,430.3 L812.0,430.3 L814.0,430.3 L816.0,430.3 L818.0,430.3 L820.0,430.3 L822.0,430.3 L824.0,430.4 L826.0,430.4 L828.0,430.4 L830.0,430.4 L832.0,430.4 L834.0,430.4 L836.0,430.4 L838.0,430.4 L840.0,430.4 L842.0,430.4 L844.0,430.4 L846.0,430.4 L848.0,430.4 L850.0,430.4 L852.0,430.4 L854.0,430.5 L856.0,430.5 L858.0,430.5 L860.0,430.5 L862.0,430.5 L864.0,430.5 L866.0,430.5 L868.0,430.5 L870.0,430.5 L872.0,430.5 L874.0,430.5 L876.0,430.5 L878.0,430.5 L880.0,430.6 L882.0,430.6 L884.0,430.6 L886.0,430.6 L888.0,430.6 L890.0,430.6 L892.0,430.6 L894.0,430.6 L896.0,430.6 L898.0,430.6 L900.0,430.6 L902.0,430.6 L904.0,430.6 L906.0,430.6 L908.0,430.7 L910.0,430.7 L912.0,430.7 L914.0,430.7 L916.0,430.7 L918.0,430.7 L920.0,430.7 L922.0,430.7 L924.0,430.7 L926.0,430.7 L928.0,430.7 L930.0,430.7 L932.0,430.7 L934.0,430.7 L936.0,430.8 L938.0,430.8 L940.0,430.8 L942.0,430.8 L944.0,430.8 L946.0,430.8 L948.0,430.8 L950.0,430.8" stroke="#d88a20" stroke-width="2" fill="none" opacity="0.9"/>
<path d="M522,440.0 L640,468" stroke="#1a0a90" stroke-width="0.8" stroke-dasharray="1.5,1.5" fill="none" opacity="0.6"/>
<path d="M527,442.5 L640,471" stroke="#1a0a90" stroke-width="0.8" stroke-dasharray="1.5,1.5" fill="none" opacity="0.6"/>
<path d="M532,445.0 L640,474" stroke="#1a0a90" stroke-width="0.8" stroke-dasharray="1.5,1.5" fill="none" opacity="0.6"/>
<path d="M537,447.5 L640,477" stroke="#1a0a90" stroke-width="0.8" stroke-dasharray="1.5,1.5" fill="none" opacity="0.6"/>
<path d="M636.1,461.4 L698.8,454.7" stroke="#1a1090" stroke-width="0.9" stroke-dasharray="1.5,1.5" fill="none" opacity="0.75"/>
<path d="M760.2,472.3 L794.2,464.3" stroke="#1a1090" stroke-width="0.9" stroke-dasharray="1.5,1.5" fill="none" opacity="0.75"/>
<path d="M643.0,443.3 L687.1,437.5" stroke="#1a1090" stroke-width="0.9" stroke-dasharray="1.5,1.5" fill="none" opacity="0.75"/>
<path d="M827.7,461.8 L886.2,457.9" stroke="#1a1090" stroke-width="0.9" stroke-dasharray="1.5,1.5" fill="none" opacity="0.75"/>
<path d="M763.2,463.9 L845.2,456.4" stroke="#1a1090" stroke-width="0.9" stroke-dasharray="1.5,1.5" fill="none" opacity="0.75"/>
<path d="M774.9,457.3 L808.7,450.8" stroke="#1a1090" stroke-width="0.9" stroke-dasharray="1.5,1.5" fill="none" opacity="0.75"/>
<path d="M656.4,449.5 L688.3,443.7" stroke="#1a1090" stroke-width="0.9" stroke-dasharray="1.5,1.5" fill="none" opacity="0.75"/>
<path d="M790.0,459.2 L872.8,450.7" stroke="#1a1090" stroke-width="0.9" stroke-dasharray="1.5,1.5" fill="none" opacity="0.75"/>
<path d="M686.4,464.0 L764.4,455.4" stroke="#1a1090" stroke-width="0.9" stroke-dasharray="1.5,1.5" fill="none" opacity="0.75"/>
<path d="M841.2,473.4 L877.1,469.1" stroke="#1a1090" stroke-width="0.9" stroke-dasharray="1.5,1.5" fill="none" opacity="0.75"/>
<path d="M869.0,460.9 L925.1,456.1" stroke="#1a1090" stroke-width="0.9" stroke-dasharray="1.5,1.5" fill="none" opacity="0.75"/>
<path d="M722.3,467.0 L775.5,460.5" stroke="#1a1090" stroke-width="0.9" stroke-dasharray="1.5,1.5" fill="none" opacity="0.75"/>
<path d="M747.0,459.0 L831.2,450.4" stroke="#1a1090" stroke-width="0.9" stroke-dasharray="1.5,1.5" fill="none" opacity="0.75"/>
<path d="M834.0,459.6 L923.5,455.6" stroke="#1a1090" stroke-width="0.9" stroke-dasharray="1.5,1.5" fill="none" opacity="0.75"/>
<path d="M835.4,451.9 L923.3,445.4" stroke="#1a1090" stroke-width="0.9" stroke-dasharray="1.5,1.5" fill="none" opacity="0.75"/>
<path d="M788.4,455.3 L831.1,448.8" stroke="#1a1090" stroke-width="0.9" stroke-dasharray="1.5,1.5" fill="none" opacity="0.75"/>
<path d="M651.2,449.4 L685.0,440.4" stroke="#1a1090" stroke-width="0.9" stroke-dasharray="1.5,1.5" fill="none" opacity="0.75"/>
<path d="M588.3,446.8 L666.4,442.9" stroke="#1a1090" stroke-width="0.9" stroke-dasharray="1.5,1.5" fill="none" opacity="0.75"/>
<path d="M654.0,449.0 L730.2,445.7" stroke="#1a1090" stroke-width="0.9" stroke-dasharray="1.5,1.5" fill="none" opacity="0.75"/>
<path d="M756.7,458.1 L789.3,453.1" stroke="#1a1090" stroke-width="0.9" stroke-dasharray="1.5,1.5" fill="none" opacity="0.75"/>
<path d="M841.9,464.2 L930.7,455.3" stroke="#1a1090" stroke-width="0.9" stroke-dasharray="1.5,1.5" fill="none" opacity="0.75"/>
<path d="M659.1,458.3 L693.7,455.1" stroke="#1a1090" stroke-width="0.9" stroke-dasharray="1.5,1.5" fill="none" opacity="0.75"/>
<path d="M623.2,451.5 L677.6,447.6" stroke="#1a1090" stroke-width="0.9" stroke-dasharray="1.5,1.5" fill="none" opacity="0.75"/>
<path d="M573.6,445.1 L655.6,436.4" stroke="#1a1090" stroke-width="0.9" stroke-dasharray="1.5,1.5" fill="none" opacity="0.75"/>
<path d="M846.9,465.4 L899.6,459.3" stroke="#1a1090" stroke-width="0.9" stroke-dasharray="1.5,1.5" fill="none" opacity="0.75"/>
<path d="M766.0,463.0 L831.8,456.3" stroke="#1a1090" stroke-width="0.9" stroke-dasharray="1.5,1.5" fill="none" opacity="0.75"/>
<path d="M861.0,466.1 L921.4,458.7" stroke="#1a1090" stroke-width="0.9" stroke-dasharray="1.5,1.5" fill="none" opacity="0.75"/>
<path d="M636.0,443.1 L684.1,436.9" stroke="#1a1090" stroke-width="0.9" stroke-dasharray="1.5,1.5" fill="none" opacity="0.75"/>
<path d="M735.5,465.9 L766.2,459.4" stroke="#1a1090" stroke-width="0.9" stroke-dasharray="1.5,1.5" fill="none" opacity="0.75"/>
<path d="M566.4,435.6 L633.4,432.2" stroke="#1a1090" stroke-width="0.9" stroke-dasharray="1.5,1.5" fill="none" opacity="0.75"/>
<path d="M760.7,459.4 L818.7,454.3" stroke="#1a1090" stroke-width="0.9" stroke-dasharray="1.5,1.5" fill="none" opacity="0.75"/>
<path d="M786.2,473.0 L860.5,469.7" stroke="#1a1090" stroke-width="0.9" stroke-dasharray="1.5,1.5" fill="none" opacity="0.75"/>
<path d="M776.3,470.2 L864.1,464.4" stroke="#1a1090" stroke-width="0.9" stroke-dasharray="1.5,1.5" fill="none" opacity="0.75"/>
<path d="M749.7,467.3 L798.9,462.4" stroke="#1a1090" stroke-width="0.9" stroke-dasharray="1.5,1.5" fill="none" opacity="0.75"/>
<path d="M900,463 L949,468" stroke="#202080" stroke-width="0.8" stroke-dasharray="1.5,1" fill="none" opacity="0.8"/>
<path d="M900,466 L949,470" stroke="#202080" stroke-width="0.8" stroke-dasharray="1.5,1" fill="none" opacity="0.8"/>
<path d="M900,469 L949,471" stroke="#202080" stroke-width="0.8" stroke-dasharray="1.5,1" fill="none" opacity="0.8"/>
<path d="M900,471 L949,472" stroke="#202080" stroke-width="0.8" stroke-dasharray="1.5,1" fill="none" opacity="0.8"/>
<path d="M900,473 L949,471" stroke="#202080" stroke-width="0.8" stroke-dasharray="1.5,1" fill="none" opacity="0.8"/>
</g>
<line x1="203.5" y1="382" x2="203.5" y2="510" stroke="#555" stroke-width="1" stroke-dasharray="2,2" opacity="0.8"/>
<line x1="260.5" y1="382" x2="260.5" y2="510" stroke="#555" stroke-width="1" stroke-dasharray="2,2" opacity="0.8"/>
<line x1="316.5" y1="382" x2="316.5" y2="510" stroke="#555" stroke-width="1" stroke-dasharray="2,2" opacity="0.8"/>
<line x1="373.5" y1="382" x2="373.5" y2="510" stroke="#555" stroke-width="1" stroke-dasharray="2,2" opacity="0.8"/>
<line x1="429.5" y1="382" x2="429.5" y2="510" stroke="#555" stroke-width="1" stroke-dasharray="2,2" opacity="0.8"/>
<line x1="486.5" y1="382" x2="486.5" y2="510" stroke="#555" stroke-width="1" stroke-dasharray="2,2" opacity="0.8"/>
<line x1="542.5" y1="382" x2="542.5" y2="510" stroke="#555" stroke-width="1" stroke-dasharray="2,2" opacity="0.8"/>
<line x1="599.5" y1="382" x2="599.5" y2="510" stroke="#555" stroke-width="1" stroke-dasharray="2,2" opacity="0.8"/>
<line x1="655.5" y1="382" x2="655.5" y2="510" stroke="#555" stroke-width="1" stroke-dasharray="2,2" opacity="0.8"/>
<line x1="712.5" y1="382" x2="712.5" y2="510" stroke="#555" stroke-width="1" stroke-dasharray="2,2" opacity="0.8"/>
<line x1="768.5" y1="382" x2="768.5" y2="510" stroke="#555" stroke-width="1" stroke-dasharray="2,2" opacity="0.8"/>
<line x1="825.5" y1="382" x2="825.5" y2="510" stroke="#555" stroke-width="1" stroke-dasharray="2,2" opacity="0.8"/>
<line x1="882.5" y1="382" x2="882.5" y2="510" stroke="#555" stroke-width="1" stroke-dasharray="2,2" opacity="0.8"/>
<line x1="938.5" y1="382" x2="938.5" y2="510" stroke="#555" stroke-width="1" stroke-dasharray="2,2" opacity="0.8"/>
<line x1="176" y1="413.5" x2="950" y2="413.5" stroke="#555" stroke-width="1" stroke-dasharray="2,2" opacity="0.8"/>
<line x1="176" y1="472.5" x2="950" y2="472.5" stroke="#555" stroke-width="1" stroke-dasharray="2,2" opacity="0.8"/>
<rect x="176.5" y="381.5" width="773" height="129" fill="none" stroke="#222" stroke-width="1" />
<rect x="249.5" y="400.5" width="23" height="12" fill="#fff" stroke="#333" stroke-width="1" />
<text x="260.4" y="409.9" font-size="9.6" fill="#333" text-anchor="middle" textLength="13.799999999999999" lengthAdjust="spacingAndGlyphs" >646</text>
<rect x="348.5" y="400.5" width="24" height="12" fill="#fff" stroke="#333" stroke-width="1" />
<text x="359.8" y="409.9" font-size="9.6" fill="#333" text-anchor="middle" textLength="13.799999999999999" lengthAdjust="spacingAndGlyphs" >648</text>
<rect x="448.5" y="398.5" width="23" height="12" fill="#fff" stroke="#333" stroke-width="1" />
<text x="459.2" y="407.7" font-size="9.6" fill="#333" text-anchor="middle" textLength="13.799999999999999" lengthAdjust="spacingAndGlyphs" >600</text>
<rect x="548.5" y="403.5" width="23" height="12" fill="#fff" stroke="#333" stroke-width="1" />
<text x="559.4" y="412.2" font-size="9.6" fill="#333" text-anchor="middle" textLength="13.799999999999999" lengthAdjust="spacingAndGlyphs" >741</text>
<rect x="747.5" y="410.5" width="23" height="12" fill="#fff" stroke="#333" stroke-width="1" />
<text x="758.5" y="419.5" font-size="9.6" fill="#333" text-anchor="middle" textLength="13.799999999999999" lengthAdjust="spacingAndGlyphs" >695</text>
<rect x="346.5" y="422.5" width="27" height="10" fill="#fff" stroke="#333" stroke-width="1" />
<text x="359.7" y="430.5" font-size="9.6" fill="#333" text-anchor="middle" textLength="18.4" lengthAdjust="spacingAndGlyphs" >1382</text>
<rect x="373.5" y="429.5" width="28" height="12" fill="#fff" stroke="#333" stroke-width="1" />
<text x="387.1" y="438.8" font-size="9.6" fill="#333" text-anchor="middle" textLength="18.4" lengthAdjust="spacingAndGlyphs" >2513</text>
<rect x="398.5" y="451.5" width="27" height="12" fill="#fff" stroke="#333" stroke-width="1" />
<text x="411.2" y="460.6" font-size="9.6" fill="#333" text-anchor="middle" textLength="18.4" lengthAdjust="spacingAndGlyphs" >3321</text>
<rect x="546.5" y="423.5" width="27" height="11" fill="#fff" stroke="#333" stroke-width="1" />
<text x="559.5" y="432.3" font-size="9.6" fill="#333" text-anchor="middle" textLength="18.4" lengthAdjust="spacingAndGlyphs" >1246</text>
<rect x="760.5" y="441.5" width="27" height="12" fill="#fff" stroke="#333" stroke-width="1" />
<text x="773.1" y="450.4" font-size="9.6" fill="#333" text-anchor="middle" textLength="18.4" lengthAdjust="spacingAndGlyphs" >1528</text>
<rect x="738.5" y="484.5" width="27" height="11" fill="#fff" stroke="#333" stroke-width="1" />
<text x="751.7" y="492.7" font-size="9.6" fill="#333" text-anchor="middle" textLength="18.4" lengthAdjust="spacingAndGlyphs" >3430</text>
<defs><linearGradient id="cbar" x1="0" y1="0" x2="0" y2="1"><stop offset="0" stop-color="#ff3a10"/><stop offset="0.2" stop-color="#ff0000"/><stop offset="0.33" stop-color="#901070"/><stop offset="0.44" stop-color="#0000ff"/><stop offset="0.64" stop-color="#8a8cf0"/><stop offset="0.78" stop-color="#6a7898"/><stop offset="0.93" stop-color="#1a7a2a"/><stop offset="1" stop-color="#1a7a2a"/></linearGradient></defs>
<rect x="975.5" y="388.5" width="12" height="65" fill="url(#cbar)" stroke="#333" stroke-width="1" />
<text x="991.4" y="393.5" font-size="9.6" fill="#222" text-anchor="start" textLength="18.68" lengthAdjust="spacingAndGlyphs" >3430</text>
<text x="991.4" y="414.7" font-size="9.6" fill="#222" text-anchor="start" textLength="18.68" lengthAdjust="spacingAndGlyphs" >2520</text>
<text x="991.4" y="434.4" font-size="9.6" fill="#222" text-anchor="start" textLength="18.68" lengthAdjust="spacingAndGlyphs" >1610</text>
<text x="991.4" y="455.5" font-size="9.6" fill="#222" text-anchor="start" textLength="14.01" lengthAdjust="spacingAndGlyphs" >700</text>
</svg></body></html>
